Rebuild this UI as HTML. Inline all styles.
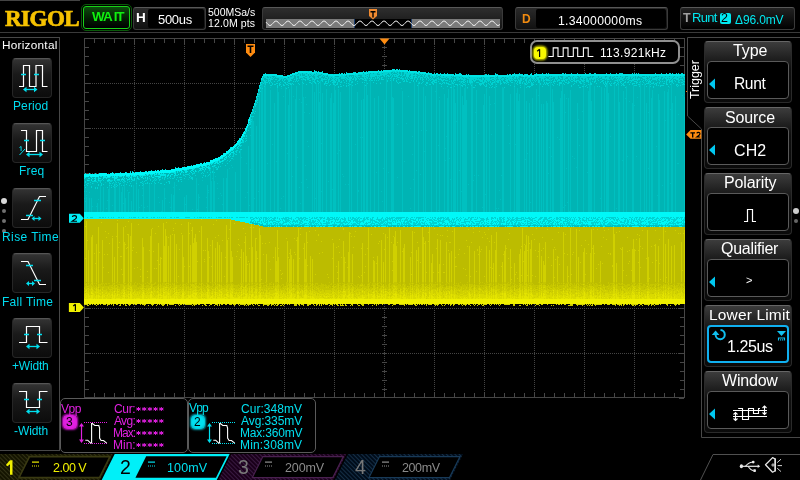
<!DOCTYPE html>
<html><head><meta charset="utf-8">
<style>
*{margin:0;padding:0;box-sizing:border-box}
html,body{width:800px;height:480px;background:#000;overflow:hidden}
body{position:relative;font-family:"Liberation Sans", sans-serif;color:#fff}
.a{position:absolute}
.t{position:absolute;white-space:nowrap;line-height:1;will-change:transform}
</style></head><body>
<svg width="800" height="480" style="position:absolute;left:0;top:0">
<g fill="#444444"><path d="M134.5 40V398" stroke="#444444" stroke-dasharray="1 1"/><path d="M184.5 40V398" stroke="#444444" stroke-dasharray="1 1"/><path d="M234.5 40V398" stroke="#444444" stroke-dasharray="1 1"/><path d="M284.5 40V398" stroke="#444444" stroke-dasharray="1 1"/><path d="M334.5 40V398" stroke="#444444" stroke-dasharray="1 1"/><path d="M384.5 40V398" stroke="#444444" stroke-dasharray="1 1"/><path d="M434.5 40V398" stroke="#444444" stroke-dasharray="1 1"/><path d="M484.5 40V398" stroke="#444444" stroke-dasharray="1 1"/><path d="M534.5 40V398" stroke="#444444" stroke-dasharray="1 1"/><path d="M584.5 40V398" stroke="#444444" stroke-dasharray="1 1"/><path d="M634.5 40V398" stroke="#444444" stroke-dasharray="1 1"/><path d="M86 83.5H684" stroke="#444444" stroke-dasharray="1 1"/><path d="M86 128.5H684" stroke="#444444" stroke-dasharray="1 1"/><path d="M86 173.5H684" stroke="#444444" stroke-dasharray="1 1"/><path d="M86 218.5H684" stroke="#444444" stroke-dasharray="1 1"/><path d="M86 263.5H684" stroke="#444444" stroke-dasharray="1 1"/><path d="M86 308.5H684" stroke="#444444" stroke-dasharray="1 1"/><path d="M86 353.5H684" stroke="#444444" stroke-dasharray="1 1"/></g><g fill="#464646"><rect x="84" y="38" width="601" height="1"/><rect x="84" y="397" width="601" height="1"/><rect x="84" y="38" width="1" height="360"/><rect x="684" y="38" width="1" height="360"/><rect x="84" y="39" width="1" height="5"/><rect x="84" y="392" width="1" height="5"/><rect x="94" y="39" width="1" height="4"/><rect x="94" y="393" width="1" height="4"/><rect x="104" y="39" width="1" height="4"/><rect x="104" y="393" width="1" height="4"/><rect x="114" y="39" width="1" height="4"/><rect x="114" y="393" width="1" height="4"/><rect x="124" y="39" width="1" height="4"/><rect x="124" y="393" width="1" height="4"/><rect x="134" y="39" width="1" height="5"/><rect x="134" y="392" width="1" height="5"/><rect x="144" y="39" width="1" height="4"/><rect x="144" y="393" width="1" height="4"/><rect x="154" y="39" width="1" height="4"/><rect x="154" y="393" width="1" height="4"/><rect x="164" y="39" width="1" height="4"/><rect x="164" y="393" width="1" height="4"/><rect x="174" y="39" width="1" height="4"/><rect x="174" y="393" width="1" height="4"/><rect x="184" y="39" width="1" height="5"/><rect x="184" y="392" width="1" height="5"/><rect x="194" y="39" width="1" height="4"/><rect x="194" y="393" width="1" height="4"/><rect x="204" y="39" width="1" height="4"/><rect x="204" y="393" width="1" height="4"/><rect x="214" y="39" width="1" height="4"/><rect x="214" y="393" width="1" height="4"/><rect x="224" y="39" width="1" height="4"/><rect x="224" y="393" width="1" height="4"/><rect x="234" y="39" width="1" height="5"/><rect x="234" y="392" width="1" height="5"/><rect x="244" y="39" width="1" height="4"/><rect x="244" y="393" width="1" height="4"/><rect x="254" y="39" width="1" height="4"/><rect x="254" y="393" width="1" height="4"/><rect x="264" y="39" width="1" height="4"/><rect x="264" y="393" width="1" height="4"/><rect x="274" y="39" width="1" height="4"/><rect x="274" y="393" width="1" height="4"/><rect x="284" y="39" width="1" height="5"/><rect x="284" y="392" width="1" height="5"/><rect x="294" y="39" width="1" height="4"/><rect x="294" y="393" width="1" height="4"/><rect x="304" y="39" width="1" height="4"/><rect x="304" y="393" width="1" height="4"/><rect x="314" y="39" width="1" height="4"/><rect x="314" y="393" width="1" height="4"/><rect x="324" y="39" width="1" height="4"/><rect x="324" y="393" width="1" height="4"/><rect x="334" y="39" width="1" height="5"/><rect x="334" y="392" width="1" height="5"/><rect x="344" y="39" width="1" height="4"/><rect x="344" y="393" width="1" height="4"/><rect x="354" y="39" width="1" height="4"/><rect x="354" y="393" width="1" height="4"/><rect x="364" y="39" width="1" height="4"/><rect x="364" y="393" width="1" height="4"/><rect x="374" y="39" width="1" height="4"/><rect x="374" y="393" width="1" height="4"/><rect x="384" y="39" width="1" height="5"/><rect x="384" y="392" width="1" height="5"/><rect x="394" y="39" width="1" height="4"/><rect x="394" y="393" width="1" height="4"/><rect x="404" y="39" width="1" height="4"/><rect x="404" y="393" width="1" height="4"/><rect x="414" y="39" width="1" height="4"/><rect x="414" y="393" width="1" height="4"/><rect x="424" y="39" width="1" height="4"/><rect x="424" y="393" width="1" height="4"/><rect x="434" y="39" width="1" height="5"/><rect x="434" y="392" width="1" height="5"/><rect x="444" y="39" width="1" height="4"/><rect x="444" y="393" width="1" height="4"/><rect x="454" y="39" width="1" height="4"/><rect x="454" y="393" width="1" height="4"/><rect x="464" y="39" width="1" height="4"/><rect x="464" y="393" width="1" height="4"/><rect x="474" y="39" width="1" height="4"/><rect x="474" y="393" width="1" height="4"/><rect x="484" y="39" width="1" height="5"/><rect x="484" y="392" width="1" height="5"/><rect x="494" y="39" width="1" height="4"/><rect x="494" y="393" width="1" height="4"/><rect x="504" y="39" width="1" height="4"/><rect x="504" y="393" width="1" height="4"/><rect x="514" y="39" width="1" height="4"/><rect x="514" y="393" width="1" height="4"/><rect x="524" y="39" width="1" height="4"/><rect x="524" y="393" width="1" height="4"/><rect x="534" y="39" width="1" height="5"/><rect x="534" y="392" width="1" height="5"/><rect x="544" y="39" width="1" height="4"/><rect x="544" y="393" width="1" height="4"/><rect x="554" y="39" width="1" height="4"/><rect x="554" y="393" width="1" height="4"/><rect x="564" y="39" width="1" height="4"/><rect x="564" y="393" width="1" height="4"/><rect x="574" y="39" width="1" height="4"/><rect x="574" y="393" width="1" height="4"/><rect x="584" y="39" width="1" height="5"/><rect x="584" y="392" width="1" height="5"/><rect x="594" y="39" width="1" height="4"/><rect x="594" y="393" width="1" height="4"/><rect x="604" y="39" width="1" height="4"/><rect x="604" y="393" width="1" height="4"/><rect x="614" y="39" width="1" height="4"/><rect x="614" y="393" width="1" height="4"/><rect x="624" y="39" width="1" height="4"/><rect x="624" y="393" width="1" height="4"/><rect x="634" y="39" width="1" height="5"/><rect x="634" y="392" width="1" height="5"/><rect x="644" y="39" width="1" height="4"/><rect x="644" y="393" width="1" height="4"/><rect x="654" y="39" width="1" height="4"/><rect x="654" y="393" width="1" height="4"/><rect x="664" y="39" width="1" height="4"/><rect x="664" y="393" width="1" height="4"/><rect x="674" y="39" width="1" height="4"/><rect x="674" y="393" width="1" height="4"/><rect x="684" y="39" width="1" height="5"/><rect x="684" y="392" width="1" height="5"/><rect x="85" y="38" width="5" height="1"/><rect x="679" y="38" width="5" height="1"/><rect x="85" y="47" width="4" height="1"/><rect x="680" y="47" width="4" height="1"/><rect x="85" y="56" width="4" height="1"/><rect x="680" y="56" width="4" height="1"/><rect x="85" y="65" width="4" height="1"/><rect x="680" y="65" width="4" height="1"/><rect x="85" y="74" width="4" height="1"/><rect x="680" y="74" width="4" height="1"/><rect x="85" y="83" width="5" height="1"/><rect x="679" y="83" width="5" height="1"/><rect x="85" y="92" width="4" height="1"/><rect x="680" y="92" width="4" height="1"/><rect x="85" y="101" width="4" height="1"/><rect x="680" y="101" width="4" height="1"/><rect x="85" y="110" width="4" height="1"/><rect x="680" y="110" width="4" height="1"/><rect x="85" y="119" width="4" height="1"/><rect x="680" y="119" width="4" height="1"/><rect x="85" y="128" width="5" height="1"/><rect x="679" y="128" width="5" height="1"/><rect x="85" y="137" width="4" height="1"/><rect x="680" y="137" width="4" height="1"/><rect x="85" y="146" width="4" height="1"/><rect x="680" y="146" width="4" height="1"/><rect x="85" y="155" width="4" height="1"/><rect x="680" y="155" width="4" height="1"/><rect x="85" y="164" width="4" height="1"/><rect x="680" y="164" width="4" height="1"/><rect x="85" y="173" width="5" height="1"/><rect x="679" y="173" width="5" height="1"/><rect x="85" y="182" width="4" height="1"/><rect x="680" y="182" width="4" height="1"/><rect x="85" y="191" width="4" height="1"/><rect x="680" y="191" width="4" height="1"/><rect x="85" y="200" width="4" height="1"/><rect x="680" y="200" width="4" height="1"/><rect x="85" y="209" width="4" height="1"/><rect x="680" y="209" width="4" height="1"/><rect x="85" y="218" width="5" height="1"/><rect x="679" y="218" width="5" height="1"/><rect x="85" y="227" width="4" height="1"/><rect x="680" y="227" width="4" height="1"/><rect x="85" y="236" width="4" height="1"/><rect x="680" y="236" width="4" height="1"/><rect x="85" y="245" width="4" height="1"/><rect x="680" y="245" width="4" height="1"/><rect x="85" y="254" width="4" height="1"/><rect x="680" y="254" width="4" height="1"/><rect x="85" y="263" width="5" height="1"/><rect x="679" y="263" width="5" height="1"/><rect x="85" y="272" width="4" height="1"/><rect x="680" y="272" width="4" height="1"/><rect x="85" y="281" width="4" height="1"/><rect x="680" y="281" width="4" height="1"/><rect x="85" y="290" width="4" height="1"/><rect x="680" y="290" width="4" height="1"/><rect x="85" y="299" width="4" height="1"/><rect x="680" y="299" width="4" height="1"/><rect x="85" y="308" width="5" height="1"/><rect x="679" y="308" width="5" height="1"/><rect x="85" y="317" width="4" height="1"/><rect x="680" y="317" width="4" height="1"/><rect x="85" y="326" width="4" height="1"/><rect x="680" y="326" width="4" height="1"/><rect x="85" y="335" width="4" height="1"/><rect x="680" y="335" width="4" height="1"/><rect x="85" y="344" width="4" height="1"/><rect x="680" y="344" width="4" height="1"/><rect x="85" y="353" width="5" height="1"/><rect x="679" y="353" width="5" height="1"/><rect x="85" y="362" width="4" height="1"/><rect x="680" y="362" width="4" height="1"/><rect x="85" y="371" width="4" height="1"/><rect x="680" y="371" width="4" height="1"/><rect x="85" y="380" width="4" height="1"/><rect x="680" y="380" width="4" height="1"/><rect x="85" y="389" width="4" height="1"/><rect x="680" y="389" width="4" height="1"/><rect x="85" y="398" width="5" height="1"/><rect x="679" y="398" width="5" height="1"/><rect x="382" y="47" width="5" height="1"/><rect x="382" y="56" width="5" height="1"/><rect x="382" y="65" width="5" height="1"/><rect x="382" y="74" width="5" height="1"/><rect x="382" y="83" width="5" height="1"/><rect x="382" y="92" width="5" height="1"/><rect x="382" y="101" width="5" height="1"/><rect x="382" y="110" width="5" height="1"/><rect x="382" y="119" width="5" height="1"/><rect x="382" y="128" width="5" height="1"/><rect x="382" y="137" width="5" height="1"/><rect x="382" y="146" width="5" height="1"/><rect x="382" y="155" width="5" height="1"/><rect x="382" y="164" width="5" height="1"/><rect x="382" y="173" width="5" height="1"/><rect x="382" y="182" width="5" height="1"/><rect x="382" y="191" width="5" height="1"/><rect x="382" y="200" width="5" height="1"/><rect x="382" y="209" width="5" height="1"/><rect x="382" y="218" width="5" height="1"/><rect x="382" y="227" width="5" height="1"/><rect x="382" y="236" width="5" height="1"/><rect x="382" y="245" width="5" height="1"/><rect x="382" y="254" width="5" height="1"/><rect x="382" y="263" width="5" height="1"/><rect x="382" y="272" width="5" height="1"/><rect x="382" y="281" width="5" height="1"/><rect x="382" y="290" width="5" height="1"/><rect x="382" y="299" width="5" height="1"/><rect x="382" y="308" width="5" height="1"/><rect x="382" y="317" width="5" height="1"/><rect x="382" y="326" width="5" height="1"/><rect x="382" y="335" width="5" height="1"/><rect x="382" y="344" width="5" height="1"/><rect x="382" y="353" width="5" height="1"/><rect x="382" y="362" width="5" height="1"/><rect x="382" y="371" width="5" height="1"/><rect x="382" y="380" width="5" height="1"/><rect x="382" y="389" width="5" height="1"/><rect x="94" y="216" width="1" height="5"/><rect x="104" y="216" width="1" height="5"/><rect x="114" y="216" width="1" height="5"/><rect x="124" y="216" width="1" height="5"/><rect x="134" y="216" width="1" height="5"/><rect x="144" y="216" width="1" height="5"/><rect x="154" y="216" width="1" height="5"/><rect x="164" y="216" width="1" height="5"/><rect x="174" y="216" width="1" height="5"/><rect x="184" y="216" width="1" height="5"/><rect x="194" y="216" width="1" height="5"/><rect x="204" y="216" width="1" height="5"/><rect x="214" y="216" width="1" height="5"/><rect x="224" y="216" width="1" height="5"/><rect x="234" y="216" width="1" height="5"/><rect x="244" y="216" width="1" height="5"/><rect x="254" y="216" width="1" height="5"/><rect x="264" y="216" width="1" height="5"/><rect x="274" y="216" width="1" height="5"/><rect x="284" y="216" width="1" height="5"/><rect x="294" y="216" width="1" height="5"/><rect x="304" y="216" width="1" height="5"/><rect x="314" y="216" width="1" height="5"/><rect x="324" y="216" width="1" height="5"/><rect x="334" y="216" width="1" height="5"/><rect x="344" y="216" width="1" height="5"/><rect x="354" y="216" width="1" height="5"/><rect x="364" y="216" width="1" height="5"/><rect x="374" y="216" width="1" height="5"/><rect x="384" y="216" width="1" height="5"/><rect x="394" y="216" width="1" height="5"/><rect x="404" y="216" width="1" height="5"/><rect x="414" y="216" width="1" height="5"/><rect x="424" y="216" width="1" height="5"/><rect x="434" y="216" width="1" height="5"/><rect x="444" y="216" width="1" height="5"/><rect x="454" y="216" width="1" height="5"/><rect x="464" y="216" width="1" height="5"/><rect x="474" y="216" width="1" height="5"/><rect x="484" y="216" width="1" height="5"/><rect x="494" y="216" width="1" height="5"/><rect x="504" y="216" width="1" height="5"/><rect x="514" y="216" width="1" height="5"/><rect x="524" y="216" width="1" height="5"/><rect x="534" y="216" width="1" height="5"/><rect x="544" y="216" width="1" height="5"/><rect x="554" y="216" width="1" height="5"/><rect x="564" y="216" width="1" height="5"/><rect x="574" y="216" width="1" height="5"/><rect x="584" y="216" width="1" height="5"/><rect x="594" y="216" width="1" height="5"/><rect x="604" y="216" width="1" height="5"/><rect x="614" y="216" width="1" height="5"/><rect x="624" y="216" width="1" height="5"/><rect x="634" y="216" width="1" height="5"/><rect x="644" y="216" width="1" height="5"/><rect x="654" y="216" width="1" height="5"/><rect x="664" y="216" width="1" height="5"/><rect x="674" y="216" width="1" height="5"/></g></svg>
<svg class="a" style="left:0;top:0" width="800" height="480" shape-rendering="crispEdges"><path stroke="#00b4b4" d="M84.5 179v6M84.5 186v5M84.5 192v6M84.5 199v13M85.5 178v3M85.5 183v4M85.5 188v13M85.5 202v10M86.5 177v7M86.5 185v6M86.5 192v3M86.5 196v1M87.5 177v2M87.5 181v2M87.5 184v1M87.5 186v26M88.5 177v1M88.5 179v1M88.5 181v2M88.5 184v28M89.5 176v2M89.5 179v1M89.5 181v11M89.5 193v5M90.5 177v5M90.5 183v1M90.5 185v27M91.5 178v1M91.5 181v5M91.5 188v10M92.5 177v1M92.5 179v2M92.5 182v1M92.5 184v22M92.5 207v5M93.5 177v4M93.5 182v1M93.5 184v28M94.5 177v1M94.5 179v1M94.5 182v30M95.5 182v5M95.5 189v23M96.5 177v4M96.5 182v24M96.5 207v5M97.5 177v5M97.5 183v4M97.5 189v14M98.5 182v2M98.5 186v13M98.5 200v12M99.5 176v2M99.5 179v1M99.5 182v30M100.5 177v1M100.5 179v1M100.5 183v2M101.5 177v3M101.5 181v2M101.5 186v26M102.5 176v3M102.5 180v31M103.5 179v1M103.5 181v3M103.5 185v2M104.5 178v34M105.5 178v4M105.5 183v29M106.5 176v1M106.5 179v29M106.5 209v3M107.5 178v2M107.5 182v5M107.5 188v12M107.5 201v11M108.5 178v1M108.5 182v7M109.5 178v1M110.5 177v3M110.5 182v1M110.5 184v28M111.5 176v4M111.5 182v3M111.5 186v1M111.5 188v24M112.5 178v2M112.5 181v2M112.5 184v21M112.5 206v6M113.5 176v1M113.5 178v4M113.5 183v3M113.5 187v25M114.5 181v2M116.5 179v1M116.5 181v1M116.5 183v1M116.5 185v1M116.5 187v25M117.5 178v1M117.5 181v4M117.5 186v26M118.5 176v3M118.5 181v1M118.5 183v29M119.5 177v2M119.5 181v2M120.5 177v4M120.5 182v1M120.5 184v28M121.5 177v2M121.5 181v4M121.5 186v6M122.5 176v2M122.5 180v1M122.5 182v5M123.5 178v1M123.5 181v1M123.5 183v2M123.5 186v17M123.5 204v8M124.5 176v2M125.5 175v6M125.5 182v16M126.5 177v1M126.5 179v5M126.5 185v27M127.5 177v2M127.5 181v1M127.5 183v7M127.5 191v21M128.5 178v1M128.5 180v12M129.5 177v1M129.5 180v1M129.5 182v3M129.5 186v6M129.5 193v19M130.5 175v2M130.5 178v5M130.5 184v28M131.5 180v1M131.5 182v3M131.5 187v14M132.5 176v3M132.5 181v29M132.5 211v1M133.5 177v2M133.5 181v4M134.5 177v1M134.5 181v31M135.5 177v35M136.5 176v2M137.5 175v1M137.5 179v33M138.5 175v3M138.5 180v9M139.5 176v3M139.5 180v5M139.5 186v21M139.5 208v4M140.5 177v5M140.5 183v29M141.5 176v1M141.5 178v4M141.5 183v22M141.5 206v6M142.5 178v3M142.5 182v1M142.5 184v1M142.5 186v2M142.5 189v6M142.5 196v16M143.5 176v2M143.5 179v3M144.5 176v5M144.5 182v25M144.5 208v4M145.5 174v1M145.5 176v1M145.5 179v1M145.5 181v2M145.5 184v28M146.5 175v5M146.5 181v2M146.5 184v28M147.5 176v1M147.5 180v2M147.5 184v22M147.5 207v5M148.5 175v37M149.5 174v2M149.5 177v1M149.5 179v4M150.5 175v4M150.5 181v31M151.5 177v6M151.5 184v28M152.5 175v2M152.5 178v3M152.5 182v30M153.5 174v3M153.5 178v2M153.5 181v31M155.5 173v1M155.5 175v1M155.5 177v1M155.5 179v1M155.5 181v2M155.5 184v28M156.5 175v1M156.5 177v2M156.5 181v31M157.5 174v2M157.5 177v35M158.5 175v1M158.5 179v3M158.5 183v14M158.5 198v14M159.5 175v1M159.5 178v1M159.5 181v21M159.5 203v9M160.5 173v1M160.5 178v1M160.5 180v3M160.5 184v28M161.5 176v7M161.5 184v27M162.5 173v1M162.5 176v1M162.5 179v21M163.5 176v36M164.5 173v1M164.5 176v1M164.5 180v4M164.5 185v3M165.5 173v1M165.5 178v20M165.5 199v13M166.5 173v9M166.5 183v29M167.5 173v2M167.5 177v1M167.5 179v33M168.5 173v1M168.5 176v2M168.5 179v2M168.5 182v30M169.5 174v3M169.5 178v3M169.5 184v18M169.5 203v9M170.5 173v2M170.5 177v1M170.5 179v28M170.5 208v4M171.5 173v1M171.5 175v19M172.5 173v1M172.5 175v3M172.5 179v33M173.5 173v5M173.5 179v8M173.5 188v7M174.5 174v1M174.5 178v4M175.5 176v36M176.5 171v4M176.5 176v3M176.5 180v5M176.5 186v26M177.5 173v2M177.5 176v1M177.5 178v34M178.5 171v3M178.5 175v5M178.5 182v30M179.5 172v5M179.5 178v11M179.5 190v22M180.5 171v2M180.5 175v2M180.5 178v1M180.5 180v32M181.5 173v4M181.5 178v1M181.5 180v1M181.5 182v30M182.5 170v1M182.5 173v39M183.5 170v2M183.5 173v1M183.5 176v36M184.5 171v4M184.5 176v2M184.5 179v18M185.5 173v1M185.5 175v1M185.5 177v27M185.5 205v7M186.5 173v1M186.5 175v20M187.5 170v1M187.5 172v2M187.5 175v37M188.5 170v4M188.5 175v4M188.5 180v32M189.5 169v4M189.5 174v1M189.5 176v1M189.5 178v34M190.5 169v2M190.5 172v4M190.5 177v1M190.5 179v33M191.5 169v1M191.5 171v1M191.5 173v4M191.5 179v33M192.5 171v2M192.5 175v2M192.5 180v29M192.5 210v2M193.5 170v1M193.5 172v1M193.5 174v38M194.5 169v3M194.5 174v38M195.5 168v2M195.5 172v3M195.5 176v36M196.5 168v3M196.5 172v6M197.5 168v41M197.5 210v2M198.5 168v3M198.5 173v11M198.5 185v9M199.5 167v1M199.5 169v1M199.5 171v26M199.5 198v14M200.5 166v2M200.5 171v41M201.5 167v1M201.5 169v1M201.5 171v2M201.5 174v38M202.5 170v2M202.5 173v4M202.5 178v2M202.5 181v31M203.5 166v1M203.5 168v1M203.5 170v3M203.5 174v1M203.5 176v36M204.5 166v1M204.5 168v2M204.5 172v40M205.5 167v1M205.5 170v5M205.5 177v35M206.5 168v29M206.5 198v9M206.5 208v4M207.5 165v2M207.5 168v4M207.5 173v3M207.5 177v8M208.5 165v1M208.5 169v6M208.5 176v14M208.5 191v1M208.5 193v19M209.5 171v3M209.5 175v37M210.5 164v3M211.5 165v16M212.5 164v2M212.5 167v4M212.5 173v5M212.5 179v33M213.5 163v2M214.5 162v1M214.5 164v1M214.5 167v5M214.5 173v8M215.5 164v1M215.5 166v1M215.5 168v8M215.5 177v35M216.5 163v4M216.5 170v42M217.5 164v4M217.5 170v13M217.5 184v4M217.5 189v23M218.5 161v2M218.5 164v2M218.5 168v30M218.5 199v13M219.5 163v1M219.5 165v47M220.5 159v2M220.5 163v3M220.5 167v26M220.5 194v18M221.5 159v2M221.5 162v33M221.5 196v16M222.5 159v1M222.5 162v1M222.5 164v40M222.5 205v7M223.5 157v3M223.5 162v16M224.5 157v1M224.5 161v51M225.5 156v1M225.5 158v1M225.5 160v5M225.5 166v46M226.5 155v1M226.5 159v2M226.5 162v16M227.5 154v6M227.5 161v2M227.5 164v5M228.5 154v2M228.5 157v55M229.5 153v1M229.5 156v1M229.5 158v3M229.5 162v6M229.5 169v43M230.5 152v1M230.5 155v1M230.5 157v3M230.5 161v51M231.5 151v1M231.5 153v5M231.5 159v6M231.5 166v46M232.5 151v1M232.5 153v3M232.5 157v1M232.5 159v8M232.5 168v44M233.5 150v1M233.5 157v2M233.5 160v52M234.5 148v5M234.5 154v58M235.5 147v1M235.5 149v2M235.5 152v2M235.5 155v17M236.5 146v4M236.5 153v1M236.5 155v57M237.5 145v2M237.5 149v1M237.5 151v39M237.5 191v21M238.5 145v1M238.5 147v1M238.5 149v63M239.5 146v5M239.5 153v59M240.5 144v1M240.5 147v2M241.5 140v2M241.5 143v2M241.5 146v3M241.5 150v7M241.5 158v54M242.5 138v1M242.5 143v69M243.5 137v1M243.5 139v1M243.5 143v69M244.5 134v1M244.5 137v75M245.5 131v1M245.5 134v4M245.5 139v2M245.5 142v55M245.5 198v14M246.5 132v3M246.5 137v1M246.5 139v1M246.5 141v22M246.5 164v48M247.5 128v64M247.5 193v19M248.5 124v1M248.5 126v4M248.5 131v15M249.5 121v1M249.5 123v1M249.5 125v80M249.5 206v6M250.5 125v2M250.5 128v7M250.5 136v33M250.5 170v42M251.5 114v2M251.5 117v2M252.5 111v1M252.5 114v2M253.5 108v2M253.5 113v3M253.5 117v4M254.5 106v7M254.5 114v84M254.5 199v13M255.5 107v4M255.5 112v100M256.5 98v2M256.5 102v2M256.5 105v21M257.5 97v1M257.5 101v1M257.5 103v109M258.5 92v2M258.5 95v1M258.5 97v94M258.5 192v20M259.5 88v1M259.5 91v2M260.5 86v1M260.5 89v2M260.5 92v120M261.5 81v1M261.5 83v1M262.5 80v2M263.5 77v1M263.5 81v2M263.5 84v128M264.5 78v2M265.5 78v2M266.5 79v1M266.5 81v1M266.5 83v129M267.5 76v2M267.5 79v3M267.5 83v80M267.5 164v48M268.5 77v1M268.5 82v130M269.5 79v1M269.5 81v1M269.5 84v128M270.5 77v1M270.5 82v3M270.5 86v1M270.5 88v2M271.5 80v2M271.5 83v2M271.5 86v126M272.5 76v1M272.5 78v1M272.5 80v3M272.5 85v59M272.5 145v67M273.5 76v2M273.5 79v133M274.5 76v1M274.5 78v3M274.5 82v2M274.5 85v18M275.5 77v2M275.5 80v4M275.5 85v127M276.5 78v1M276.5 80v3M276.5 84v77M276.5 162v50M277.5 78v3M277.5 82v1M277.5 84v1M278.5 78v2M278.5 81v11M279.5 81v2M279.5 86v126M280.5 80v2M280.5 83v1M280.5 85v123M280.5 209v3M281.5 79v7M281.5 87v1M281.5 89v109M281.5 199v13M282.5 81v131M283.5 79v2M283.5 82v2M283.5 86v10M283.5 97v99M283.5 197v15M284.5 78v1M284.5 81v1M284.5 83v2M284.5 86v126M285.5 78v1M285.5 80v2M285.5 84v3M286.5 79v5M286.5 85v3M286.5 89v123M287.5 80v2M287.5 83v1M287.5 85v68M287.5 154v58M288.5 77v1M288.5 82v1M288.5 84v1M288.5 86v1M288.5 88v17M289.5 82v1M289.5 84v5M290.5 76v1M290.5 81v2M290.5 85v40M290.5 126v86M291.5 76v1M291.5 79v1M291.5 81v2M292.5 75v1M292.5 79v4M292.5 84v92M292.5 177v35M293.5 78v3M293.5 82v2M293.5 85v11M293.5 97v115M294.5 75v4M294.5 80v132M295.5 76v5M295.5 82v17M296.5 81v5M297.5 74v1M297.5 76v2M297.5 79v2M297.5 82v75M297.5 158v54M298.5 73v1M298.5 76v4M298.5 81v2M298.5 84v128M299.5 79v5M299.5 85v14M299.5 100v87M299.5 188v24M300.5 74v2M300.5 78v125M300.5 204v8M301.5 78v1M301.5 80v22M301.5 103v79M301.5 183v29M302.5 73v3M303.5 75v1M303.5 77v1M303.5 80v3M303.5 84v13M304.5 74v2M304.5 77v2M304.5 80v32M304.5 113v99M305.5 76v1M305.5 78v1M305.5 81v16M305.5 98v67M305.5 166v46M306.5 73v1M306.5 76v1M306.5 78v6M306.5 85v19M306.5 105v74M306.5 180v32M307.5 80v61M307.5 142v45M307.5 188v24M308.5 74v2M308.5 80v66M308.5 147v65M309.5 76v2M309.5 79v1M309.5 81v1M309.5 83v30M309.5 114v98M310.5 74v1M310.5 76v1M310.5 78v2M310.5 81v1M310.5 83v129M311.5 75v1M311.5 78v5M311.5 84v128M312.5 76v1M313.5 75v3M313.5 80v1M313.5 82v130M314.5 74v1M314.5 76v3M314.5 83v9M315.5 80v2M315.5 84v114M315.5 199v13M316.5 73v1M316.5 79v4M317.5 76v1M317.5 79v1M317.5 82v130M318.5 75v3M318.5 79v2M318.5 82v1M319.5 75v1M319.5 78v4M319.5 83v9M319.5 93v9M320.5 75v1M320.5 78v2M321.5 74v1M321.5 77v1M321.5 81v62M321.5 144v47M321.5 192v20M322.5 76v2M322.5 82v11M323.5 75v1M323.5 77v2M323.5 80v132M324.5 76v2M324.5 80v3M324.5 85v127M325.5 78v1M325.5 80v1M325.5 84v128M326.5 76v1M326.5 78v1M326.5 80v1M326.5 82v1M326.5 84v1M326.5 86v3M327.5 75v2M327.5 79v4M327.5 84v128M328.5 77v2M328.5 83v98M328.5 182v30M329.5 80v5M329.5 86v126M330.5 78v3M330.5 82v2M330.5 85v13M331.5 77v1M331.5 79v1M331.5 81v12M332.5 78v1M332.5 81v1M332.5 83v106M332.5 190v22M333.5 85v18M334.5 79v1M335.5 76v1M335.5 78v1M335.5 80v1M335.5 83v2M335.5 86v4M336.5 76v1M336.5 81v3M336.5 85v127M337.5 76v1M337.5 79v3M337.5 85v68M337.5 154v58M338.5 76v1M338.5 82v4M338.5 88v1M339.5 78v1M339.5 82v68M339.5 151v61M340.5 77v5M340.5 83v1M340.5 85v1M340.5 87v5M341.5 79v2M341.5 83v3M341.5 87v125M342.5 79v95M342.5 175v37M343.5 79v1M343.5 81v4M343.5 86v90M343.5 177v35M344.5 79v3M344.5 83v129M345.5 76v1M345.5 78v1M345.5 80v104M345.5 185v27M346.5 75v2M346.5 79v1M346.5 82v1M346.5 84v1M346.5 87v125M347.5 77v1M347.5 80v132M348.5 78v1M348.5 80v3M348.5 84v1M348.5 86v98M348.5 185v27M349.5 75v2M350.5 75v1M350.5 81v3M350.5 85v127M351.5 75v2M351.5 79v1M352.5 75v1M352.5 77v2M352.5 80v1M352.5 83v2M352.5 86v126M353.5 75v3M353.5 80v132M354.5 78v134M355.5 76v1M355.5 81v3M355.5 85v59M355.5 145v67M356.5 77v1M356.5 80v132M357.5 78v3M357.5 82v1M357.5 84v8M358.5 75v1M358.5 77v1M358.5 79v111M358.5 192v20M359.5 75v1M359.5 77v2M359.5 80v132M360.5 75v3M360.5 79v58M360.5 138v74M361.5 75v3M361.5 79v21M362.5 77v1M362.5 80v2M362.5 83v54M362.5 138v74M363.5 73v1M363.5 77v2M363.5 80v19M364.5 79v1M364.5 81v1M364.5 83v1M365.5 75v1M365.5 77v1M365.5 81v4M365.5 86v126M367.5 74v1M367.5 76v1M367.5 79v4M367.5 84v11M368.5 77v135M369.5 74v4M369.5 79v1M369.5 81v131M370.5 73v1M371.5 79v1M371.5 81v131M372.5 77v3M372.5 81v131M373.5 73v1M373.5 77v1M373.5 79v3M373.5 83v128M374.5 77v2M374.5 81v17M375.5 76v1M375.5 79v133M376.5 76v4M376.5 81v2M376.5 84v88M376.5 173v39M377.5 73v2M377.5 79v133M378.5 72v1M378.5 74v1M378.5 76v1M378.5 78v2M378.5 81v15M379.5 74v1M379.5 77v1M379.5 80v132M380.5 76v6M380.5 84v128M381.5 76v1M381.5 80v111M381.5 192v20M382.5 73v1M382.5 75v2M382.5 78v1M382.5 80v121M382.5 202v10M383.5 76v3M383.5 80v88M383.5 169v43M384.5 77v23M385.5 75v137M387.5 74v1M387.5 76v4M387.5 82v130M388.5 73v2M388.5 77v1M388.5 79v93M388.5 173v39M389.5 74v2M389.5 77v53M389.5 131v81M390.5 76v2M390.5 79v1M390.5 81v131M391.5 72v2M391.5 75v1M392.5 72v1M392.5 74v1M392.5 77v20M393.5 73v1M393.5 75v3M393.5 81v17M394.5 72v2M394.5 77v1M394.5 79v133M395.5 73v1M395.5 75v1M395.5 77v135M396.5 73v1M396.5 77v1M396.5 79v1M396.5 82v130M397.5 72v1M397.5 74v1M397.5 78v4M397.5 83v41M397.5 125v52M397.5 178v34M398.5 76v1M398.5 78v1M398.5 80v3M398.5 84v128M399.5 72v2M399.5 75v2M399.5 78v4M399.5 83v129M400.5 72v3M400.5 76v2M400.5 79v3M400.5 83v129M401.5 76v1M401.5 79v9M401.5 89v123M402.5 72v4M402.5 77v1M402.5 81v10M403.5 72v3M403.5 76v2M403.5 80v1M403.5 82v130M404.5 76v4M404.5 82v79M404.5 162v50M405.5 74v3M405.5 79v133M406.5 77v2M406.5 82v41M406.5 124v88M407.5 72v1M407.5 79v2M407.5 82v130M408.5 77v2M408.5 80v16M408.5 97v115M409.5 75v2M409.5 78v4M409.5 83v129M410.5 74v2M410.5 77v1M410.5 79v3M410.5 83v105M410.5 189v19M410.5 209v3M411.5 79v1M411.5 81v131M412.5 79v57M412.5 137v17M412.5 155v57M413.5 74v1M413.5 76v4M413.5 82v97M413.5 180v32M414.5 73v2M414.5 76v1M414.5 80v2M415.5 78v134M416.5 74v1M416.5 76v1M416.5 78v2M416.5 82v88M416.5 171v41M417.5 74v4M417.5 80v5M417.5 86v126M418.5 75v1M418.5 78v3M419.5 73v1M419.5 77v5M419.5 84v128M420.5 74v1M420.5 76v1M420.5 80v94M420.5 175v37M421.5 75v2M421.5 78v5M421.5 84v46M421.5 131v81M422.5 74v1M422.5 76v1M422.5 81v1M422.5 83v129M423.5 77v2M423.5 80v1M423.5 82v5M424.5 75v2M424.5 78v73M424.5 152v60M425.5 74v1M425.5 78v6M425.5 85v11M426.5 77v1M426.5 80v2M426.5 84v1M426.5 86v44M426.5 131v81M427.5 78v4M427.5 84v128M428.5 75v2M428.5 79v1M428.5 81v131M429.5 75v4M429.5 80v4M429.5 85v127M430.5 77v1M430.5 79v1M430.5 81v3M430.5 85v127M431.5 78v1M431.5 80v2M431.5 83v3M432.5 76v2M432.5 80v1M432.5 84v128M433.5 78v1M433.5 82v1M433.5 85v127M434.5 78v2M434.5 83v129M435.5 77v2M435.5 81v1M435.5 83v8M435.5 92v120M436.5 75v1M437.5 77v1M437.5 79v133M438.5 76v1M438.5 80v1M438.5 82v63M438.5 146v64M438.5 211v1M439.5 76v3M439.5 80v3M439.5 84v13M439.5 98v2M440.5 75v1M440.5 77v1M440.5 80v3M440.5 84v128M441.5 78v1M441.5 81v3M441.5 85v1M441.5 87v125M442.5 78v2M442.5 82v1M442.5 84v128M443.5 76v1M443.5 78v1M443.5 81v1M443.5 83v5M443.5 89v123M444.5 78v1M444.5 80v2M444.5 84v10M445.5 78v2M445.5 81v67M445.5 149v11M445.5 161v51M446.5 77v1M446.5 79v1M446.5 81v1M446.5 84v52M446.5 137v75M447.5 78v2M447.5 81v2M447.5 84v2M447.5 87v11M448.5 78v5M448.5 85v4M449.5 80v1M449.5 82v2M449.5 85v73M449.5 159v53M450.5 79v5M450.5 85v2M450.5 88v91M450.5 180v32M451.5 76v1M451.5 78v2M452.5 77v1M452.5 79v3M452.5 84v128M453.5 76v4M453.5 82v1M454.5 77v1M454.5 81v1M454.5 83v3M454.5 87v2M455.5 77v2M455.5 81v3M455.5 85v18M456.5 79v5M456.5 85v36M456.5 122v90M457.5 81v3M458.5 80v132M459.5 77v1M459.5 80v1M459.5 82v2M459.5 85v85M459.5 171v41M460.5 79v2M461.5 80v1M461.5 83v2M461.5 86v105M461.5 192v20M462.5 77v1M462.5 80v1M462.5 82v1M462.5 84v1M462.5 87v9M463.5 78v1M463.5 83v1M463.5 85v20M464.5 81v1M464.5 83v1M464.5 85v3M465.5 78v1M465.5 80v1M465.5 82v1M466.5 78v22M467.5 79v1M467.5 83v4M467.5 89v123M468.5 79v5M468.5 85v99M468.5 185v27M469.5 77v1M469.5 83v129M470.5 85v127M472.5 80v1M473.5 81v6M473.5 88v92M473.5 181v31M474.5 79v1M474.5 82v5M474.5 88v87M474.5 176v36M475.5 81v4M475.5 86v26M475.5 113v99M476.5 80v2M476.5 83v7M477.5 78v1M477.5 80v2M477.5 83v129M478.5 80v2M478.5 83v50M478.5 134v41M478.5 176v36M479.5 78v1M479.5 81v2M479.5 85v127M480.5 78v1M480.5 82v1M480.5 86v126M481.5 77v3M481.5 82v1M481.5 85v127M482.5 84v123M482.5 208v4M483.5 77v1M483.5 80v2M483.5 85v20M484.5 78v2M484.5 83v2M484.5 86v8M485.5 82v4M485.5 87v107M485.5 195v17M486.5 80v1M486.5 83v1M486.5 87v1M487.5 81v131M488.5 82v1M488.5 84v128M489.5 81v3M489.5 85v2M489.5 88v8M490.5 77v2M490.5 80v1M490.5 83v2M490.5 86v18M490.5 105v107M491.5 77v1M491.5 80v3M491.5 85v2M491.5 88v46M491.5 135v77M492.5 77v1M492.5 79v1M492.5 81v1M492.5 85v1M492.5 87v125M493.5 77v1M493.5 79v1M493.5 81v1M493.5 83v129M494.5 80v1M494.5 83v4M494.5 88v15M494.5 104v108M496.5 77v1M496.5 79v2M496.5 82v2M496.5 85v1M496.5 87v121M496.5 209v3M497.5 76v4M497.5 83v127M497.5 211v1M498.5 79v1M498.5 83v125M498.5 209v3M499.5 81v109M499.5 191v21M500.5 79v1M500.5 85v114M500.5 200v12M501.5 78v1M501.5 80v3M501.5 84v91M501.5 176v36M502.5 77v1M502.5 81v6M503.5 77v1M503.5 80v1M503.5 83v5M504.5 78v4M504.5 84v3M504.5 88v124M505.5 77v1M505.5 79v1M505.5 81v1M505.5 83v129M506.5 82v1M506.5 84v128M507.5 78v1M507.5 83v129M508.5 80v2M508.5 83v1M508.5 85v40M508.5 126v86M509.5 81v62M509.5 144v68M510.5 79v1M510.5 82v3M510.5 86v8M511.5 81v1M511.5 83v129M512.5 77v1M512.5 79v1M512.5 81v1M512.5 83v129M513.5 77v2M513.5 80v131M514.5 76v1M514.5 79v1M514.5 81v1M515.5 79v1M515.5 82v62M515.5 145v67M516.5 77v3M516.5 81v2M516.5 84v9M517.5 79v2M517.5 83v1M517.5 85v3M518.5 78v1M518.5 81v20M519.5 76v4M519.5 84v10M520.5 76v2M520.5 84v1M520.5 86v1M520.5 88v124M521.5 77v1M521.5 81v131M522.5 77v5M522.5 84v128M523.5 77v1M523.5 80v1M523.5 82v130M524.5 79v3M525.5 77v2M525.5 81v2M525.5 85v74M525.5 160v52M526.5 77v1M526.5 83v1M526.5 85v2M526.5 88v13M527.5 79v4M527.5 84v2M527.5 87v66M527.5 154v58M528.5 78v2M528.5 83v3M528.5 87v125M529.5 78v1M529.5 81v1M529.5 83v3M529.5 88v15M530.5 77v1M530.5 82v4M530.5 87v28M530.5 116v86M530.5 203v9M531.5 78v4M531.5 86v126M532.5 79v1M532.5 81v2M532.5 86v12M533.5 80v2M533.5 83v1M533.5 85v127M534.5 79v1M534.5 81v131M535.5 77v2M535.5 80v1M535.5 82v130M536.5 79v1M536.5 81v3M536.5 85v4M537.5 76v1M537.5 80v132M538.5 76v1M538.5 83v12M538.5 96v116M539.5 78v2M540.5 78v5M540.5 85v127M541.5 81v23M542.5 79v7M542.5 87v125M543.5 82v2M543.5 85v19M544.5 78v2M544.5 81v1M544.5 84v128M545.5 76v1M545.5 78v1M545.5 80v4M545.5 85v127M546.5 77v1M546.5 81v1M546.5 84v17M547.5 77v2M547.5 81v2M547.5 85v18M548.5 77v2M548.5 81v2M548.5 84v1M548.5 86v87M548.5 174v38M549.5 76v1M549.5 79v1M549.5 81v1M549.5 83v64M549.5 148v64M551.5 76v1M551.5 78v2M551.5 81v1M551.5 83v73M551.5 157v55M552.5 78v1M552.5 80v4M552.5 85v4M553.5 77v4M553.5 83v2M553.5 86v16M554.5 77v2M554.5 82v1M554.5 84v128M555.5 79v2M555.5 82v130M556.5 80v132M557.5 79v1M557.5 82v2M557.5 85v52M557.5 138v74M558.5 76v3M558.5 81v131M559.5 78v1M559.5 81v1M559.5 86v53M559.5 140v72M560.5 76v1M560.5 79v3M560.5 84v14M561.5 76v2M561.5 79v1M561.5 81v1M561.5 84v7M562.5 76v4M562.5 82v2M563.5 81v2M563.5 84v123M563.5 208v4M564.5 79v1M564.5 82v2M564.5 85v9M565.5 78v1M565.5 80v2M565.5 83v29M565.5 113v92M565.5 206v6M566.5 77v2M566.5 81v1M566.5 83v15M566.5 99v69M566.5 169v43M567.5 77v2M567.5 80v3M567.5 84v118M567.5 203v9M568.5 76v1M568.5 79v2M568.5 84v14M569.5 76v1M569.5 80v2M569.5 83v128M570.5 77v3M570.5 81v9M571.5 80v1M571.5 82v3M571.5 87v125M572.5 77v2M572.5 80v1M572.5 82v74M572.5 157v55M573.5 76v1M573.5 79v1M573.5 81v3M573.5 85v127M574.5 82v1M574.5 84v74M574.5 159v53M575.5 78v3M575.5 82v130M576.5 79v1M576.5 83v84M576.5 168v44M577.5 76v1M577.5 78v2M577.5 81v22M578.5 76v4M578.5 82v3M578.5 86v33M578.5 120v92M579.5 77v4M579.5 83v4M579.5 88v57M579.5 146v66M580.5 76v1M580.5 80v1M580.5 84v3M580.5 88v124M581.5 78v1M581.5 81v2M581.5 84v128M582.5 78v2M582.5 82v4M582.5 87v24M582.5 112v100M584.5 79v1M584.5 81v1M584.5 83v1M584.5 85v127M585.5 78v8M585.5 87v125M586.5 82v3M586.5 86v126M587.5 77v1M587.5 82v5M587.5 88v84M587.5 173v39M588.5 77v3M588.5 83v1M588.5 85v6M589.5 77v1M589.5 80v4M590.5 76v1M591.5 79v4M591.5 85v16M592.5 76v2M592.5 80v1M592.5 82v130M593.5 76v1M593.5 80v132M594.5 79v2M594.5 83v3M595.5 82v130M596.5 78v5M596.5 84v128M597.5 78v1M597.5 80v6M597.5 87v125M598.5 76v2M598.5 79v1M598.5 81v131M599.5 78v8M599.5 87v125M600.5 78v1M600.5 80v2M600.5 83v115M600.5 199v13M601.5 77v2M601.5 80v1M601.5 82v5M602.5 79v1M602.5 82v130M603.5 79v1M603.5 81v1M603.5 84v128M604.5 79v5M604.5 85v3M605.5 76v2M605.5 80v1M605.5 84v1M605.5 87v125M606.5 76v1M606.5 79v4M608.5 80v1M608.5 82v11M609.5 77v2M609.5 80v3M609.5 84v37M609.5 122v90M610.5 76v5M610.5 82v2M610.5 86v50M610.5 137v75M611.5 79v4M611.5 84v1M611.5 86v126M612.5 77v2M612.5 80v132M613.5 77v1M613.5 79v4M613.5 84v128M614.5 76v1M614.5 78v2M615.5 78v2M615.5 81v1M615.5 83v129M616.5 76v1M616.5 79v1M616.5 81v3M616.5 86v122M616.5 209v3M617.5 76v1M617.5 78v1M617.5 82v1M617.5 84v128M619.5 78v1M619.5 81v21M620.5 76v1M620.5 80v1M620.5 83v129M621.5 80v1M621.5 82v1M621.5 84v1M621.5 86v126M622.5 77v1M622.5 81v3M622.5 85v75M622.5 161v51M623.5 79v1M623.5 81v2M623.5 86v5M624.5 78v4M624.5 83v2M624.5 86v126M625.5 76v3M625.5 80v1M625.5 83v4M625.5 88v10M625.5 99v113M626.5 76v1M626.5 79v7M627.5 76v1M627.5 78v1M627.5 80v2M627.5 83v73M627.5 157v55M628.5 80v1M628.5 83v129M629.5 79v1M629.5 81v3M629.5 85v16M629.5 102v110M630.5 77v3M630.5 81v1M630.5 83v129M631.5 79v1M631.5 82v130M632.5 78v1M632.5 81v2M632.5 85v18M633.5 77v1M633.5 81v2M633.5 84v1M634.5 80v1M634.5 82v1M634.5 84v1M634.5 86v19M634.5 106v106M635.5 76v3M635.5 80v1M635.5 82v3M635.5 86v126M636.5 80v1M636.5 84v1M636.5 86v70M636.5 157v55M637.5 77v2M637.5 81v1M637.5 83v14M637.5 98v114M638.5 76v2M638.5 80v4M638.5 85v48M638.5 134v78M639.5 77v1M639.5 80v2M639.5 83v1M639.5 87v125M640.5 77v4M641.5 77v2M641.5 80v132M642.5 76v1M642.5 78v3M642.5 82v2M642.5 85v127M643.5 76v1M643.5 79v1M643.5 81v1M643.5 83v129M644.5 76v1M644.5 79v4M645.5 81v3M645.5 85v127M646.5 76v1M646.5 78v1M646.5 80v1M646.5 82v1M646.5 84v2M646.5 87v16M647.5 77v3M647.5 81v2M647.5 84v128M648.5 78v1M648.5 80v1M648.5 84v28M648.5 113v55M648.5 169v43M649.5 76v2M650.5 79v2M650.5 83v1M650.5 85v1M650.5 87v125M651.5 77v3M651.5 81v2M651.5 84v14M652.5 80v3M652.5 84v6M653.5 77v1M653.5 80v2M653.5 84v2M653.5 88v124M654.5 77v1M654.5 80v4M654.5 85v127M655.5 76v1M655.5 80v3M655.5 84v128M656.5 76v1M656.5 81v2M656.5 86v60M656.5 147v65M657.5 79v3M657.5 83v112M657.5 196v16M658.5 76v1M658.5 78v1M658.5 80v5M658.5 86v8M659.5 81v1M659.5 84v16M660.5 79v2M660.5 82v3M660.5 87v125M661.5 77v8M661.5 86v126M662.5 77v1M662.5 80v1M662.5 82v3M662.5 86v99M662.5 186v26M663.5 79v4M663.5 84v1M663.5 86v126M664.5 78v3M664.5 82v1M664.5 84v7M665.5 76v1M665.5 79v41M665.5 121v91M666.5 85v127M667.5 78v1M667.5 81v3M667.5 85v7M668.5 80v6M668.5 87v2M669.5 76v1M669.5 78v1M669.5 83v4M669.5 88v124M670.5 80v1M670.5 82v2M670.5 85v24M670.5 110v73M670.5 184v28M671.5 79v1M672.5 78v1M672.5 83v20M673.5 77v1M673.5 79v4M673.5 84v128M674.5 76v1M674.5 79v1M674.5 81v131M675.5 79v2M675.5 82v14M676.5 80v4M676.5 86v126M677.5 77v1M677.5 80v4M677.5 85v1M677.5 87v76M677.5 164v48M678.5 83v2M678.5 86v28M678.5 115v48M678.5 164v48M679.5 78v2M679.5 81v1M679.5 83v129M680.5 76v1M680.5 78v1M680.5 80v5M680.5 86v126M681.5 78v1M681.5 80v2M681.5 83v129M682.5 77v2M682.5 81v1M682.5 83v1M682.5 85v10M682.5 96v116M683.5 78v3M683.5 82v1M683.5 85v127M684.5 76v1M684.5 80v1M684.5 83v1M684.5 85v12"/><path stroke="#00c0c0" d="M84.5 191v1M84.5 198v1M85.5 201v1M86.5 191v1M86.5 195v1M86.5 197v15M87.5 179v1M89.5 192v1M89.5 198v14M90.5 184v1M91.5 198v14M92.5 206v1M93.5 183v1M96.5 206v1M97.5 203v9M98.5 181v1M98.5 199v1M99.5 181v1M100.5 185v27M102.5 211v1M103.5 187v25M105.5 182v1M106.5 208v1M107.5 200v1M108.5 189v23M109.5 181v1M109.5 184v1M109.5 186v26M112.5 205v1M114.5 183v1M114.5 186v1M114.5 188v24M115.5 176v1M115.5 179v2M115.5 182v30M116.5 180v1M119.5 185v27M121.5 192v20M122.5 187v25M123.5 203v1M124.5 179v1M124.5 182v30M125.5 198v14M127.5 190v1M128.5 192v20M129.5 192v1M131.5 201v11M132.5 210v1M133.5 179v1M133.5 185v27M136.5 178v5M136.5 184v28M138.5 189v23M139.5 207v1M141.5 205v1M142.5 188v1M142.5 195v1M143.5 182v2M143.5 185v27M144.5 207v1M146.5 183v1M147.5 206v1M149.5 184v28M154.5 176v3M154.5 180v2M154.5 183v29M156.5 180v1M157.5 173v1M158.5 197v1M159.5 202v1M161.5 211v1M162.5 200v12M164.5 188v24M165.5 198v1M168.5 178v1M169.5 202v1M170.5 207v1M171.5 194v18M173.5 187v1M173.5 195v17M174.5 182v30M176.5 185v1M179.5 189v1M182.5 172v1M184.5 197v15M185.5 204v1M186.5 195v17M188.5 179v1M190.5 178v1M192.5 209v1M196.5 178v34M197.5 209v1M198.5 172v1M198.5 184v1M198.5 194v18M199.5 197v1M202.5 180v1M206.5 197v1M206.5 207v1M207.5 176v1M207.5 185v27M208.5 190v1M208.5 192v1M209.5 166v1M210.5 167v1M210.5 169v3M210.5 173v39M211.5 181v31M212.5 178v1M213.5 165v1M213.5 167v45M214.5 181v31M215.5 176v1M216.5 168v1M217.5 183v1M217.5 188v1M218.5 198v1M220.5 193v1M221.5 195v1M222.5 204v1M223.5 161v1M223.5 178v34M224.5 160v1M226.5 161v1M226.5 178v34M227.5 169v43M229.5 168v1M231.5 165v1M232.5 167v1M233.5 159v1M235.5 172v40M237.5 190v1M240.5 150v62M241.5 157v1M245.5 197v1M246.5 163v1M247.5 192v1M248.5 146v66M249.5 205v1M250.5 135v1M250.5 169v1M250.5 222v1M251.5 120v1M251.5 122v90M252.5 117v95M252.5 222v2M253.5 121v91M253.5 223v1M254.5 198v1M254.5 223v1M255.5 223v2M256.5 126v86M256.5 223v2M257.5 223v2M258.5 191v1M259.5 93v1M259.5 95v117M259.5 224v1M260.5 225v1M261.5 85v127M261.5 224v2M262.5 83v5M262.5 89v123M262.5 224v2M263.5 225v2M264.5 83v3M264.5 87v125M264.5 226v1M265.5 80v1M265.5 85v127M265.5 225v2M266.5 226v1M267.5 163v1M267.5 225v2M268.5 225v1M269.5 225v2M270.5 87v1M270.5 90v122M271.5 225v2M272.5 144v1M272.5 225v2M273.5 225v2M274.5 103v109M274.5 225v1M275.5 226v1M276.5 161v1M277.5 88v124M277.5 225v2M278.5 92v120M279.5 225v1M280.5 208v1M280.5 225v2M281.5 88v1M281.5 198v1M281.5 225v1M282.5 225v2M283.5 96v1M283.5 196v1M283.5 225v2M284.5 225v2M285.5 87v125M285.5 225v2M287.5 153v1M287.5 225v2M288.5 105v107M288.5 225v2M289.5 89v123M289.5 225v2M290.5 125v1M290.5 226v1M291.5 83v1M291.5 85v127M291.5 225v2M292.5 176v1M292.5 225v2M293.5 96v1M293.5 225v1M294.5 225v2M295.5 99v113M295.5 225v2M296.5 86v126M296.5 225v2M297.5 157v1M297.5 225v1M298.5 226v1M299.5 99v1M299.5 187v1M299.5 226v1M300.5 203v1M300.5 225v2M301.5 102v1M301.5 182v1M301.5 225v1M302.5 78v4M302.5 83v129M302.5 225v2M303.5 74v1M303.5 97v115M303.5 225v2M304.5 112v1M305.5 97v1M305.5 165v1M306.5 104v1M306.5 179v1M306.5 225v1M307.5 141v1M307.5 187v1M308.5 146v1M309.5 113v1M309.5 226v1M311.5 225v2M312.5 80v132M312.5 225v2M313.5 225v1M314.5 92v120M314.5 225v2M315.5 198v1M315.5 225v2M316.5 83v129M318.5 84v128M319.5 92v1M319.5 102v110M319.5 226v1M320.5 80v132M320.5 225v1M321.5 143v1M321.5 191v1M321.5 225v1M322.5 93v119M322.5 226v1M323.5 225v1M325.5 226v1M326.5 89v123M326.5 225v2M327.5 225v2M328.5 181v1M328.5 225v1M330.5 98v114M330.5 225v1M331.5 93v119M331.5 225v1M332.5 189v1M333.5 103v109M333.5 225v2M334.5 83v1M334.5 85v127M334.5 225v2M335.5 90v122M335.5 225v1M337.5 153v1M337.5 226v1M338.5 89v123M338.5 225v2M339.5 150v1M339.5 225v2M340.5 92v120M341.5 226v1M342.5 174v1M342.5 225v1M343.5 176v1M343.5 225v2M344.5 226v1M345.5 184v1M345.5 225v2M346.5 225v2M347.5 225v2M348.5 184v1M348.5 225v2M349.5 82v2M349.5 85v127M349.5 225v1M351.5 80v2M351.5 83v129M351.5 225v2M352.5 225v1M353.5 225v2M354.5 225v1M355.5 144v1M356.5 225v1M357.5 92v120M357.5 225v2M358.5 190v2M358.5 225v2M359.5 225v1M360.5 137v1M361.5 100v112M361.5 225v1M362.5 137v1M362.5 225v2M363.5 99v113M363.5 226v1M364.5 84v128M364.5 225v1M365.5 225v2M366.5 78v2M366.5 81v131M366.5 225v2M367.5 95v117M367.5 226v1M368.5 225v2M369.5 225v2M370.5 77v2M370.5 80v132M370.5 226v1M371.5 225v1M372.5 226v1M373.5 211v1M373.5 225v2M374.5 79v1M374.5 98v114M374.5 225v1M375.5 225v1M376.5 172v1M376.5 226v1M377.5 225v2M378.5 96v116M378.5 225v1M379.5 225v1M380.5 82v1M380.5 226v1M381.5 191v1M381.5 225v1M382.5 201v1M383.5 168v1M384.5 100v112M386.5 75v1M386.5 77v135M386.5 225v2M388.5 172v1M388.5 225v2M389.5 130v1M389.5 226v1M390.5 226v1M391.5 76v1M391.5 78v134M391.5 225v2M392.5 97v115M392.5 225v1M393.5 98v114M393.5 225v2M394.5 225v2M395.5 225v2M397.5 124v1M397.5 177v1M397.5 225v2M398.5 225v2M400.5 226v1M401.5 88v1M401.5 225v2M402.5 80v1M402.5 91v121M402.5 226v1M403.5 225v1M404.5 161v1M404.5 225v1M405.5 225v2M406.5 123v1M406.5 225v2M407.5 225v1M408.5 96v1M408.5 225v2M409.5 225v2M410.5 188v1M410.5 208v1M410.5 226v1M411.5 225v1M412.5 136v1M412.5 154v1M413.5 179v1M413.5 226v1M414.5 82v130M414.5 225v1M415.5 225v1M416.5 170v1M416.5 225v1M418.5 81v2M418.5 84v128M419.5 75v1M420.5 174v1M421.5 130v1M421.5 225v2M422.5 225v2M423.5 87v125M423.5 225v2M424.5 151v1M424.5 225v1M425.5 96v116M425.5 225v1M426.5 130v1M426.5 225v2M427.5 225v1M428.5 225v2M430.5 226v1M431.5 86v126M431.5 225v1M432.5 225v2M433.5 225v1M434.5 226v1M435.5 91v1M435.5 226v1M436.5 76v3M436.5 81v1M436.5 83v129M436.5 225v2M437.5 226v1M438.5 145v1M438.5 210v1M438.5 226v1M439.5 97v1M439.5 100v112M439.5 225v1M440.5 225v1M442.5 225v1M443.5 88v1M444.5 94v118M444.5 226v1M445.5 148v1M445.5 160v1M445.5 225v2M446.5 136v1M446.5 225v1M447.5 98v114M447.5 225v1M448.5 89v123M448.5 226v1M449.5 158v1M450.5 179v1M450.5 225v2M451.5 82v5M451.5 88v124M451.5 225v2M452.5 225v1M453.5 84v128M453.5 225v1M454.5 89v123M454.5 225v1M455.5 103v109M455.5 226v1M456.5 121v1M456.5 225v2M457.5 86v126M457.5 225v2M458.5 225v2M459.5 170v1M459.5 226v1M460.5 81v131M460.5 225v1M461.5 191v1M461.5 225v2M462.5 96v116M463.5 105v107M463.5 225v2M464.5 88v124M464.5 226v1M465.5 83v2M465.5 86v126M465.5 226v1M466.5 100v112M466.5 225v1M467.5 88v1M468.5 184v1M468.5 226v1M469.5 225v2M470.5 84v1M470.5 225v1M471.5 83v2M471.5 86v126M471.5 226v1M472.5 83v129M473.5 180v1M473.5 225v1M474.5 175v1M474.5 225v2M475.5 112v1M475.5 225v1M476.5 90v122M476.5 225v1M478.5 133v1M478.5 175v1M478.5 225v2M480.5 226v1M481.5 225v2M482.5 207v1M483.5 105v107M483.5 225v2M484.5 94v118M484.5 226v1M485.5 194v1M485.5 225v1M486.5 88v124M487.5 225v2M488.5 225v2M489.5 96v116M489.5 225v1M490.5 104v1M491.5 134v1M492.5 225v1M493.5 225v1M494.5 103v1M494.5 226v1M495.5 78v1M495.5 81v131M495.5 225v1M496.5 208v1M497.5 210v1M497.5 225v2M498.5 208v1M499.5 190v1M499.5 226v1M500.5 199v1M500.5 225v2M501.5 175v1M501.5 225v2M502.5 87v125M502.5 225v2M503.5 88v124M503.5 225v2M504.5 225v2M505.5 225v1M506.5 225v2M507.5 225v1M508.5 125v1M508.5 225v1M509.5 143v1M510.5 94v118M511.5 225v1M512.5 225v1M513.5 211v1M513.5 225v2M514.5 82v4M514.5 87v125M514.5 225v2M515.5 144v1M515.5 225v2M516.5 93v119M516.5 226v1M517.5 88v124M517.5 225v1M518.5 101v111M518.5 225v2M519.5 94v118M519.5 226v1M520.5 225v1M521.5 225v1M523.5 225v1M524.5 82v1M524.5 84v128M525.5 159v1M526.5 101v111M526.5 225v1M527.5 153v1M528.5 80v1M528.5 225v2M529.5 103v109M529.5 225v2M530.5 115v1M530.5 202v1M530.5 225v1M532.5 98v114M532.5 225v1M533.5 225v1M534.5 225v2M535.5 225v1M536.5 89v123M536.5 225v1M537.5 226v1M538.5 95v1M538.5 225v1M539.5 83v129M540.5 225v2M541.5 104v108M541.5 225v2M543.5 104v108M543.5 226v1M544.5 225v2M545.5 225v2M546.5 101v111M546.5 225v2M547.5 103v109M547.5 225v1M548.5 173v1M548.5 225v2M549.5 147v1M549.5 225v2M550.5 78v134M550.5 225v2M551.5 156v1M551.5 225v1M552.5 89v123M552.5 225v2M553.5 102v110M553.5 225v1M556.5 226v1M557.5 137v1M558.5 225v1M559.5 139v1M560.5 98v114M560.5 225v2M561.5 91v121M561.5 225v1M562.5 84v128M562.5 225v2M563.5 207v1M564.5 94v118M565.5 112v1M565.5 205v1M566.5 98v1M566.5 168v1M567.5 202v1M567.5 226v1M568.5 98v114M568.5 225v1M569.5 211v1M569.5 225v1M570.5 90v122M570.5 226v1M572.5 156v1M572.5 225v2M573.5 225v1M574.5 158v1M574.5 225v2M575.5 225v2M576.5 167v1M576.5 226v1M577.5 103v109M577.5 225v2M578.5 81v1M578.5 119v1M578.5 225v2M579.5 145v1M580.5 226v1M581.5 225v2M582.5 111v1M582.5 225v2M583.5 82v4M583.5 87v125M583.5 225v1M584.5 225v1M585.5 225v2M586.5 225v1M587.5 172v1M587.5 225v2M588.5 91v121M588.5 226v1M589.5 84v128M590.5 77v1M590.5 80v2M590.5 85v127M590.5 226v1M591.5 101v111M591.5 225v2M592.5 225v1M593.5 225v1M594.5 86v126M594.5 225v2M597.5 226v1M598.5 225v1M599.5 225v1M600.5 198v1M600.5 225v2M601.5 87v125M601.5 225v2M602.5 226v1M604.5 88v124M605.5 225v2M606.5 85v127M606.5 226v1M607.5 80v1M607.5 83v129M607.5 226v1M608.5 93v119M608.5 226v1M609.5 121v1M609.5 226v1M610.5 136v1M610.5 225v2M611.5 226v1M612.5 225v2M613.5 225v1M614.5 80v2M614.5 84v128M614.5 225v2M615.5 225v2M616.5 208v1M616.5 226v1M617.5 225v2M618.5 79v3M618.5 83v1M618.5 85v127M618.5 225v2M619.5 102v110M619.5 225v2M620.5 225v2M622.5 160v1M622.5 225v2M623.5 91v121M623.5 225v2M624.5 225v1M625.5 98v1M625.5 226v1M626.5 86v126M626.5 225v2M627.5 156v1M629.5 101v1M629.5 225v2M630.5 225v2M631.5 225v2M632.5 103v109M632.5 225v1M633.5 85v127M633.5 225v1M634.5 105v1M634.5 225v1M636.5 156v1M637.5 97v1M638.5 133v1M638.5 225v1M639.5 85v1M639.5 225v2M640.5 82v130M640.5 226v1M641.5 225v1M642.5 225v1M643.5 226v1M644.5 83v129M644.5 225v1M646.5 103v109M646.5 225v2M647.5 226v1M648.5 112v1M648.5 168v1M648.5 225v2M649.5 79v1M649.5 82v130M649.5 225v2M650.5 225v1M651.5 98v114M651.5 225v2M652.5 90v122M652.5 225v1M653.5 225v2M654.5 225v1M655.5 225v2M656.5 146v1M656.5 225v2M657.5 195v1M657.5 226v1M658.5 94v118M658.5 225v2M659.5 100v112M659.5 225v1M660.5 225v1M661.5 225v2M662.5 185v1M662.5 225v2M664.5 91v121M665.5 120v1M665.5 225v2M667.5 92v120M667.5 225v1M668.5 89v123M668.5 226v1M669.5 87v1M669.5 225v2M670.5 109v1M670.5 183v1M671.5 82v130M671.5 225v2M672.5 103v109M672.5 226v1M673.5 226v1M674.5 226v1M675.5 96v116M675.5 225v2M676.5 225v2M677.5 163v1M677.5 225v2M678.5 114v1M678.5 163v1M678.5 226v1M680.5 225v1M681.5 225v1M682.5 95v1M682.5 225v2M683.5 225v2M684.5 82v1M684.5 97v115M684.5 225v2"/><path stroke="#00d2d2" d="M84.5 185v1M85.5 173v1M85.5 181v2M85.5 187v1M86.5 184v1M87.5 183v1M87.5 185v1M87.5 217v1M88.5 183v1M89.5 180v1M90.5 182v1M90.5 217v1M91.5 186v2M91.5 217v1M92.5 181v1M92.5 183v1M92.5 217v1M93.5 181v1M94.5 181v1M95.5 173v1M95.5 181v1M95.5 187v2M96.5 181v1M97.5 182v1M97.5 187v2M98.5 184v2M99.5 180v1M99.5 217v1M100.5 180v3M100.5 217v1M101.5 180v1M101.5 183v3M102.5 217v1M103.5 180v1M103.5 184v1M103.5 217v1M105.5 217v1M107.5 181v1M107.5 187v1M108.5 181v1M108.5 217v1M109.5 182v2M109.5 185v1M110.5 180v2M110.5 183v1M111.5 180v2M111.5 185v1M111.5 187v1M111.5 217v1M112.5 172v1M112.5 180v1M112.5 183v1M113.5 182v1M113.5 186v1M113.5 217v1M114.5 184v2M114.5 187v1M115.5 181v1M116.5 182v1M116.5 184v1M116.5 186v1M117.5 180v1M117.5 185v1M118.5 180v1M118.5 182v1M118.5 217v1M119.5 180v1M119.5 183v2M119.5 217v1M120.5 172v1M120.5 181v1M120.5 183v1M121.5 180v1M121.5 185v1M121.5 217v1M122.5 181v1M123.5 180v1M123.5 182v1M123.5 185v1M123.5 217v1M124.5 180v2M125.5 181v1M126.5 172v1M126.5 184v1M127.5 180v1M127.5 182v1M129.5 181v1M129.5 185v1M129.5 217v1M130.5 171v1M130.5 183v1M131.5 181v1M131.5 185v2M131.5 217v1M132.5 171v1M132.5 179v2M133.5 180v1M133.5 217v1M134.5 180v1M134.5 217v1M135.5 217v1M136.5 183v1M138.5 179v1M138.5 217v1M139.5 179v1M139.5 185v1M140.5 171v1M140.5 182v1M141.5 182v1M142.5 181v1M142.5 183v1M142.5 185v1M142.5 217v1M143.5 184v1M143.5 217v1M144.5 181v1M145.5 178v1M145.5 180v1M145.5 183v1M146.5 180v1M146.5 217v1M147.5 179v1M147.5 182v2M147.5 217v1M149.5 178v1M149.5 183v1M150.5 179v2M151.5 170v1M151.5 183v1M151.5 217v1M152.5 181v1M153.5 180v1M153.5 217v1M154.5 179v1M154.5 182v1M154.5 217v1M155.5 178v1M155.5 180v1M155.5 183v1M156.5 179v1M157.5 217v1M158.5 177v2M158.5 182v1M159.5 179v2M159.5 217v1M160.5 177v1M160.5 179v1M160.5 183v1M161.5 183v1M161.5 217v1M162.5 169v1M162.5 177v2M163.5 217v1M164.5 177v3M164.5 184v1M165.5 169v1M165.5 177v1M165.5 217v1M166.5 182v1M167.5 178v1M168.5 181v1M169.5 177v1M169.5 181v3M170.5 178v1M170.5 217v1M171.5 217v1M172.5 178v1M173.5 178v1M174.5 176v2M174.5 217v1M175.5 167v1M175.5 175v1M176.5 175v1M176.5 179v1M176.5 217v1M177.5 175v1M177.5 177v1M177.5 217v1M178.5 167v1M178.5 180v2M178.5 217v1M179.5 177v1M180.5 177v1M180.5 179v1M181.5 177v1M181.5 179v1M181.5 181v1M183.5 174v2M184.5 175v1M184.5 178v1M185.5 174v1M185.5 176v1M185.5 217v1M186.5 174v1M186.5 217v1M187.5 174v1M187.5 217v1M188.5 174v1M188.5 217v1M189.5 173v1M189.5 175v1M189.5 177v1M189.5 217v1M190.5 176v1M191.5 165v1M191.5 177v2M192.5 173v2M192.5 177v3M193.5 173v1M194.5 172v2M194.5 217v1M195.5 175v1M196.5 171v1M197.5 217v1M198.5 171v1M199.5 217v1M200.5 170v1M200.5 217v1M201.5 170v1M201.5 173v1M201.5 217v1M202.5 172v1M202.5 177v1M203.5 173v1M203.5 175v1M203.5 217v1M204.5 162v1M204.5 170v2M205.5 175v2M205.5 217v1M207.5 172v1M208.5 175v1M208.5 217v1M209.5 169v2M209.5 174v1M209.5 217v1M210.5 168v1M210.5 172v1M211.5 217v1M212.5 171v2M213.5 166v1M214.5 166v1M214.5 172v1M215.5 165v1M215.5 167v1M216.5 167v1M216.5 169v1M216.5 217v1M217.5 168v2M218.5 166v2M218.5 217v1M219.5 164v1M219.5 217v1M220.5 166v1M220.5 217v1M221.5 217v1M222.5 163v1M223.5 153v1M224.5 217v1M225.5 165v1M225.5 217v1M226.5 158v1M227.5 160v1M227.5 163v1M227.5 217v1M229.5 157v1M229.5 161v1M229.5 217v1M230.5 147v1M230.5 156v1M230.5 160v1M231.5 158v1M231.5 217v1M232.5 156v1M232.5 158v1M232.5 217v1M233.5 153v4M234.5 153v1M235.5 151v1M235.5 154v1M236.5 150v3M236.5 154v1M236.5 217v1M237.5 148v1M237.5 150v1M237.5 217v1M238.5 148v1M239.5 138v1M239.5 151v2M239.5 217v1M240.5 145v2M240.5 149v1M240.5 217v1M241.5 136v1M241.5 145v1M241.5 149v1M241.5 217v1M242.5 141v2M242.5 217v1M243.5 132v1M243.5 140v3M243.5 217v1M244.5 217v1M245.5 138v1M245.5 141v1M246.5 126v1M246.5 135v2M246.5 138v1M246.5 140v1M246.5 217v1M247.5 217v1M248.5 119v1M248.5 130v1M249.5 117v1M250.5 114v1M250.5 117v8M250.5 127v1M250.5 217v2M250.5 221v1M251.5 116v1M251.5 119v1M251.5 121v1M251.5 217v1M251.5 219v4M252.5 112v2M252.5 116v1M252.5 217v1M252.5 219v1M253.5 110v3M253.5 116v1M253.5 218v2M253.5 221v2M254.5 105v1M254.5 113v1M254.5 218v1M254.5 220v1M255.5 102v5M255.5 111v1M255.5 217v1M255.5 221v2M256.5 100v2M256.5 104v1M256.5 217v2M257.5 95v2M257.5 98v3M257.5 102v1M257.5 218v1M257.5 221v2M258.5 91v1M258.5 94v1M258.5 96v1M258.5 217v1M258.5 221v1M258.5 223v1M259.5 87v1M259.5 89v2M259.5 94v1M259.5 218v4M259.5 223v1M260.5 84v2M260.5 87v2M260.5 91v1M260.5 217v1M260.5 219v1M260.5 224v1M261.5 80v1M261.5 82v1M261.5 84v1M261.5 217v2M261.5 221v2M262.5 78v2M262.5 82v1M262.5 88v1M262.5 223v1M263.5 76v1M263.5 78v3M263.5 83v1M263.5 217v5M264.5 76v2M264.5 80v3M264.5 86v1M264.5 217v1M264.5 222v1M264.5 225v1M265.5 73v1M265.5 76v2M265.5 81v4M265.5 217v6M266.5 76v3M266.5 80v1M266.5 82v1M266.5 217v3M266.5 221v1M266.5 223v3M267.5 78v1M267.5 82v1M267.5 218v1M267.5 220v5M268.5 76v1M268.5 78v4M268.5 217v1M268.5 219v1M269.5 76v3M269.5 80v1M269.5 82v2M269.5 218v1M269.5 220v2M269.5 224v1M270.5 76v1M270.5 78v4M270.5 85v1M270.5 217v1M270.5 220v1M270.5 223v1M270.5 225v1M271.5 76v4M271.5 82v1M271.5 85v1M271.5 217v1M271.5 219v2M271.5 223v2M272.5 77v1M272.5 79v1M272.5 83v2M272.5 218v1M272.5 220v2M273.5 78v1M273.5 218v3M273.5 222v2M274.5 77v1M274.5 81v1M274.5 84v1M274.5 217v4M274.5 222v1M274.5 224v1M275.5 76v1M275.5 79v1M275.5 84v1M275.5 217v2M275.5 220v1M275.5 222v4M276.5 76v2M276.5 79v1M276.5 83v1M276.5 221v1M276.5 223v1M276.5 225v1M277.5 77v1M277.5 81v1M277.5 83v1M277.5 85v3M277.5 217v2M277.5 221v1M277.5 223v2M278.5 77v1M278.5 80v1M278.5 221v2M278.5 225v1M279.5 77v4M279.5 83v3M279.5 218v2M279.5 221v1M279.5 223v2M280.5 77v3M280.5 82v1M280.5 84v1M280.5 220v1M280.5 223v2M281.5 77v2M281.5 86v1M281.5 218v1M281.5 224v1M282.5 77v4M282.5 218v3M282.5 223v2M283.5 78v1M283.5 81v1M283.5 84v2M283.5 217v2M283.5 221v3M284.5 79v2M284.5 82v1M284.5 85v1M284.5 218v2M284.5 222v1M285.5 79v1M285.5 82v2M285.5 217v6M286.5 78v1M286.5 84v1M286.5 88v1M286.5 217v6M286.5 224v2M287.5 77v3M287.5 82v1M287.5 84v1M287.5 217v1M287.5 219v3M288.5 78v4M288.5 83v1M288.5 85v1M288.5 87v1M288.5 217v5M288.5 224v1M289.5 77v5M289.5 83v1M289.5 218v1M289.5 220v1M289.5 222v1M290.5 77v4M290.5 83v2M290.5 218v1M290.5 221v1M290.5 223v1M290.5 225v1M291.5 77v2M291.5 80v1M291.5 84v1M291.5 217v3M291.5 224v1M292.5 76v3M292.5 83v1M292.5 221v2M292.5 224v1M293.5 75v3M293.5 81v1M293.5 84v1M293.5 219v3M293.5 223v2M294.5 79v1M294.5 220v2M295.5 74v2M295.5 81v1M295.5 218v1M295.5 221v2M295.5 224v1M296.5 74v7M296.5 217v1M296.5 220v2M296.5 224v1M297.5 75v1M297.5 78v1M297.5 81v1M297.5 217v1M297.5 220v3M297.5 224v1M298.5 74v2M298.5 80v1M298.5 83v1M298.5 217v3M298.5 224v2M299.5 73v6M299.5 84v1M299.5 218v3M299.5 222v4M300.5 73v1M300.5 76v2M300.5 217v2M300.5 220v4M301.5 73v5M301.5 79v1M301.5 217v5M301.5 223v1M302.5 76v2M302.5 82v1M302.5 218v2M302.5 221v2M302.5 224v1M303.5 73v1M303.5 76v1M303.5 78v2M303.5 83v1M303.5 217v2M303.5 224v1M304.5 73v1M304.5 76v1M304.5 79v1M304.5 217v1M304.5 219v2M304.5 223v3M305.5 73v3M305.5 77v1M305.5 79v2M305.5 217v3M305.5 223v1M305.5 225v1M306.5 74v2M306.5 77v1M306.5 84v1M306.5 218v1M306.5 220v1M306.5 223v1M307.5 73v7M307.5 218v1M307.5 220v1M307.5 225v1M308.5 71v1M308.5 76v4M308.5 223v1M308.5 225v1M309.5 73v3M309.5 78v1M309.5 80v1M309.5 82v1M309.5 217v1M309.5 219v1M309.5 221v2M309.5 224v2M310.5 73v1M310.5 75v1M310.5 77v1M310.5 80v1M310.5 82v1M310.5 219v7M311.5 73v2M311.5 76v2M311.5 83v1M311.5 218v1M311.5 222v3M312.5 74v2M312.5 77v3M312.5 217v2M312.5 220v3M313.5 74v1M313.5 78v2M313.5 81v1M313.5 220v4M314.5 70v1M314.5 73v1M314.5 75v1M314.5 79v4M314.5 217v2M314.5 221v2M314.5 224v1M315.5 71v1M315.5 74v6M315.5 82v2M315.5 218v1M315.5 220v2M315.5 223v1M316.5 74v5M316.5 217v2M316.5 223v3M317.5 74v2M317.5 77v2M317.5 80v2M317.5 217v1M317.5 219v1M317.5 221v1M317.5 223v1M317.5 225v1M318.5 73v2M318.5 78v1M318.5 81v1M318.5 83v1M318.5 219v2M318.5 222v1M318.5 224v2M319.5 74v1M319.5 76v2M319.5 82v1M319.5 217v1M319.5 220v2M319.5 225v1M320.5 74v1M320.5 76v2M320.5 217v3M320.5 222v2M321.5 75v2M321.5 78v3M321.5 217v2M321.5 223v2M322.5 71v1M322.5 74v2M322.5 78v4M322.5 217v1M322.5 225v1M323.5 76v1M323.5 79v1M323.5 218v1M323.5 220v2M323.5 223v1M324.5 75v1M324.5 78v2M324.5 83v2M324.5 217v2M324.5 220v2M324.5 223v1M324.5 225v1M325.5 75v3M325.5 79v1M325.5 81v3M325.5 223v1M325.5 225v1M326.5 75v1M326.5 77v1M326.5 79v1M326.5 81v1M326.5 83v1M326.5 85v1M326.5 219v1M326.5 221v4M327.5 77v2M327.5 83v1M327.5 217v3M327.5 222v3M328.5 76v1M328.5 79v4M328.5 217v7M329.5 76v4M329.5 85v1M329.5 218v3M329.5 222v2M329.5 225v1M330.5 76v2M330.5 81v1M330.5 84v1M330.5 217v1M330.5 219v1M331.5 76v1M331.5 78v1M331.5 80v1M331.5 217v1M331.5 219v1M331.5 221v2M332.5 76v2M332.5 79v2M332.5 82v1M332.5 217v3M332.5 221v1M332.5 224v2M333.5 74v1M333.5 77v8M333.5 218v1M333.5 224v1M334.5 76v3M334.5 80v3M334.5 84v1M334.5 217v3M334.5 222v3M335.5 77v1M335.5 79v1M335.5 81v2M335.5 85v1M335.5 219v3M335.5 224v1M336.5 77v4M336.5 84v1M336.5 217v3M336.5 222v1M336.5 224v2M337.5 77v2M337.5 82v3M337.5 217v1M337.5 219v2M337.5 222v1M337.5 225v1M338.5 77v5M338.5 86v2M338.5 218v2M338.5 222v1M339.5 73v1M339.5 76v2M339.5 79v3M339.5 217v1M339.5 221v2M339.5 224v1M340.5 76v1M340.5 82v1M340.5 84v1M340.5 86v1M340.5 219v7M341.5 75v4M341.5 81v2M341.5 86v1M341.5 218v1M341.5 222v2M341.5 225v1M342.5 75v4M342.5 218v2M342.5 222v3M343.5 76v3M343.5 80v1M343.5 85v1M343.5 219v1M343.5 221v2M343.5 224v1M344.5 75v4M344.5 82v1M344.5 217v6M344.5 225v1M345.5 77v1M345.5 79v1M345.5 218v3M345.5 222v2M346.5 72v1M346.5 77v2M346.5 80v2M346.5 83v1M346.5 85v2M346.5 221v2M347.5 75v2M347.5 78v2M347.5 222v1M347.5 224v1M348.5 75v3M348.5 79v1M348.5 83v1M348.5 85v1M348.5 217v4M348.5 223v1M349.5 77v5M349.5 84v1M349.5 220v1M349.5 222v1M350.5 76v5M350.5 84v1M350.5 217v2M350.5 220v2M350.5 225v1M351.5 77v2M351.5 82v1M351.5 219v1M351.5 223v1M352.5 76v1M352.5 79v1M352.5 81v2M352.5 85v1M352.5 217v3M352.5 224v1M353.5 72v1M353.5 78v2M353.5 217v2M353.5 220v2M353.5 223v2M354.5 72v1M354.5 75v3M354.5 218v3M354.5 223v2M355.5 74v2M355.5 77v4M355.5 84v1M355.5 218v4M355.5 223v3M356.5 75v2M356.5 78v2M356.5 217v1M356.5 219v4M356.5 224v1M357.5 75v3M357.5 81v1M357.5 83v1M357.5 218v6M358.5 74v1M358.5 76v1M358.5 78v1M358.5 217v2M358.5 221v1M358.5 223v1M359.5 74v1M359.5 76v1M359.5 79v1M359.5 217v1M359.5 219v6M360.5 74v1M360.5 78v1M360.5 218v1M360.5 221v2M360.5 225v1M361.5 74v1M361.5 78v1M361.5 218v1M361.5 221v1M362.5 74v3M362.5 78v2M362.5 82v1M362.5 220v2M363.5 74v3M363.5 79v1M363.5 218v5M363.5 225v1M364.5 74v5M364.5 80v1M364.5 82v1M364.5 217v4M364.5 224v1M365.5 74v1M365.5 76v1M365.5 78v3M365.5 85v1M365.5 219v1M365.5 223v1M366.5 71v1M366.5 74v4M366.5 80v1M366.5 217v2M366.5 222v3M367.5 75v1M367.5 77v2M367.5 83v1M367.5 217v3M367.5 223v1M367.5 225v1M368.5 73v4M368.5 217v1M368.5 219v1M368.5 222v1M369.5 73v1M369.5 78v1M369.5 80v1M369.5 222v1M370.5 74v3M370.5 79v1M370.5 218v5M370.5 224v2M371.5 73v6M371.5 80v1M371.5 219v2M371.5 223v2M372.5 73v4M372.5 80v1M372.5 217v7M372.5 225v1M373.5 74v3M373.5 78v1M373.5 82v1M373.5 217v1M373.5 220v1M373.5 223v1M374.5 73v4M374.5 80v1M374.5 220v2M374.5 223v2M375.5 73v3M375.5 77v2M375.5 221v2M376.5 73v3M376.5 80v1M376.5 83v1M376.5 219v1M376.5 221v2M376.5 224v2M377.5 75v4M377.5 217v3M377.5 222v1M377.5 224v1M378.5 73v1M378.5 75v1M378.5 77v1M378.5 80v1M378.5 219v2M378.5 222v2M379.5 73v1M379.5 75v2M379.5 78v2M379.5 219v3M379.5 223v2M380.5 73v3M380.5 83v1M380.5 219v2M380.5 222v4M381.5 72v4M381.5 77v3M381.5 218v6M382.5 74v1M382.5 77v1M382.5 79v1M382.5 217v2M382.5 221v3M382.5 225v1M383.5 72v4M383.5 79v1M383.5 219v4M383.5 224v2M384.5 72v5M384.5 220v2M384.5 223v3M385.5 72v3M385.5 218v3M385.5 222v1M385.5 224v2M386.5 72v3M386.5 76v1M386.5 217v1M386.5 219v2M386.5 223v2M387.5 72v2M387.5 75v1M387.5 80v2M387.5 217v9M388.5 72v1M388.5 75v2M388.5 78v1M388.5 218v1M388.5 222v1M389.5 72v2M389.5 76v1M389.5 217v3M389.5 222v2M389.5 225v1M390.5 72v4M390.5 78v1M390.5 80v1M390.5 218v3M390.5 222v2M390.5 225v1M391.5 74v1M391.5 77v1M391.5 217v2M391.5 222v3M392.5 71v1M392.5 73v1M392.5 75v2M392.5 217v5M393.5 71v2M393.5 74v1M393.5 78v3M393.5 217v1M393.5 220v1M393.5 222v1M394.5 71v1M394.5 74v3M394.5 78v1M394.5 217v1M394.5 219v2M395.5 72v1M395.5 74v1M395.5 76v1M395.5 218v1M395.5 220v3M396.5 71v2M396.5 74v3M396.5 78v1M396.5 80v2M396.5 217v3M396.5 225v1M397.5 71v1M397.5 73v1M397.5 75v3M397.5 82v1M397.5 217v2M397.5 220v2M397.5 223v2M398.5 72v4M398.5 77v1M398.5 79v1M398.5 83v1M398.5 217v3M398.5 223v1M399.5 71v1M399.5 74v1M399.5 77v1M399.5 82v1M399.5 217v2M399.5 220v1M399.5 223v3M400.5 75v1M400.5 78v1M400.5 82v1M400.5 217v5M400.5 225v1M401.5 72v4M401.5 77v2M401.5 217v2M401.5 222v3M402.5 76v1M402.5 78v2M402.5 217v1M402.5 220v1M402.5 224v2M403.5 75v1M403.5 78v2M403.5 81v1M403.5 217v1M403.5 222v2M404.5 72v4M404.5 80v2M404.5 217v1M404.5 220v5M405.5 72v2M405.5 77v2M405.5 219v2M405.5 223v1M406.5 72v5M406.5 79v3M406.5 217v4M406.5 222v3M407.5 73v6M407.5 81v1M407.5 217v1M407.5 219v5M408.5 73v4M408.5 79v1M408.5 218v1M408.5 221v4M409.5 72v3M409.5 77v1M409.5 82v1M409.5 220v2M409.5 223v2M410.5 73v1M410.5 76v1M410.5 78v1M410.5 82v1M410.5 218v5M410.5 224v2M411.5 73v6M411.5 80v1M411.5 217v1M411.5 219v1M411.5 221v2M412.5 73v6M412.5 217v1M412.5 219v1M412.5 225v1M413.5 73v1M413.5 75v1M413.5 80v2M413.5 219v2M413.5 222v4M414.5 75v1M414.5 77v3M414.5 217v1M414.5 220v1M414.5 222v3M415.5 73v5M415.5 219v2M415.5 223v2M416.5 73v1M416.5 75v1M416.5 77v1M416.5 80v2M416.5 217v2M416.5 221v3M417.5 78v2M417.5 85v1M417.5 217v1M417.5 221v2M417.5 224v2M418.5 71v1M418.5 74v1M418.5 76v2M418.5 83v1M418.5 217v4M418.5 223v3M419.5 74v1M419.5 76v1M419.5 82v2M419.5 217v2M419.5 221v5M420.5 75v1M420.5 77v3M420.5 217v2M420.5 220v1M420.5 223v3M421.5 74v1M421.5 77v1M421.5 83v1M421.5 217v1M421.5 222v1M422.5 75v1M422.5 77v4M422.5 82v1M422.5 217v1M422.5 219v2M422.5 222v2M423.5 74v3M423.5 79v1M423.5 81v1M423.5 217v1M423.5 219v2M423.5 223v1M424.5 74v1M424.5 77v1M424.5 222v3M425.5 75v3M425.5 84v1M425.5 217v1M425.5 221v1M426.5 75v2M426.5 78v2M426.5 82v2M426.5 85v1M426.5 219v1M426.5 223v1M427.5 75v3M427.5 82v2M427.5 218v1M427.5 220v1M427.5 224v1M428.5 74v1M428.5 77v2M428.5 80v1M428.5 218v1M429.5 79v1M429.5 84v1M429.5 219v2M429.5 222v1M429.5 225v1M430.5 75v2M430.5 78v1M430.5 80v1M430.5 84v1M430.5 217v1M430.5 219v2M430.5 222v4M431.5 75v3M431.5 79v1M431.5 82v1M431.5 219v2M431.5 223v2M432.5 78v2M432.5 81v3M432.5 217v2M432.5 220v4M433.5 76v2M433.5 79v3M433.5 83v2M433.5 219v1M433.5 221v4M434.5 75v3M434.5 80v3M434.5 217v1M434.5 219v2M434.5 222v2M434.5 225v1M435.5 76v1M435.5 79v2M435.5 82v1M435.5 217v2M435.5 220v1M435.5 222v2M435.5 225v1M436.5 79v2M436.5 82v1M436.5 220v1M436.5 222v2M437.5 75v2M437.5 78v1M437.5 218v2M437.5 221v1M437.5 225v1M438.5 77v3M438.5 81v1M438.5 217v6M438.5 224v2M439.5 79v1M439.5 83v1M439.5 218v1M439.5 220v2M439.5 223v2M440.5 76v1M440.5 78v2M440.5 83v1M440.5 217v5M440.5 224v1M441.5 76v2M441.5 79v2M441.5 84v1M441.5 86v1M441.5 217v2M441.5 221v1M441.5 224v2M442.5 76v2M442.5 80v2M442.5 83v1M442.5 217v1M442.5 220v4M443.5 77v1M443.5 79v2M443.5 82v1M443.5 217v6M443.5 225v1M444.5 73v1M444.5 76v2M444.5 79v1M444.5 82v2M444.5 218v1M444.5 220v1M444.5 222v1M444.5 224v2M445.5 76v2M445.5 80v1M445.5 217v1M445.5 219v1M445.5 223v1M446.5 76v1M446.5 78v1M446.5 80v1M446.5 82v2M446.5 218v2M447.5 73v1M447.5 76v2M447.5 80v1M447.5 83v1M447.5 86v1M447.5 217v3M447.5 223v2M448.5 76v2M448.5 83v2M448.5 217v4M448.5 225v1M449.5 76v4M449.5 81v1M449.5 84v1M449.5 219v4M449.5 225v1M450.5 76v3M450.5 84v1M450.5 87v1M450.5 221v1M450.5 223v1M451.5 77v1M451.5 80v2M451.5 87v1M451.5 220v3M451.5 224v1M452.5 76v1M452.5 78v1M452.5 82v2M452.5 218v2M452.5 222v3M453.5 80v2M453.5 83v1M453.5 219v4M454.5 78v3M454.5 82v1M454.5 86v1M454.5 218v2M454.5 222v1M454.5 224v1M455.5 73v1M455.5 76v1M455.5 79v2M455.5 84v1M455.5 221v5M456.5 76v3M456.5 84v1M456.5 217v2M456.5 220v1M457.5 76v5M457.5 84v2M457.5 217v1M457.5 219v1M458.5 76v4M458.5 219v2M458.5 223v1M459.5 73v1M459.5 76v1M459.5 78v2M459.5 81v1M459.5 84v1M459.5 218v1M459.5 221v1M459.5 223v3M460.5 73v1M460.5 76v3M460.5 217v1M460.5 219v2M461.5 76v4M461.5 81v2M461.5 85v1M461.5 218v1M461.5 222v1M461.5 224v1M462.5 78v2M462.5 81v1M462.5 83v1M462.5 85v2M462.5 222v1M462.5 224v2M463.5 77v1M463.5 79v4M463.5 84v1M463.5 217v1M463.5 222v1M463.5 224v1M464.5 77v4M464.5 82v1M464.5 84v1M464.5 219v4M464.5 225v1M465.5 77v1M465.5 79v1M465.5 81v1M465.5 85v1M465.5 218v2M465.5 221v3M465.5 225v1M466.5 74v1M466.5 77v1M466.5 219v1M466.5 221v1M466.5 224v1M467.5 77v2M467.5 80v3M467.5 87v1M467.5 219v1M467.5 221v1M467.5 225v1M468.5 76v3M468.5 84v1M468.5 217v2M468.5 221v1M468.5 224v2M469.5 78v5M469.5 217v1M469.5 221v2M470.5 77v7M470.5 218v3M471.5 77v6M471.5 85v1M471.5 217v3M471.5 221v1M471.5 223v3M472.5 77v3M472.5 81v2M472.5 217v1M472.5 221v2M472.5 225v1M473.5 77v4M473.5 87v1M473.5 217v1M473.5 222v2M474.5 77v2M474.5 80v2M474.5 87v1M474.5 219v1M474.5 223v1M475.5 77v4M475.5 85v1M475.5 217v1M475.5 219v1M475.5 221v1M476.5 77v3M476.5 82v1M476.5 219v1M476.5 221v1M476.5 223v2M477.5 77v1M477.5 79v1M477.5 82v1M477.5 217v2M477.5 221v1M477.5 223v3M478.5 77v3M478.5 82v1M478.5 221v1M478.5 223v2M479.5 77v1M479.5 79v2M479.5 83v2M479.5 217v1M479.5 221v3M479.5 225v1M480.5 77v1M480.5 79v3M480.5 83v3M480.5 218v1M480.5 220v2M480.5 225v1M481.5 80v2M481.5 83v2M481.5 218v3M481.5 222v2M482.5 77v7M482.5 218v3M482.5 222v1M482.5 224v2M483.5 78v2M483.5 82v3M483.5 218v4M483.5 224v1M484.5 77v1M484.5 80v3M484.5 85v1M484.5 219v1M484.5 222v2M484.5 225v1M485.5 74v1M485.5 77v5M485.5 86v1M486.5 74v1M486.5 77v3M486.5 81v2M486.5 84v3M486.5 218v3M486.5 222v1M486.5 224v2M487.5 77v4M487.5 217v3M487.5 223v1M488.5 74v1M488.5 77v5M488.5 83v1M488.5 219v1M488.5 221v1M488.5 223v1M489.5 77v4M489.5 84v1M489.5 87v1M490.5 79v1M490.5 81v2M490.5 85v1M490.5 223v1M490.5 225v1M491.5 78v2M491.5 83v2M491.5 87v1M491.5 217v3M491.5 221v5M492.5 78v1M492.5 80v1M492.5 82v3M492.5 86v1M492.5 217v2M492.5 220v2M492.5 223v1M493.5 78v1M493.5 80v1M493.5 82v1M493.5 218v1M493.5 222v1M494.5 77v3M494.5 81v2M494.5 87v1M494.5 217v1M494.5 221v1M494.5 224v2M495.5 73v1M495.5 76v2M495.5 79v2M495.5 217v2M495.5 221v2M496.5 74v1M496.5 78v1M496.5 81v1M496.5 84v1M496.5 86v1M496.5 221v1M496.5 223v3M497.5 80v3M497.5 218v3M497.5 222v1M498.5 77v2M498.5 80v3M498.5 220v2M498.5 224v2M499.5 77v4M499.5 217v3M499.5 221v5M500.5 77v2M500.5 80v5M500.5 217v8M501.5 77v1M501.5 79v1M501.5 83v1M501.5 217v1M501.5 219v4M502.5 78v3M502.5 218v1M502.5 222v1M502.5 224v1M503.5 78v2M503.5 81v2M503.5 217v6M504.5 77v1M504.5 82v2M504.5 87v1M504.5 217v1M504.5 219v1M504.5 221v2M505.5 78v1M505.5 80v1M505.5 82v1M506.5 77v5M506.5 83v1M506.5 221v4M507.5 74v1M507.5 77v1M507.5 79v4M507.5 217v2M507.5 220v2M507.5 223v1M508.5 77v3M508.5 82v1M508.5 84v1M508.5 218v3M508.5 223v2M509.5 76v5M509.5 217v1M509.5 219v1M509.5 222v2M509.5 225v1M510.5 76v3M510.5 80v2M510.5 85v1M510.5 218v1M510.5 220v2M510.5 225v1M511.5 77v4M511.5 82v1M511.5 219v5M512.5 76v1M512.5 78v1M512.5 80v1M512.5 82v1M512.5 217v4M512.5 222v3M513.5 76v1M513.5 79v1M513.5 217v1M513.5 219v2M514.5 73v1M514.5 77v2M514.5 80v1M514.5 86v1M514.5 219v1M514.5 221v1M514.5 223v2M515.5 74v1M515.5 77v2M515.5 80v2M515.5 218v1M515.5 220v1M515.5 222v3M516.5 76v1M516.5 80v1M516.5 83v1M516.5 217v6M516.5 225v1M517.5 74v1M517.5 77v2M517.5 81v2M517.5 84v1M517.5 217v4M517.5 224v1M518.5 76v2M518.5 79v2M518.5 218v1M518.5 220v1M518.5 222v3M519.5 73v1M519.5 80v4M519.5 218v1M519.5 220v1M519.5 222v4M520.5 78v6M520.5 85v1M520.5 87v1M520.5 218v1M520.5 220v1M520.5 223v2M521.5 76v1M521.5 78v3M521.5 217v4M521.5 222v1M522.5 76v1M522.5 82v2M522.5 217v1M522.5 219v1M522.5 223v1M522.5 225v1M523.5 78v2M523.5 81v1M523.5 217v3M523.5 223v1M524.5 74v1M524.5 77v2M524.5 83v1M524.5 219v1M524.5 221v1M524.5 224v2M525.5 76v1M525.5 79v2M525.5 83v2M525.5 217v2M525.5 220v2M525.5 223v1M525.5 225v1M526.5 76v1M526.5 78v5M526.5 84v1M526.5 87v1M526.5 218v1M527.5 76v3M527.5 83v1M527.5 86v1M527.5 218v1M527.5 220v6M528.5 77v1M528.5 81v2M528.5 86v1M528.5 217v2M528.5 221v1M528.5 223v1M529.5 77v1M529.5 79v2M529.5 82v1M529.5 86v2M529.5 217v3M529.5 221v1M529.5 223v1M530.5 76v1M530.5 78v4M530.5 86v1M530.5 218v3M530.5 222v3M531.5 73v1M531.5 76v2M531.5 82v4M531.5 217v1M531.5 219v2M531.5 222v2M531.5 225v1M532.5 77v2M532.5 80v1M532.5 83v3M532.5 218v4M532.5 223v1M533.5 77v3M533.5 82v1M533.5 84v1M533.5 218v1M533.5 222v1M533.5 224v1M534.5 76v3M534.5 80v1M534.5 218v1M534.5 220v1M534.5 222v1M534.5 224v1M535.5 76v1M535.5 79v1M535.5 81v1M535.5 217v1M535.5 220v1M535.5 222v1M535.5 224v1M536.5 73v1M536.5 76v3M536.5 80v1M536.5 84v1M536.5 217v1M536.5 221v1M536.5 223v1M537.5 77v3M537.5 221v2M537.5 224v2M538.5 77v6M538.5 219v2M538.5 222v2M539.5 76v2M539.5 80v3M539.5 218v2M539.5 223v3M540.5 76v2M540.5 83v2M540.5 217v3M540.5 221v2M541.5 76v5M541.5 217v2M541.5 223v1M542.5 73v1M542.5 76v3M542.5 86v1M542.5 217v1M542.5 221v3M542.5 225v1M543.5 76v6M543.5 84v1M543.5 219v3M543.5 224v2M544.5 76v2M544.5 80v1M544.5 82v2M544.5 217v5M544.5 223v1M545.5 77v1M545.5 79v1M545.5 84v1M545.5 217v3M545.5 222v3M546.5 73v1M546.5 76v1M546.5 78v3M546.5 82v2M546.5 217v3M546.5 221v1M547.5 76v1M547.5 79v2M547.5 83v2M547.5 219v2M547.5 223v1M548.5 73v1M548.5 76v1M548.5 79v2M548.5 83v1M548.5 85v1M548.5 218v1M548.5 220v4M549.5 77v2M549.5 80v1M549.5 82v1M549.5 217v2M549.5 220v3M549.5 224v1M550.5 76v2M550.5 217v1M550.5 220v2M550.5 223v1M551.5 77v1M551.5 80v1M551.5 82v1M551.5 217v1M551.5 219v1M551.5 221v1M551.5 223v2M552.5 76v2M552.5 79v1M552.5 84v1M552.5 220v1M552.5 222v3M553.5 76v1M553.5 81v2M553.5 85v1M553.5 219v1M553.5 221v2M554.5 76v1M554.5 79v3M554.5 83v1M554.5 218v1M554.5 220v1M554.5 225v1M555.5 76v3M555.5 81v1M555.5 221v1M555.5 223v3M556.5 76v4M556.5 217v3M556.5 222v1M556.5 225v1M557.5 76v3M557.5 80v2M557.5 84v1M557.5 217v3M557.5 221v5M558.5 79v2M558.5 218v1M558.5 222v1M558.5 224v1M559.5 76v2M559.5 79v2M559.5 82v4M559.5 217v1M559.5 219v1M559.5 221v1M559.5 225v1M560.5 77v2M560.5 82v2M560.5 217v4M560.5 223v2M561.5 78v1M561.5 80v1M561.5 82v2M561.5 217v1M561.5 220v1M561.5 223v1M562.5 73v1M562.5 80v2M562.5 217v1M562.5 224v1M563.5 73v1M563.5 76v5M563.5 83v1M563.5 217v2M563.5 221v3M563.5 225v1M564.5 76v3M564.5 80v2M564.5 84v1M564.5 218v1M564.5 221v1M564.5 223v3M565.5 73v1M565.5 76v2M565.5 79v1M565.5 82v1M565.5 217v5M565.5 225v1M566.5 76v1M566.5 79v2M566.5 82v1M566.5 217v1M566.5 219v1M566.5 221v1M566.5 223v3M567.5 76v1M567.5 79v1M567.5 83v1M567.5 217v7M567.5 225v1M568.5 77v2M568.5 81v3M568.5 218v1M568.5 220v1M568.5 222v3M569.5 77v3M569.5 82v1M569.5 217v1M569.5 219v1M569.5 221v4M570.5 76v1M570.5 80v1M570.5 218v3M570.5 223v1M570.5 225v1M571.5 73v1M571.5 76v4M571.5 81v1M571.5 85v2M571.5 217v1M571.5 223v3M572.5 76v1M572.5 79v1M572.5 81v1M572.5 219v2M572.5 223v2M573.5 77v2M573.5 80v1M573.5 84v1M573.5 217v1M573.5 221v3M574.5 76v6M574.5 83v1M574.5 218v4M574.5 224v1M575.5 76v2M575.5 81v1M575.5 217v1M576.5 76v3M576.5 80v3M576.5 219v1M576.5 224v2M577.5 73v1M577.5 77v1M577.5 80v1M577.5 221v1M577.5 223v1M578.5 80v1M578.5 85v1M578.5 217v1M578.5 220v1M579.5 76v1M579.5 81v2M579.5 87v1M579.5 217v3M579.5 222v2M579.5 225v1M580.5 77v3M580.5 81v3M580.5 87v1M580.5 218v1M580.5 220v4M580.5 225v1M581.5 76v2M581.5 79v2M581.5 83v1M581.5 222v1M581.5 224v1M582.5 76v2M582.5 80v2M582.5 86v1M582.5 218v3M582.5 222v3M583.5 76v6M583.5 86v1M583.5 217v1M583.5 219v2M583.5 224v1M584.5 76v3M584.5 80v1M584.5 82v1M584.5 84v1M584.5 217v1M584.5 220v2M584.5 224v1M585.5 73v1M585.5 76v2M585.5 86v1M585.5 220v1M585.5 222v1M586.5 76v6M586.5 85v1M586.5 217v5M586.5 224v1M587.5 76v1M587.5 78v4M587.5 87v1M587.5 218v1M587.5 222v1M587.5 224v1M588.5 76v1M588.5 80v3M588.5 84v1M588.5 218v3M588.5 225v1M589.5 73v1M589.5 76v1M589.5 78v2M589.5 217v1M589.5 220v1M589.5 225v1M590.5 73v1M590.5 78v2M590.5 82v3M590.5 220v1M590.5 225v1M591.5 76v3M591.5 83v2M591.5 217v2M591.5 220v1M591.5 222v2M592.5 78v2M592.5 81v1M592.5 219v2M592.5 222v3M593.5 77v3M593.5 217v2M593.5 222v3M594.5 73v1M594.5 76v3M594.5 81v2M594.5 218v1M594.5 221v2M595.5 73v1M595.5 76v6M595.5 217v2M595.5 220v1M595.5 222v4M596.5 76v2M596.5 83v1M596.5 219v1M596.5 221v2M596.5 225v1M597.5 76v2M597.5 79v1M597.5 86v1M597.5 218v3M597.5 222v2M597.5 225v1M598.5 78v1M598.5 80v1M598.5 217v1M598.5 219v1M598.5 222v1M599.5 76v2M599.5 86v1M599.5 217v1M599.5 221v1M600.5 76v2M600.5 79v1M600.5 82v1M600.5 219v1M600.5 222v3M601.5 76v1M601.5 79v1M601.5 81v1M601.5 218v1M601.5 224v1M602.5 76v3M602.5 80v2M602.5 217v3M602.5 222v1M602.5 225v1M603.5 76v3M603.5 80v1M603.5 82v2M603.5 220v2M603.5 223v3M604.5 76v3M604.5 84v1M604.5 220v6M605.5 78v2M605.5 81v3M605.5 85v2M605.5 218v3M605.5 222v1M606.5 73v1M606.5 77v2M606.5 83v2M606.5 217v1M606.5 219v1M606.5 222v1M606.5 225v1M607.5 76v4M607.5 81v2M607.5 217v1M607.5 219v1M607.5 221v1M607.5 224v2M608.5 76v4M608.5 81v1M608.5 217v1M608.5 223v3M609.5 76v1M609.5 79v1M609.5 83v1M609.5 217v2M609.5 222v4M610.5 73v1M610.5 81v1M610.5 84v2M610.5 217v1M610.5 219v1M610.5 222v3M611.5 76v3M611.5 83v1M611.5 85v1M611.5 217v2M611.5 221v1M611.5 223v3M612.5 76v1M612.5 79v1M612.5 217v2M612.5 221v2M612.5 224v1M613.5 76v1M613.5 78v1M613.5 83v1M613.5 217v3M613.5 222v2M614.5 77v1M614.5 82v2M614.5 217v1M614.5 219v2M614.5 223v1M615.5 76v2M615.5 80v1M615.5 82v1M615.5 217v2M615.5 222v2M616.5 73v1M616.5 77v2M616.5 80v1M616.5 84v2M616.5 219v2M616.5 222v2M616.5 225v1M617.5 77v1M617.5 79v3M617.5 83v1M617.5 217v1M617.5 219v3M617.5 223v1M618.5 76v3M618.5 82v1M618.5 84v1M618.5 218v2M618.5 224v1M619.5 73v1M619.5 76v2M619.5 79v2M619.5 220v1M619.5 224v1M620.5 73v1M620.5 77v3M620.5 81v2M620.5 221v2M621.5 73v1M621.5 76v4M621.5 81v1M621.5 83v1M621.5 85v1M621.5 218v1M621.5 221v2M621.5 224v2M622.5 73v1M622.5 76v1M622.5 78v3M622.5 84v1M622.5 218v1M622.5 222v1M622.5 224v1M623.5 76v3M623.5 80v1M623.5 83v3M623.5 217v1M623.5 222v1M623.5 224v1M624.5 76v2M624.5 82v1M624.5 85v1M624.5 218v1M624.5 220v4M625.5 79v1M625.5 81v2M625.5 87v1M625.5 218v4M625.5 224v2M626.5 77v2M626.5 218v1M626.5 223v1M627.5 77v1M627.5 79v1M627.5 82v1M627.5 219v7M628.5 76v4M628.5 81v2M628.5 220v3M628.5 224v2M629.5 76v3M629.5 80v1M629.5 84v1M629.5 217v1M629.5 219v1M630.5 76v1M630.5 80v1M630.5 82v1M630.5 217v1M630.5 222v1M630.5 224v1M631.5 76v3M631.5 80v2M631.5 218v6M632.5 73v1M632.5 76v2M632.5 79v2M632.5 83v2M632.5 217v1M632.5 219v1M632.5 223v1M633.5 76v1M633.5 78v3M633.5 83v1M633.5 220v2M633.5 223v1M634.5 73v1M634.5 76v4M634.5 81v1M634.5 83v1M634.5 85v1M634.5 218v3M634.5 224v1M635.5 79v1M635.5 81v1M635.5 85v1M635.5 217v1M635.5 221v1M635.5 225v1M636.5 73v1M636.5 76v4M636.5 81v3M636.5 85v1M636.5 217v3M636.5 221v1M636.5 225v1M637.5 76v1M637.5 79v2M637.5 82v1M637.5 217v1M637.5 220v3M637.5 224v2M638.5 73v1M638.5 78v2M638.5 84v1M638.5 219v1M638.5 221v4M639.5 76v1M639.5 78v2M639.5 82v1M639.5 84v1M639.5 86v1M639.5 217v4M639.5 223v1M640.5 76v1M640.5 81v1M640.5 217v1M640.5 220v6M641.5 76v1M641.5 79v1M641.5 218v2M641.5 221v2M641.5 224v1M642.5 77v1M642.5 81v1M642.5 84v1M642.5 217v2M642.5 221v1M643.5 77v2M643.5 80v1M643.5 82v1M643.5 218v1M643.5 221v1M643.5 224v2M644.5 77v2M644.5 220v1M645.5 76v5M645.5 84v1M645.5 219v1M645.5 221v1M645.5 224v2M646.5 77v1M646.5 79v1M646.5 81v1M646.5 83v1M646.5 86v1M646.5 217v3M646.5 223v1M647.5 76v1M647.5 80v1M647.5 83v1M647.5 217v1M647.5 225v1M648.5 76v2M648.5 79v1M648.5 81v3M648.5 218v2M648.5 221v2M649.5 78v1M649.5 80v2M649.5 217v2M649.5 221v4M650.5 76v3M650.5 81v2M650.5 84v1M650.5 86v1M650.5 217v2M650.5 220v1M650.5 222v2M651.5 76v1M651.5 80v1M651.5 83v1M651.5 218v1M651.5 221v2M652.5 76v4M652.5 83v1M652.5 217v3M652.5 221v1M652.5 223v1M653.5 76v1M653.5 78v2M653.5 82v2M653.5 86v2M653.5 217v2M653.5 220v2M653.5 223v2M654.5 76v1M654.5 78v2M654.5 84v1M654.5 217v1M654.5 219v1M654.5 221v1M654.5 223v1M655.5 73v1M655.5 77v3M655.5 83v1M655.5 219v3M655.5 223v2M656.5 77v4M656.5 83v3M656.5 218v3M656.5 223v2M657.5 76v3M657.5 82v1M657.5 217v2M657.5 221v5M658.5 77v1M658.5 79v1M658.5 85v1M658.5 218v1M658.5 220v1M659.5 76v5M659.5 82v2M659.5 219v2M659.5 222v1M659.5 224v1M660.5 76v3M660.5 81v1M660.5 85v2M660.5 218v1M660.5 220v1M660.5 222v1M661.5 73v1M661.5 76v1M661.5 85v1M661.5 217v1M661.5 219v1M661.5 224v1M662.5 76v1M662.5 78v2M662.5 81v1M662.5 85v1M662.5 217v2M662.5 221v1M663.5 76v3M663.5 83v1M663.5 85v1M663.5 217v1M663.5 221v1M663.5 225v1M664.5 76v2M664.5 81v1M664.5 83v1M664.5 217v2M664.5 220v1M664.5 225v1M665.5 77v2M665.5 217v1M665.5 219v2M665.5 224v1M666.5 73v1M666.5 76v9M666.5 217v2M666.5 223v1M666.5 225v1M667.5 76v2M667.5 79v2M667.5 84v1M667.5 217v2M667.5 221v1M667.5 224v1M668.5 76v4M668.5 86v1M668.5 217v4M668.5 223v3M669.5 73v1M669.5 77v1M669.5 79v4M669.5 218v3M669.5 222v2M670.5 73v1M670.5 76v4M670.5 81v1M670.5 84v1M670.5 217v2M670.5 222v2M670.5 225v1M671.5 76v3M671.5 80v2M671.5 217v1M671.5 219v1M671.5 221v1M671.5 223v1M672.5 73v1M672.5 76v2M672.5 79v4M672.5 219v1M672.5 222v2M672.5 225v1M673.5 76v1M673.5 78v1M673.5 83v1M673.5 217v1M673.5 219v7M674.5 77v2M674.5 80v1M674.5 218v4M674.5 223v1M674.5 225v1M675.5 76v3M675.5 81v1M675.5 219v2M675.5 223v2M676.5 73v1M676.5 76v4M676.5 84v2M676.5 217v3M676.5 222v1M677.5 76v1M677.5 78v2M677.5 84v1M677.5 86v1M677.5 217v2M677.5 221v3M678.5 73v1M678.5 76v7M678.5 85v1M678.5 217v1M678.5 222v2M678.5 225v1M679.5 76v2M679.5 80v1M679.5 82v1M679.5 218v1M679.5 222v1M679.5 225v1M680.5 77v1M680.5 79v1M680.5 85v1M680.5 217v1M680.5 222v1M681.5 73v1M681.5 76v2M681.5 79v1M681.5 82v1M681.5 217v3M681.5 221v2M681.5 224v1M682.5 73v1M682.5 76v1M682.5 79v2M682.5 82v1M682.5 84v1M682.5 217v1M682.5 220v1M682.5 223v1M683.5 76v2M683.5 81v1M683.5 83v2M683.5 219v6M684.5 77v3M684.5 81v1M684.5 84v1M684.5 217v4M684.5 223v2"/><path stroke="#00e4e4" d="M84.5 177v2M85.5 177v1M87.5 180v1M88.5 178v1M88.5 180v1M89.5 178v1M91.5 177v1M91.5 179v2M92.5 178v1M94.5 178v1M94.5 180v1M95.5 177v4M98.5 177v4M99.5 178v1M100.5 176v1M100.5 178v1M101.5 176v1M102.5 179v1M103.5 176v3M104.5 176v2M105.5 176v2M106.5 177v2M107.5 177v1M107.5 180v1M108.5 177v1M108.5 179v2M109.5 177v1M109.5 179v2M110.5 176v1M112.5 176v2M113.5 177v1M114.5 177v4M115.5 177v2M116.5 176v3M117.5 176v2M117.5 179v1M118.5 179v1M119.5 176v1M119.5 179v1M120.5 176v1M121.5 176v1M121.5 179v1M122.5 178v2M123.5 176v2M123.5 179v1M124.5 178v1M126.5 176v1M126.5 178v1M127.5 176v1M127.5 179v1M128.5 176v2M128.5 179v1M129.5 176v1M129.5 178v2M130.5 177v1M131.5 176v4M132.5 175v1M133.5 175v2M134.5 176v1M134.5 178v2M135.5 175v2M136.5 175v1M137.5 176v3M138.5 178v1M139.5 175v1M140.5 175v2M141.5 175v1M141.5 177v1M142.5 175v3M143.5 175v1M143.5 178v1M144.5 175v1M145.5 175v1M145.5 177v1M146.5 174v1M147.5 175v1M147.5 177v2M148.5 174v1M149.5 176v1M150.5 174v1M151.5 174v3M152.5 174v1M152.5 177v1M153.5 177v1M154.5 174v2M155.5 174v1M155.5 176v1M156.5 174v1M156.5 176v1M157.5 176v1M158.5 173v2M158.5 176v1M159.5 174v1M159.5 176v2M160.5 174v3M161.5 173v3M162.5 174v2M163.5 173v3M164.5 174v2M165.5 174v3M167.5 175v2M168.5 174v2M169.5 173v1M170.5 175v2M171.5 172v1M171.5 174v1M172.5 172v1M172.5 174v1M173.5 172v1M174.5 172v2M174.5 175v1M175.5 171v4M177.5 171v2M178.5 174v1M179.5 171v1M180.5 173v2M181.5 171v2M182.5 171v1M183.5 172v1M184.5 170v1M185.5 170v3M186.5 170v3M187.5 169v1M187.5 171v1M188.5 169v1M190.5 171v1M191.5 170v1M191.5 172v1M192.5 169v2M193.5 168v2M193.5 171v1M194.5 168v1M195.5 170v2M196.5 167v1M197.5 167v1M198.5 167v1M199.5 168v1M199.5 170v1M200.5 168v2M201.5 166v1M201.5 168v1M202.5 167v3M203.5 167v1M203.5 169v1M204.5 167v1M205.5 166v1M205.5 168v2M206.5 165v3M207.5 167v1M208.5 166v3M209.5 165v1M209.5 167v2M210.5 163v1M211.5 163v2M212.5 163v1M212.5 166v1M213.5 162v1M214.5 163v1M214.5 165v1M215.5 161v3M216.5 161v2M217.5 161v3M218.5 160v1M218.5 163v1M219.5 160v3M220.5 161v2M221.5 158v1M221.5 161v1M222.5 158v1M222.5 160v2M223.5 160v1M224.5 156v1M224.5 158v2M225.5 157v1M225.5 159v1M226.5 154v1M226.5 156v2M228.5 153v1M228.5 156v1M229.5 152v1M229.5 154v2M230.5 151v1M230.5 153v2M231.5 150v1M231.5 152v1M232.5 150v1M232.5 152v1M233.5 149v1M233.5 151v2M235.5 148v1M237.5 144v1M237.5 147v1M238.5 143v2M238.5 146v1M239.5 142v4M240.5 141v3M241.5 142v1M242.5 137v1M242.5 139v2M243.5 136v1M243.5 138v1M244.5 135v2M245.5 132v2M246.5 130v2M247.5 127v1M248.5 123v1M248.5 125v1M249.5 122v1M249.5 124v1M250.5 115v2M251.5 112v2M252.5 109v2M253.5 106v2M254.5 103v2M255.5 100v2M256.5 96v2M257.5 93v2M258.5 89v2M259.5 85v2M260.5 82v2M261.5 78v2M262.5 76v2M263.5 74v2M264.5 74v2M265.5 74v2M266.5 74v2M267.5 74v2M268.5 74v2M269.5 74v2M270.5 74v2M271.5 74v2M272.5 74v2M273.5 74v2M274.5 74v2M275.5 74v2M276.5 74v2M277.5 75v2M278.5 75v2M279.5 75v2M280.5 75v2M281.5 75v2M282.5 75v2M283.5 76v2M284.5 76v2M285.5 76v2M286.5 76v2M287.5 75v2M288.5 75v2M289.5 75v2M290.5 74v2M291.5 74v2M292.5 73v2M293.5 73v2M294.5 73v2M295.5 72v2M296.5 72v2M297.5 72v2M298.5 71v2M299.5 71v2M300.5 71v2M301.5 71v2M302.5 71v2M303.5 71v2M304.5 71v2M305.5 71v2M306.5 71v2M307.5 71v2M308.5 72v2M309.5 71v2M310.5 71v2M311.5 71v2M312.5 72v2M313.5 72v2M314.5 71v2M315.5 72v2M316.5 71v2M317.5 72v2M318.5 71v2M319.5 72v2M320.5 72v2M321.5 72v2M322.5 72v2M323.5 73v2M324.5 73v2M325.5 73v2M326.5 73v2M327.5 73v2M328.5 74v2M329.5 74v2M330.5 74v2M331.5 74v2M332.5 74v2M333.5 75v2M334.5 74v2M335.5 74v2M336.5 74v2M337.5 74v2M338.5 74v2M339.5 74v2M340.5 74v2M341.5 73v2M342.5 73v2M343.5 74v2M344.5 73v2M345.5 74v2M346.5 73v2M347.5 73v2M348.5 73v2M349.5 73v2M350.5 73v2M351.5 73v2M352.5 73v2M353.5 73v2M354.5 73v2M355.5 72v2M356.5 73v2M357.5 73v2M358.5 72v2M359.5 72v2M360.5 72v2M361.5 72v2M362.5 72v2M363.5 71v2M364.5 72v2M365.5 72v2M366.5 72v2M367.5 72v2M368.5 71v2M369.5 71v2M370.5 71v2M371.5 71v2M372.5 71v2M373.5 71v2M374.5 71v2M375.5 71v2M376.5 71v2M377.5 71v2M378.5 70v2M379.5 71v2M380.5 71v2M381.5 70v2M382.5 71v2M383.5 70v2M384.5 70v2M385.5 70v2M386.5 70v2M387.5 70v2M388.5 70v2M389.5 70v2M390.5 70v2M391.5 70v2M392.5 69v2M393.5 69v2M394.5 69v2M395.5 70v2M396.5 69v2M397.5 69v2M398.5 70v2M399.5 69v2M400.5 70v2M401.5 70v2M402.5 70v2M403.5 70v2M404.5 70v2M405.5 70v2M406.5 70v2M407.5 70v2M408.5 71v2M409.5 70v2M410.5 71v2M411.5 71v2M412.5 71v2M413.5 71v2M414.5 71v2M415.5 71v2M416.5 71v2M417.5 72v2M418.5 72v2M419.5 71v2M420.5 72v2M421.5 72v2M422.5 72v2M423.5 72v2M424.5 72v2M425.5 72v2M426.5 73v2M427.5 73v2M428.5 72v2M429.5 73v2M430.5 73v2M431.5 73v2M432.5 74v2M433.5 74v2M434.5 73v2M435.5 74v2M436.5 73v2M437.5 73v2M438.5 74v2M439.5 74v2M440.5 73v2M441.5 74v2M442.5 74v2M443.5 74v2M444.5 74v2M445.5 74v2M446.5 74v2M447.5 74v2M448.5 74v2M449.5 74v2M450.5 74v2M451.5 74v2M452.5 74v2M453.5 74v2M454.5 75v2M455.5 74v2M456.5 74v2M457.5 74v2M458.5 74v2M459.5 74v2M460.5 74v2M461.5 74v2M462.5 75v2M463.5 75v2M464.5 75v2M465.5 75v2M466.5 75v2M467.5 75v2M468.5 74v2M469.5 75v2M470.5 75v2M471.5 75v2M472.5 75v2M473.5 75v2M474.5 75v2M475.5 75v2M476.5 75v2M477.5 75v2M478.5 75v2M479.5 75v2M480.5 75v2M481.5 75v2M482.5 75v2M483.5 75v2M484.5 75v2M485.5 75v2M486.5 75v2M487.5 75v2M488.5 75v2M489.5 75v2M490.5 75v2M491.5 75v2M492.5 75v2M493.5 75v2M494.5 75v2M495.5 74v2M496.5 75v2M497.5 74v2M498.5 75v2M499.5 75v2M500.5 75v2M501.5 75v2M502.5 75v2M503.5 75v2M504.5 75v2M505.5 75v2M506.5 75v2M507.5 75v2M508.5 75v2M509.5 74v2M510.5 74v2M511.5 75v2M512.5 74v2M513.5 74v2M514.5 74v2M515.5 75v2M516.5 74v2M517.5 75v2M518.5 74v2M519.5 74v2M520.5 74v2M521.5 74v2M522.5 74v2M523.5 75v2M524.5 75v2M525.5 74v2M526.5 74v2M527.5 74v2M528.5 75v2M529.5 75v2M530.5 74v2M531.5 74v2M532.5 75v2M533.5 75v2M534.5 74v2M535.5 74v2M536.5 74v2M537.5 74v2M538.5 74v2M539.5 74v2M540.5 74v2M541.5 74v2M542.5 74v2M543.5 74v2M544.5 74v2M545.5 74v2M546.5 74v2M547.5 74v2M548.5 74v2M549.5 74v2M550.5 74v2M551.5 74v2M552.5 74v2M553.5 74v2M554.5 74v2M555.5 74v2M556.5 74v2M557.5 74v2M558.5 74v2M559.5 74v2M560.5 74v2M561.5 74v2M562.5 74v2M563.5 74v2M564.5 74v2M565.5 74v2M566.5 74v2M567.5 74v2M568.5 74v2M569.5 74v2M570.5 74v2M571.5 74v2M572.5 74v2M573.5 74v2M574.5 74v2M575.5 74v2M576.5 74v2M577.5 74v2M578.5 74v2M579.5 74v2M580.5 74v2M581.5 74v2M582.5 74v2M583.5 74v2M584.5 74v2M585.5 74v2M586.5 74v2M587.5 74v2M588.5 74v2M589.5 74v2M590.5 74v2M591.5 74v2M592.5 74v2M593.5 74v2M594.5 74v2M595.5 74v2M596.5 74v2M597.5 74v2M598.5 74v2M599.5 74v2M600.5 74v2M601.5 74v2M602.5 74v2M603.5 74v2M604.5 74v2M605.5 74v2M606.5 74v2M607.5 74v2M608.5 74v2M609.5 74v2M610.5 74v2M611.5 74v2M612.5 74v2M613.5 74v2M614.5 74v2M615.5 74v2M616.5 74v2M617.5 74v2M618.5 74v2M619.5 74v2M620.5 74v2M621.5 74v2M622.5 74v2M623.5 74v2M624.5 74v2M625.5 74v2M626.5 74v2M627.5 74v2M628.5 74v2M629.5 74v2M630.5 74v2M631.5 74v2M632.5 74v2M633.5 74v2M634.5 74v2M635.5 74v2M636.5 74v2M637.5 74v2M638.5 74v2M639.5 74v2M640.5 74v2M641.5 74v2M642.5 74v2M643.5 74v2M644.5 74v2M645.5 74v2M646.5 74v2M647.5 74v2M648.5 74v2M649.5 74v2M650.5 74v2M651.5 74v2M652.5 74v2M653.5 74v2M654.5 74v2M655.5 74v2M656.5 74v2M657.5 74v2M658.5 74v2M659.5 74v2M660.5 74v2M661.5 74v2M662.5 74v2M663.5 74v2M664.5 74v2M665.5 74v2M666.5 74v2M667.5 74v2M668.5 74v2M669.5 74v2M670.5 74v2M671.5 74v2M672.5 74v2M673.5 74v2M674.5 74v2M675.5 74v2M676.5 74v2M677.5 74v2M678.5 74v2M679.5 74v2M680.5 74v2M681.5 74v2M682.5 74v2M683.5 74v2M684.5 74v2"/><path stroke="#00f8f8" d="M84.5 174v3M84.5 212v7M85.5 174v3M85.5 212v7M86.5 174v3M86.5 212v7M87.5 174v3M87.5 212v5M87.5 218v1M88.5 174v3M88.5 212v7M89.5 173v3M89.5 212v7M90.5 174v3M90.5 212v5M90.5 218v1M91.5 174v3M91.5 212v5M91.5 218v1M92.5 174v3M92.5 212v5M92.5 218v1M93.5 174v3M93.5 212v7M94.5 174v3M94.5 212v7M95.5 174v3M95.5 212v7M96.5 174v3M96.5 212v7M97.5 174v3M97.5 212v7M98.5 174v3M98.5 212v7M99.5 173v3M99.5 212v5M99.5 218v1M100.5 173v3M100.5 212v5M100.5 218v1M101.5 173v3M101.5 212v7M102.5 173v3M102.5 212v5M102.5 218v1M103.5 173v3M103.5 212v5M103.5 218v1M104.5 173v3M104.5 212v7M105.5 173v3M105.5 212v5M105.5 218v1M106.5 173v3M106.5 212v7M107.5 174v3M107.5 212v7M108.5 174v3M108.5 212v5M108.5 218v1M109.5 174v3M109.5 212v7M110.5 173v3M110.5 212v7M111.5 173v3M111.5 212v5M111.5 218v1M112.5 173v3M112.5 212v7M113.5 173v3M113.5 212v5M113.5 218v1M114.5 174v3M114.5 212v7M115.5 173v3M115.5 212v7M116.5 173v3M116.5 212v7M117.5 173v3M117.5 212v7M118.5 173v3M118.5 212v5M118.5 218v1M119.5 173v3M119.5 212v5M119.5 218v1M120.5 173v3M120.5 212v7M121.5 173v3M121.5 212v5M121.5 218v1M122.5 173v3M122.5 212v7M123.5 173v3M123.5 212v5M123.5 218v1M124.5 173v3M124.5 212v7M125.5 172v3M125.5 212v7M126.5 173v3M126.5 212v7M127.5 173v3M127.5 212v7M128.5 173v3M128.5 212v7M129.5 173v3M129.5 212v5M129.5 218v1M130.5 172v3M130.5 212v7M131.5 173v3M131.5 212v5M131.5 218v1M132.5 172v3M132.5 212v7M133.5 172v3M133.5 212v5M133.5 218v1M134.5 173v3M134.5 212v5M134.5 218v1M135.5 172v3M135.5 212v5M135.5 218v1M136.5 172v3M136.5 212v7M137.5 172v3M137.5 212v7M138.5 172v3M138.5 212v5M138.5 218v1M139.5 172v3M139.5 212v7M140.5 172v3M140.5 212v7M141.5 172v3M141.5 212v7M142.5 172v3M142.5 212v5M142.5 218v1M143.5 172v3M143.5 212v5M143.5 218v1M144.5 172v3M144.5 212v7M145.5 171v3M145.5 212v7M146.5 171v3M146.5 212v5M146.5 218v1M147.5 172v3M147.5 212v5M147.5 218v1M148.5 171v3M148.5 212v7M149.5 171v3M149.5 212v7M150.5 171v3M150.5 212v7M151.5 171v3M151.5 212v5M151.5 218v1M152.5 171v3M152.5 212v7M153.5 171v3M153.5 212v5M153.5 218v1M154.5 171v3M154.5 212v5M154.5 218v1M155.5 170v3M155.5 212v7M156.5 171v3M156.5 212v7M157.5 170v3M157.5 212v5M157.5 218v1M158.5 170v3M158.5 212v7M159.5 171v3M159.5 212v5M159.5 218v1M160.5 170v3M160.5 212v7M161.5 170v3M161.5 212v5M161.5 218v1M162.5 170v3M162.5 212v7M163.5 170v3M163.5 212v5M163.5 218v1M164.5 170v3M164.5 212v7M165.5 170v3M165.5 212v5M165.5 218v1M166.5 170v3M166.5 212v7M167.5 170v3M167.5 212v7M168.5 170v3M168.5 212v7M169.5 170v3M169.5 212v7M170.5 170v3M170.5 212v5M170.5 218v1M171.5 169v3M171.5 212v5M171.5 218v1M172.5 169v3M172.5 212v7M173.5 169v3M173.5 212v7M174.5 169v3M174.5 212v5M174.5 218v1M175.5 168v3M175.5 212v7M176.5 168v3M176.5 212v5M176.5 218v1M177.5 168v3M177.5 212v5M177.5 218v1M178.5 168v3M178.5 212v5M178.5 218v1M179.5 168v3M179.5 212v7M180.5 168v3M180.5 212v7M181.5 168v3M181.5 212v7M182.5 167v3M182.5 212v7M183.5 167v3M183.5 212v7M184.5 167v3M184.5 212v7M185.5 167v3M185.5 212v5M185.5 218v1M186.5 167v3M186.5 212v5M186.5 218v1M187.5 166v3M187.5 212v5M187.5 218v1M188.5 166v3M188.5 212v5M188.5 218v1M189.5 166v3M189.5 212v5M189.5 218v1M190.5 166v3M190.5 212v7M191.5 166v3M191.5 212v7M192.5 166v3M192.5 212v7M193.5 165v3M193.5 212v7M194.5 165v3M194.5 212v5M194.5 218v1M195.5 165v3M195.5 212v7M196.5 164v3M196.5 212v7M197.5 164v3M197.5 212v5M197.5 218v1M198.5 164v3M198.5 212v7M199.5 164v3M199.5 212v5M199.5 218v1M200.5 163v3M200.5 212v5M200.5 218v1M201.5 163v3M201.5 212v5M201.5 218v1M202.5 164v3M202.5 212v7M203.5 163v3M203.5 212v5M203.5 218v1M204.5 163v3M204.5 212v7M205.5 163v3M205.5 212v5M205.5 218v1M206.5 162v3M206.5 212v7M207.5 162v3M207.5 212v7M208.5 162v3M208.5 212v5M208.5 218v1M209.5 162v3M209.5 212v5M209.5 218v1M210.5 160v3M210.5 212v7M211.5 160v3M211.5 212v5M211.5 218v1M212.5 160v3M212.5 212v7M213.5 159v3M213.5 212v7M214.5 159v3M214.5 212v7M215.5 158v3M215.5 212v7M216.5 158v3M216.5 212v5M216.5 218v1M217.5 158v3M217.5 212v7M218.5 157v3M218.5 212v5M218.5 218v1M219.5 157v3M219.5 212v5M219.5 218v1M220.5 156v3M220.5 212v5M220.5 218v1M221.5 155v3M221.5 212v5M221.5 218v1M222.5 155v3M222.5 212v7M223.5 154v3M223.5 212v7M224.5 153v3M224.5 212v5M224.5 218v1M225.5 153v3M225.5 212v5M225.5 218v1M226.5 151v3M226.5 212v7M227.5 151v3M227.5 212v5M227.5 218v1M228.5 150v3M228.5 212v7M229.5 149v3M229.5 212v5M229.5 218v1M230.5 148v3M230.5 212v7M231.5 147v3M231.5 212v5M231.5 218v2M232.5 147v3M232.5 212v5M232.5 218v2M233.5 146v3M233.5 212v8M234.5 145v3M234.5 212v8M235.5 144v3M235.5 212v9M236.5 143v3M236.5 212v5M236.5 218v3M237.5 141v3M237.5 212v5M237.5 218v3M238.5 140v3M238.5 212v9M239.5 139v3M239.5 212v5M239.5 218v3M240.5 138v3M240.5 212v5M240.5 218v4M241.5 137v3M241.5 212v5M241.5 218v4M242.5 134v3M242.5 212v5M242.5 218v4M243.5 133v3M243.5 212v5M243.5 218v4M244.5 131v3M244.5 212v5M244.5 218v4M245.5 128v3M245.5 212v11M246.5 127v3M246.5 212v5M246.5 218v5M247.5 124v3M247.5 212v5M247.5 218v5M248.5 120v3M248.5 212v11M249.5 118v3M249.5 212v12M250.5 212v5M250.5 219v2M250.5 223v1M251.5 212v5M251.5 218v1M251.5 223v1M252.5 212v5M252.5 218v1M252.5 220v2M253.5 212v6M253.5 220v1M254.5 212v6M254.5 219v1M254.5 221v2M254.5 224v1M255.5 212v5M255.5 218v3M256.5 212v5M256.5 219v4M257.5 212v6M257.5 219v2M258.5 212v5M258.5 218v3M258.5 222v1M258.5 224v1M259.5 212v6M259.5 222v1M259.5 225v1M260.5 212v5M260.5 218v1M260.5 220v4M261.5 212v5M261.5 219v2M261.5 223v1M262.5 212v11M263.5 212v5M263.5 222v3M264.5 212v5M264.5 218v4M264.5 223v2M265.5 212v5M265.5 223v2M266.5 212v5M266.5 220v1M266.5 222v1M267.5 212v6M267.5 219v1M268.5 212v5M268.5 218v1M268.5 220v5M268.5 226v1M269.5 212v6M269.5 219v1M269.5 222v2M270.5 212v5M270.5 218v2M270.5 221v2M270.5 224v1M270.5 226v1M271.5 212v5M271.5 218v1M271.5 221v2M272.5 212v6M272.5 219v1M272.5 222v3M273.5 212v6M273.5 221v1M273.5 224v1M274.5 212v5M274.5 221v1M274.5 223v1M274.5 226v1M275.5 212v5M275.5 219v1M275.5 221v1M276.5 212v9M276.5 222v1M276.5 224v1M276.5 226v1M277.5 212v5M277.5 219v2M277.5 222v1M278.5 212v9M278.5 223v2M278.5 226v1M279.5 212v6M279.5 220v1M279.5 222v1M279.5 226v1M280.5 212v8M280.5 221v2M281.5 212v6M281.5 219v5M281.5 226v1M282.5 212v6M282.5 221v2M283.5 212v5M283.5 219v2M283.5 224v1M284.5 212v6M284.5 220v2M284.5 223v2M285.5 212v5M285.5 223v2M286.5 212v5M286.5 223v1M286.5 226v1M287.5 212v5M287.5 218v1M287.5 222v3M288.5 212v5M288.5 222v2M289.5 212v6M289.5 219v1M289.5 221v1M289.5 223v2M290.5 212v6M290.5 219v2M290.5 222v1M290.5 224v1M291.5 212v5M291.5 220v4M292.5 212v9M292.5 223v1M293.5 212v7M293.5 222v1M293.5 226v1M294.5 212v8M294.5 222v3M295.5 212v6M295.5 219v2M295.5 223v1M296.5 212v5M296.5 218v2M296.5 222v2M297.5 212v5M297.5 218v2M297.5 223v1M297.5 226v1M298.5 212v5M298.5 220v4M299.5 212v6M299.5 221v1M300.5 212v5M300.5 219v1M300.5 224v1M301.5 212v5M301.5 222v1M301.5 224v1M301.5 226v1M302.5 212v6M302.5 220v1M302.5 223v1M303.5 212v5M303.5 219v5M304.5 212v5M304.5 218v1M304.5 221v2M304.5 226v1M305.5 212v5M305.5 220v3M305.5 224v1M305.5 226v1M306.5 212v6M306.5 219v1M306.5 221v2M306.5 224v1M306.5 226v1M307.5 212v6M307.5 219v1M307.5 221v4M307.5 226v1M308.5 212v11M308.5 224v1M308.5 226v1M309.5 212v5M309.5 218v1M309.5 220v1M309.5 223v1M310.5 212v7M310.5 226v1M311.5 212v6M311.5 219v3M312.5 212v5M312.5 219v1M312.5 223v2M313.5 212v8M313.5 224v1M313.5 226v1M314.5 212v5M314.5 219v2M314.5 223v1M315.5 212v6M315.5 219v1M315.5 222v1M315.5 224v1M316.5 212v5M316.5 219v4M316.5 226v1M317.5 212v5M317.5 218v1M317.5 220v1M317.5 222v1M317.5 224v1M317.5 226v1M318.5 212v7M318.5 221v1M318.5 223v1M318.5 226v1M319.5 212v5M319.5 218v2M319.5 222v3M320.5 212v5M320.5 220v2M320.5 224v1M320.5 226v1M321.5 212v5M321.5 219v4M321.5 226v1M322.5 212v5M322.5 218v7M323.5 212v6M323.5 219v1M323.5 222v1M323.5 224v1M323.5 226v1M324.5 212v5M324.5 219v1M324.5 222v1M324.5 224v1M324.5 226v1M325.5 212v11M325.5 224v1M326.5 212v7M326.5 220v1M327.5 212v5M327.5 220v2M328.5 212v5M328.5 224v1M328.5 226v1M329.5 212v6M329.5 221v1M329.5 224v1M329.5 226v1M330.5 212v5M330.5 218v1M330.5 220v5M330.5 226v1M331.5 212v5M331.5 218v1M331.5 220v1M331.5 223v2M331.5 226v1M332.5 212v5M332.5 220v1M332.5 222v2M332.5 226v1M333.5 212v6M333.5 219v5M334.5 212v5M334.5 220v2M335.5 212v7M335.5 222v2M335.5 226v1M336.5 212v5M336.5 220v2M336.5 223v1M336.5 226v1M337.5 212v5M337.5 218v1M337.5 221v1M337.5 223v2M338.5 212v6M338.5 220v2M338.5 223v2M339.5 212v5M339.5 218v3M339.5 223v1M340.5 212v7M340.5 226v1M341.5 212v6M341.5 219v3M341.5 224v1M342.5 212v6M342.5 220v2M342.5 226v1M343.5 212v7M343.5 220v1M343.5 223v1M344.5 212v5M344.5 223v2M345.5 212v6M345.5 221v1M345.5 224v1M346.5 212v9M346.5 223v2M347.5 212v10M347.5 223v1M348.5 212v5M348.5 221v2M348.5 224v1M349.5 212v8M349.5 221v1M349.5 223v2M349.5 226v1M350.5 212v5M350.5 219v1M350.5 222v3M350.5 226v1M351.5 212v7M351.5 220v3M351.5 224v1M352.5 212v5M352.5 220v4M352.5 226v1M353.5 212v5M353.5 219v1M353.5 222v1M354.5 212v6M354.5 221v2M354.5 226v1M355.5 212v6M355.5 222v1M355.5 226v1M356.5 212v5M356.5 218v1M356.5 223v1M356.5 226v1M357.5 212v6M357.5 224v1M358.5 212v5M358.5 219v2M358.5 222v1M358.5 224v1M359.5 212v5M359.5 218v1M359.5 226v1M360.5 212v6M360.5 219v2M360.5 223v2M360.5 226v1M361.5 212v6M361.5 219v2M361.5 222v3M361.5 226v1M362.5 212v8M362.5 222v3M363.5 212v6M363.5 223v2M364.5 212v5M364.5 221v3M364.5 226v1M365.5 212v7M365.5 220v3M365.5 224v1M366.5 212v5M366.5 219v3M367.5 212v5M367.5 220v3M367.5 224v1M368.5 212v5M368.5 218v1M368.5 220v2M368.5 223v2M369.5 212v10M369.5 223v2M370.5 212v6M370.5 223v1M371.5 212v7M371.5 221v2M371.5 226v1M372.5 212v5M372.5 224v1M373.5 212v5M373.5 218v2M373.5 221v2M373.5 224v1M374.5 212v8M374.5 222v1M374.5 226v1M375.5 212v9M375.5 223v2M375.5 226v1M376.5 212v7M376.5 220v1M376.5 223v1M377.5 212v5M377.5 220v2M377.5 223v1M378.5 212v7M378.5 221v1M378.5 224v1M378.5 226v1M379.5 212v7M379.5 222v1M379.5 226v1M380.5 212v7M380.5 221v1M381.5 212v6M381.5 224v1M381.5 226v1M382.5 212v5M382.5 219v2M382.5 224v1M382.5 226v1M383.5 212v7M383.5 223v1M383.5 226v1M384.5 212v8M384.5 222v1M384.5 226v1M385.5 212v6M385.5 221v1M385.5 223v1M385.5 226v1M386.5 212v5M386.5 218v1M386.5 221v2M387.5 212v5M387.5 226v1M388.5 212v6M388.5 219v3M388.5 223v2M389.5 212v5M389.5 220v2M389.5 224v1M390.5 212v6M390.5 221v1M390.5 224v1M391.5 212v5M391.5 219v3M392.5 212v5M392.5 222v3M392.5 226v1M393.5 212v5M393.5 218v2M393.5 221v1M393.5 223v2M394.5 212v5M394.5 218v1M394.5 221v4M395.5 212v6M395.5 219v1M395.5 223v2M396.5 212v5M396.5 220v5M396.5 226v1M397.5 212v5M397.5 219v1M397.5 222v1M398.5 212v5M398.5 220v3M398.5 224v1M399.5 212v5M399.5 219v1M399.5 221v2M399.5 226v1M400.5 212v5M400.5 222v3M401.5 212v5M401.5 219v3M402.5 212v5M402.5 218v2M402.5 221v3M403.5 212v5M403.5 218v4M403.5 224v1M403.5 226v1M404.5 212v5M404.5 218v2M404.5 226v1M405.5 212v7M405.5 221v2M405.5 224v1M406.5 212v5M406.5 221v1M407.5 212v5M407.5 218v1M407.5 224v1M407.5 226v1M408.5 212v6M408.5 219v2M409.5 212v8M409.5 222v1M410.5 212v6M410.5 223v1M411.5 212v5M411.5 218v1M411.5 220v1M411.5 223v2M411.5 226v1M412.5 212v5M412.5 218v1M412.5 220v5M412.5 226v1M413.5 212v7M413.5 221v1M414.5 212v5M414.5 218v2M414.5 221v1M414.5 226v1M415.5 212v7M415.5 221v2M415.5 226v1M416.5 212v5M416.5 219v2M416.5 224v1M416.5 226v1M417.5 212v5M417.5 218v3M417.5 223v1M417.5 226v1M418.5 212v5M418.5 221v2M418.5 226v1M419.5 212v5M419.5 219v2M419.5 226v1M420.5 212v5M420.5 219v1M420.5 221v2M420.5 226v1M421.5 212v5M421.5 218v4M421.5 223v2M422.5 212v5M422.5 218v1M422.5 221v1M422.5 224v1M423.5 212v5M423.5 218v1M423.5 221v2M423.5 224v1M424.5 212v10M424.5 226v1M425.5 212v5M425.5 218v3M425.5 222v3M425.5 226v1M426.5 212v7M426.5 220v3M426.5 224v1M427.5 212v6M427.5 219v1M427.5 221v3M427.5 226v1M428.5 212v6M428.5 219v6M429.5 212v7M429.5 221v1M429.5 223v2M429.5 226v1M430.5 212v5M430.5 218v1M430.5 221v1M431.5 212v7M431.5 221v2M431.5 226v1M432.5 212v5M432.5 219v1M432.5 224v1M433.5 212v7M433.5 220v1M433.5 226v1M434.5 212v5M434.5 218v1M434.5 221v1M434.5 224v1M435.5 212v5M435.5 219v1M435.5 221v1M435.5 224v1M436.5 212v8M436.5 221v1M436.5 224v1M437.5 212v6M437.5 220v1M437.5 222v3M438.5 212v5M438.5 223v1M439.5 212v6M439.5 219v1M439.5 222v1M439.5 226v1M440.5 212v5M440.5 222v2M440.5 226v1M441.5 212v5M441.5 219v2M441.5 222v2M441.5 226v1M442.5 212v5M442.5 218v2M442.5 224v1M442.5 226v1M443.5 212v5M443.5 223v2M443.5 226v1M444.5 212v6M444.5 219v1M444.5 221v1M444.5 223v1M445.5 212v5M445.5 218v1M445.5 220v3M445.5 224v1M446.5 212v6M446.5 220v5M446.5 226v1M447.5 212v5M447.5 220v3M447.5 226v1M448.5 212v5M448.5 221v4M449.5 212v7M449.5 223v2M449.5 226v1M450.5 212v9M450.5 222v1M450.5 224v1M451.5 212v8M451.5 223v1M452.5 212v6M452.5 220v2M452.5 226v1M453.5 212v7M453.5 223v2M453.5 226v1M454.5 212v6M454.5 220v2M454.5 223v1M454.5 226v1M455.5 212v9M456.5 212v5M456.5 219v1M456.5 221v4M457.5 212v5M457.5 218v1M457.5 220v5M458.5 212v7M458.5 221v2M458.5 224v1M459.5 212v6M459.5 219v2M459.5 222v1M460.5 212v5M460.5 218v1M460.5 221v4M460.5 226v1M461.5 212v6M461.5 219v3M461.5 223v1M462.5 212v10M462.5 223v1M462.5 226v1M463.5 212v5M463.5 218v4M463.5 223v1M464.5 212v7M464.5 223v2M465.5 212v6M465.5 220v1M465.5 224v1M466.5 212v7M466.5 220v1M466.5 222v2M466.5 226v1M467.5 212v7M467.5 220v1M467.5 222v3M467.5 226v1M468.5 212v5M468.5 219v2M468.5 222v2M469.5 212v5M469.5 218v3M469.5 223v2M470.5 212v6M470.5 221v4M470.5 226v1M471.5 212v5M471.5 220v1M471.5 222v1M472.5 212v5M472.5 218v3M472.5 223v2M472.5 226v1M473.5 212v5M473.5 218v4M473.5 224v1M473.5 226v1M474.5 212v7M474.5 220v3M474.5 224v1M475.5 212v5M475.5 218v1M475.5 220v1M475.5 222v3M475.5 226v1M476.5 212v7M476.5 220v1M476.5 222v1M476.5 226v1M477.5 212v5M477.5 219v2M477.5 222v1M477.5 226v1M478.5 212v9M478.5 222v1M479.5 212v5M479.5 218v3M479.5 224v1M479.5 226v1M480.5 212v6M480.5 219v1M480.5 222v3M481.5 212v6M481.5 221v1M481.5 224v1M482.5 212v6M482.5 221v1M482.5 223v1M482.5 226v1M483.5 212v6M483.5 222v2M484.5 212v7M484.5 220v2M484.5 224v1M485.5 212v13M485.5 226v1M486.5 212v6M486.5 221v1M486.5 223v1M486.5 226v1M487.5 212v5M487.5 220v3M487.5 224v1M488.5 212v7M488.5 220v1M488.5 222v1M488.5 224v1M489.5 212v13M489.5 226v1M490.5 212v11M490.5 224v1M490.5 226v1M491.5 212v5M491.5 220v1M491.5 226v1M492.5 212v5M492.5 219v1M492.5 222v1M492.5 224v1M492.5 226v1M493.5 212v6M493.5 219v3M493.5 223v2M493.5 226v1M494.5 212v5M494.5 218v3M494.5 222v2M495.5 212v5M495.5 219v2M495.5 223v2M495.5 226v1M496.5 212v9M496.5 222v1M496.5 226v1M497.5 212v6M497.5 221v1M497.5 223v2M498.5 212v8M498.5 222v2M498.5 226v1M499.5 212v5M499.5 220v1M500.5 212v5M501.5 212v5M501.5 218v1M501.5 223v2M502.5 212v6M502.5 219v3M502.5 223v1M503.5 212v5M503.5 223v2M504.5 212v5M504.5 218v1M504.5 220v1M504.5 223v2M505.5 212v13M505.5 226v1M506.5 212v9M507.5 212v5M507.5 219v1M507.5 222v1M507.5 224v1M507.5 226v1M508.5 212v6M508.5 221v2M508.5 226v1M509.5 212v5M509.5 218v1M509.5 220v2M509.5 224v1M509.5 226v1M510.5 212v6M510.5 219v1M510.5 222v3M510.5 226v1M511.5 212v7M511.5 224v1M511.5 226v1M512.5 212v5M512.5 221v1M512.5 226v1M513.5 212v5M513.5 218v1M513.5 221v4M514.5 212v7M514.5 220v1M514.5 222v1M515.5 212v6M515.5 219v1M515.5 221v1M516.5 212v5M516.5 223v2M517.5 212v5M517.5 221v3M517.5 226v1M518.5 212v6M518.5 219v1M518.5 221v1M519.5 212v6M519.5 219v1M519.5 221v1M520.5 212v6M520.5 219v1M520.5 221v2M520.5 226v1M521.5 212v5M521.5 221v1M521.5 223v2M521.5 226v1M522.5 212v5M522.5 218v1M522.5 220v3M522.5 224v1M522.5 226v1M523.5 212v5M523.5 220v3M523.5 224v1M523.5 226v1M524.5 212v7M524.5 220v1M524.5 222v2M524.5 226v1M525.5 212v5M525.5 219v1M525.5 222v1M525.5 224v1M525.5 226v1M526.5 212v6M526.5 219v6M526.5 226v1M527.5 212v6M527.5 219v1M527.5 226v1M528.5 212v5M528.5 219v2M528.5 222v1M528.5 224v1M529.5 212v5M529.5 220v1M529.5 222v1M529.5 224v1M530.5 212v6M530.5 221v1M530.5 226v1M531.5 212v5M531.5 218v1M531.5 221v1M531.5 224v1M531.5 226v1M532.5 212v6M532.5 222v1M532.5 224v1M532.5 226v1M533.5 212v6M533.5 219v3M533.5 223v1M533.5 226v1M534.5 212v6M534.5 219v1M534.5 221v1M534.5 223v1M535.5 212v5M535.5 218v2M535.5 221v1M535.5 223v1M535.5 226v1M536.5 212v5M536.5 218v3M536.5 222v1M536.5 224v1M536.5 226v1M537.5 212v9M537.5 223v1M538.5 212v7M538.5 221v1M538.5 224v1M538.5 226v1M539.5 212v6M539.5 220v3M539.5 226v1M540.5 212v5M540.5 220v1M540.5 223v2M541.5 212v5M541.5 219v4M541.5 224v1M542.5 212v5M542.5 218v3M542.5 224v1M542.5 226v1M543.5 212v7M543.5 222v2M544.5 212v5M544.5 222v1M544.5 224v1M545.5 212v5M545.5 220v2M546.5 212v5M546.5 220v1M546.5 222v3M547.5 212v7M547.5 221v2M547.5 224v1M547.5 226v1M548.5 212v6M548.5 219v1M548.5 224v1M549.5 212v5M549.5 219v1M549.5 223v1M550.5 212v5M550.5 218v2M550.5 222v1M550.5 224v1M551.5 212v5M551.5 218v1M551.5 220v1M551.5 222v1M551.5 226v1M552.5 212v8M552.5 221v1M553.5 212v7M553.5 220v1M553.5 223v2M553.5 226v1M554.5 212v6M554.5 219v1M554.5 221v4M554.5 226v1M555.5 212v9M555.5 222v1M555.5 226v1M556.5 212v5M556.5 220v2M556.5 223v2M557.5 212v5M557.5 220v1M557.5 226v1M558.5 212v6M558.5 219v3M558.5 223v1M558.5 226v1M559.5 212v5M559.5 218v1M559.5 220v1M559.5 222v3M559.5 226v1M560.5 212v5M560.5 221v2M561.5 212v5M561.5 218v2M561.5 221v2M561.5 224v1M561.5 226v1M562.5 212v5M562.5 218v6M563.5 212v5M563.5 219v2M563.5 224v1M563.5 226v1M564.5 212v6M564.5 219v2M564.5 222v1M564.5 226v1M565.5 212v5M565.5 222v3M565.5 226v1M566.5 212v5M566.5 218v1M566.5 220v1M566.5 222v1M566.5 226v1M567.5 212v5M567.5 224v1M568.5 212v6M568.5 219v1M568.5 221v1M568.5 226v1M569.5 212v5M569.5 218v1M569.5 220v1M569.5 226v1M570.5 212v6M570.5 221v2M570.5 224v1M571.5 212v5M571.5 218v5M571.5 226v1M572.5 212v7M572.5 221v2M573.5 212v5M573.5 218v3M573.5 224v1M573.5 226v1M574.5 212v6M574.5 222v2M575.5 212v5M575.5 218v7M576.5 212v7M576.5 220v4M577.5 212v9M577.5 222v1M577.5 224v1M578.5 212v5M578.5 218v2M578.5 221v4M579.5 212v5M579.5 220v2M579.5 224v1M579.5 226v1M580.5 212v6M580.5 219v1M580.5 224v1M581.5 212v10M581.5 223v1M582.5 212v6M582.5 221v1M583.5 212v5M583.5 218v1M583.5 221v3M583.5 226v1M584.5 212v5M584.5 218v2M584.5 222v2M584.5 226v1M585.5 212v8M585.5 221v1M585.5 223v2M586.5 212v5M586.5 222v2M586.5 226v1M587.5 212v6M587.5 219v3M587.5 223v1M588.5 212v6M588.5 221v4M589.5 212v5M589.5 218v2M589.5 221v4M589.5 226v1M590.5 212v8M590.5 221v4M591.5 212v5M591.5 219v1M591.5 221v1M591.5 224v1M592.5 212v7M592.5 221v1M592.5 226v1M593.5 212v5M593.5 219v3M593.5 226v1M594.5 212v6M594.5 219v2M594.5 223v2M595.5 212v5M595.5 219v1M595.5 221v1M595.5 226v1M596.5 212v7M596.5 220v1M596.5 223v2M596.5 226v1M597.5 212v6M597.5 221v1M597.5 224v1M598.5 212v5M598.5 218v1M598.5 220v2M598.5 223v2M598.5 226v1M599.5 212v5M599.5 218v3M599.5 222v3M599.5 226v1M600.5 212v7M600.5 220v2M601.5 212v6M601.5 219v5M602.5 212v5M602.5 220v2M602.5 223v2M603.5 212v8M603.5 222v1M603.5 226v1M604.5 212v8M604.5 226v1M605.5 212v6M605.5 221v1M605.5 223v2M606.5 212v5M606.5 218v1M606.5 220v2M606.5 223v2M607.5 212v5M607.5 218v1M607.5 220v1M607.5 222v2M608.5 212v5M608.5 218v5M609.5 212v5M609.5 219v3M610.5 212v5M610.5 218v1M610.5 220v2M611.5 212v5M611.5 219v2M611.5 222v1M612.5 212v5M612.5 219v2M612.5 223v1M613.5 212v5M613.5 220v2M613.5 224v1M613.5 226v1M614.5 212v5M614.5 218v1M614.5 221v2M614.5 224v1M615.5 212v5M615.5 219v3M615.5 224v1M616.5 212v7M616.5 221v1M616.5 224v1M617.5 212v5M617.5 218v1M617.5 222v1M617.5 224v1M618.5 212v6M618.5 220v4M619.5 212v8M619.5 221v3M620.5 212v9M620.5 223v2M621.5 212v6M621.5 219v2M621.5 223v1M621.5 226v1M622.5 212v6M622.5 219v3M622.5 223v1M623.5 212v5M623.5 218v4M623.5 223v1M624.5 212v6M624.5 219v1M624.5 224v1M624.5 226v1M625.5 212v6M625.5 222v2M626.5 212v6M626.5 219v4M626.5 224v1M627.5 212v7M627.5 226v1M628.5 212v8M628.5 223v1M628.5 226v1M629.5 212v5M629.5 218v1M629.5 220v5M630.5 212v5M630.5 218v4M630.5 223v1M631.5 212v6M631.5 224v1M632.5 212v5M632.5 218v1M632.5 220v3M632.5 224v1M632.5 226v1M633.5 212v8M633.5 222v1M633.5 224v1M633.5 226v1M634.5 212v6M634.5 221v3M634.5 226v1M635.5 212v5M635.5 218v3M635.5 222v3M635.5 226v1M636.5 212v5M636.5 220v1M636.5 222v3M636.5 226v1M637.5 212v5M637.5 218v2M637.5 223v1M637.5 226v1M638.5 212v7M638.5 220v1M638.5 226v1M639.5 212v5M639.5 221v2M639.5 224v1M640.5 212v5M640.5 218v2M641.5 212v6M641.5 220v1M641.5 223v1M641.5 226v1M642.5 212v5M642.5 219v2M642.5 222v3M642.5 226v1M643.5 212v6M643.5 219v2M643.5 222v2M644.5 212v8M644.5 221v4M644.5 226v1M645.5 212v7M645.5 220v1M645.5 222v2M645.5 226v1M646.5 212v5M646.5 220v3M646.5 224v1M647.5 212v5M647.5 218v7M648.5 212v6M648.5 220v1M648.5 223v2M649.5 212v5M649.5 219v2M650.5 212v5M650.5 219v1M650.5 221v1M650.5 224v1M650.5 226v1M651.5 212v6M651.5 219v2M651.5 223v2M652.5 212v5M652.5 220v1M652.5 222v1M652.5 224v1M652.5 226v1M653.5 212v5M653.5 219v1M653.5 222v1M654.5 212v5M654.5 218v1M654.5 220v1M654.5 222v1M654.5 224v1M654.5 226v1M655.5 212v7M655.5 222v1M656.5 212v6M656.5 221v2M657.5 212v5M657.5 219v2M658.5 212v6M658.5 219v1M658.5 221v4M659.5 212v7M659.5 221v1M659.5 223v1M659.5 226v1M660.5 212v6M660.5 219v1M660.5 221v1M660.5 223v2M660.5 226v1M661.5 212v5M661.5 218v1M661.5 220v4M662.5 212v5M662.5 219v2M662.5 222v3M663.5 212v5M663.5 218v3M663.5 222v3M663.5 226v1M664.5 212v5M664.5 219v1M664.5 221v4M664.5 226v1M665.5 212v5M665.5 218v1M665.5 221v3M666.5 212v5M666.5 219v4M666.5 224v1M666.5 226v1M667.5 212v5M667.5 219v2M667.5 222v2M667.5 226v1M668.5 212v5M668.5 221v2M669.5 212v6M669.5 221v1M669.5 224v1M670.5 212v5M670.5 219v3M670.5 224v1M670.5 226v1M671.5 212v5M671.5 218v1M671.5 220v1M671.5 222v1M671.5 224v1M672.5 212v7M672.5 220v2M672.5 224v1M673.5 212v5M673.5 218v1M674.5 212v6M674.5 222v1M674.5 224v1M675.5 212v7M675.5 221v2M676.5 212v5M676.5 220v2M676.5 223v2M677.5 212v5M677.5 219v2M677.5 224v1M678.5 212v5M678.5 218v4M678.5 224v1M679.5 212v6M679.5 219v3M679.5 223v2M679.5 226v1M680.5 212v5M680.5 218v4M680.5 223v2M680.5 226v1M681.5 212v5M681.5 220v1M681.5 223v1M681.5 226v1M682.5 212v5M682.5 218v2M682.5 221v2M682.5 224v1M683.5 212v7M684.5 212v5M684.5 221v2"/><path stroke="#bcbc00" d="M84.5 219v68M85.5 219v7M85.5 227v31M85.5 259v25M85.5 285v1M86.5 219v2M86.5 282v1M87.5 219v21M87.5 241v45M88.5 219v31M89.5 219v66M90.5 219v65M91.5 219v18M92.5 219v16M93.5 219v66M94.5 219v34M94.5 254v29M94.5 284v2M95.5 219v44M95.5 264v21M95.5 286v1M96.5 219v25M97.5 219v68M98.5 219v8M99.5 219v33M99.5 253v31M99.5 288v1M100.5 219v65M101.5 219v3M101.5 223v60M101.5 285v1M102.5 219v21M103.5 219v48M103.5 268v15M103.5 284v2M104.5 219v35M104.5 255v29M105.5 219v12M105.5 232v51M105.5 284v2M106.5 219v18M106.5 238v45M106.5 285v1M107.5 219v35M107.5 255v31M108.5 219v14M108.5 234v38M108.5 273v10M108.5 284v2M109.5 219v24M109.5 244v39M109.5 284v1M110.5 219v66M111.5 219v66M112.5 219v17M112.5 237v1M113.5 219v64M113.5 285v1M114.5 219v38M115.5 219v66M116.5 219v17M116.5 237v45M116.5 283v2M116.5 286v1M117.5 219v1M117.5 221v2M118.5 219v28M118.5 248v36M118.5 285v1M119.5 219v23M119.5 243v39M119.5 283v1M119.5 285v2M120.5 219v37M120.5 257v27M121.5 219v37M121.5 257v12M121.5 270v14M122.5 219v55M122.5 275v9M123.5 219v8M124.5 219v23M125.5 219v7M125.5 227v17M125.5 245v38M125.5 284v1M126.5 219v29M126.5 249v36M127.5 219v15M127.5 235v12M127.5 248v36M128.5 219v2M128.5 222v12M129.5 219v63M129.5 283v2M130.5 219v17M131.5 219v4M132.5 219v31M132.5 251v34M133.5 219v28M133.5 248v37M134.5 219v49M134.5 269v14M135.5 219v63M135.5 283v2M136.5 219v33M136.5 253v32M137.5 219v48M137.5 268v15M137.5 285v2M138.5 219v5M138.5 225v62M139.5 219v64M139.5 284v2M140.5 219v50M140.5 270v6M140.5 277v7M140.5 285v1M141.5 219v65M142.5 219v19M143.5 219v28M144.5 219v67M144.5 287v1M145.5 219v64M145.5 284v2M145.5 287v1M146.5 219v66M147.5 219v52M147.5 272v5M147.5 278v4M147.5 283v2M148.5 219v64M148.5 284v1M149.5 219v31M149.5 251v32M149.5 285v1M150.5 219v17M151.5 219v10M152.5 219v9M152.5 229v55M153.5 219v32M153.5 252v32M153.5 285v2M154.5 219v49M154.5 269v14M154.5 285v1M155.5 219v14M155.5 234v48M155.5 284v2M156.5 219v49M156.5 269v17M157.5 219v41M157.5 261v24M158.5 219v7M158.5 227v16M159.5 219v45M159.5 265v21M159.5 287v1M160.5 219v38M161.5 219v39M161.5 259v26M162.5 219v64M163.5 219v4M164.5 219v27M165.5 219v10M165.5 282v1M166.5 219v3M166.5 223v13M167.5 219v64M167.5 284v1M168.5 219v18M168.5 238v8M169.5 219v65M169.5 285v1M170.5 219v16M171.5 219v66M171.5 287v1M172.5 219v15M172.5 235v48M172.5 285v1M173.5 219v9M173.5 229v1M173.5 231v53M174.5 219v15M175.5 219v4M175.5 224v61M176.5 219v25M177.5 219v63M177.5 283v2M178.5 219v57M178.5 277v8M179.5 219v30M179.5 250v35M180.5 219v65M180.5 286v1M181.5 219v5M181.5 225v8M181.5 234v52M182.5 219v16M183.5 219v38M184.5 219v47M184.5 267v17M184.5 285v1M185.5 219v65M186.5 219v64M186.5 284v1M187.5 219v65M187.5 285v1M188.5 219v3M189.5 219v14M189.5 234v32M189.5 267v20M190.5 219v4M190.5 224v21M191.5 219v11M191.5 231v53M191.5 287v1M192.5 219v8M193.5 219v24M193.5 283v1M194.5 219v19M195.5 219v15M196.5 219v23M197.5 219v42M197.5 262v24M198.5 219v66M199.5 219v12M199.5 232v51M199.5 285v1M200.5 219v65M200.5 285v1M201.5 220v6M202.5 219v64M202.5 284v2M203.5 219v31M203.5 251v33M204.5 219v40M204.5 260v1M204.5 262v23M204.5 286v1M205.5 219v31M205.5 251v34M206.5 219v64M206.5 284v2M207.5 219v19M208.5 219v32M208.5 283v1M209.5 219v38M209.5 258v27M210.5 219v26M210.5 246v36M210.5 283v3M211.5 219v47M211.5 267v19M212.5 219v21M213.5 219v5M213.5 225v59M213.5 286v1M214.5 219v63M214.5 283v4M215.5 219v18M215.5 238v10M216.5 219v1M216.5 221v64M217.5 219v23M218.5 219v16M218.5 236v48M219.5 219v26M220.5 219v66M221.5 219v33M222.5 219v21M222.5 241v45M223.5 219v65M223.5 285v1M224.5 219v57M224.5 277v8M225.5 219v38M225.5 258v27M226.5 219v6M227.5 219v21M228.5 219v19M228.5 239v45M229.5 219v10M229.5 230v54M230.5 219v1M231.5 220v31M232.5 220v37M232.5 282v1M233.5 220v64M234.5 220v3M234.5 224v61M234.5 287v1M235.5 221v64M236.5 221v35M236.5 257v28M237.5 221v30M237.5 252v33M238.5 221v18M238.5 240v4M238.5 245v39M238.5 286v1M239.5 221v24M239.5 246v13M239.5 260v25M239.5 287v1M240.5 222v35M240.5 258v25M240.5 285v1M241.5 222v27M242.5 222v61M242.5 288v1M243.5 222v6M243.5 229v23M244.5 222v20M244.5 243v44M245.5 223v10M245.5 234v2M246.5 223v33M247.5 223v41M247.5 265v19M247.5 286v1M248.5 223v38M248.5 262v21M248.5 285v1M249.5 224v24M249.5 249v14M250.5 224v3M250.5 228v58M252.5 224v23M253.5 224v3M253.5 228v57M254.5 225v58M254.5 284v1M254.5 287v1M255.5 225v13M256.5 225v13M256.5 239v12M257.5 225v33M257.5 259v24M257.5 285v1M258.5 225v62M259.5 226v2M260.5 226v9M261.5 226v53M261.5 280v3M261.5 284v1M262.5 226v17M262.5 244v39M262.5 284v3M263.5 227v27M263.5 255v28M263.5 284v1M264.5 227v58M265.5 227v16M265.5 244v38M265.5 283v2M265.5 286v1M266.5 227v27M267.5 227v57M267.5 285v1M268.5 227v59M269.5 227v15M269.5 243v18M269.5 262v21M270.5 227v42M270.5 270v13M270.5 285v1M271.5 227v55M271.5 283v1M271.5 285v1M272.5 227v59M272.5 287v1M273.5 227v30M273.5 258v25M274.5 227v59M275.5 227v20M276.5 227v34M277.5 227v3M277.5 282v1M278.5 227v21M278.5 249v8M279.5 227v58M280.5 227v43M280.5 271v15M281.5 227v47M281.5 275v3M281.5 279v6M281.5 286v2M282.5 227v46M282.5 274v10M282.5 285v2M283.5 227v57M284.5 227v59M285.5 227v59M286.5 227v11M286.5 239v43M287.5 227v14M288.5 227v30M288.5 258v25M288.5 286v1M289.5 227v26M289.5 254v5M290.5 227v22M291.5 227v28M292.5 227v58M292.5 287v1M293.5 227v32M294.5 227v11M294.5 239v13M294.5 253v32M295.5 227v27M295.5 255v29M296.5 227v13M296.5 241v44M297.5 227v10M298.5 227v1M299.5 227v31M299.5 259v25M299.5 285v1M300.5 227v1M300.5 229v5M300.5 235v50M300.5 287v1M301.5 227v58M302.5 227v58M302.5 286v1M303.5 227v21M303.5 249v37M303.5 287v1M304.5 227v16M305.5 227v32M306.5 227v5M307.5 227v15M307.5 243v22M307.5 266v17M308.5 227v59M309.5 227v4M309.5 232v51M309.5 284v2M310.5 227v29M311.5 227v57M311.5 286v1M312.5 227v32M313.5 227v57M313.5 285v1M313.5 288v1M314.5 227v58M315.5 227v3M315.5 231v43M315.5 275v8M316.5 227v13M316.5 241v42M316.5 284v2M317.5 227v56M317.5 285v1M318.5 227v7M318.5 236v49M319.5 227v26M319.5 254v31M319.5 286v1M320.5 227v58M321.5 227v14M321.5 242v41M322.5 227v25M322.5 253v31M323.5 227v57M324.5 227v58M324.5 286v1M325.5 227v57M326.5 227v58M327.5 227v47M327.5 275v11M328.5 227v50M328.5 278v7M329.5 227v55M329.5 283v2M329.5 287v1M330.5 227v57M330.5 285v1M331.5 227v56M331.5 285v3M332.5 227v12M332.5 240v18M332.5 259v27M332.5 287v1M333.5 227v16M334.5 227v57M334.5 285v1M335.5 227v57M335.5 285v1M336.5 227v20M336.5 248v18M336.5 267v18M337.5 227v45M337.5 273v5M337.5 279v4M338.5 227v19M338.5 247v14M339.5 227v12M339.5 240v12M339.5 253v30M339.5 284v1M339.5 286v1M340.5 227v56M340.5 284v1M341.5 227v30M341.5 258v28M342.5 227v56M342.5 284v1M343.5 227v1M343.5 230v11M343.5 282v1M344.5 227v30M345.5 227v35M345.5 263v21M345.5 285v1M346.5 227v57M346.5 285v1M347.5 227v40M347.5 268v15M348.5 227v25M349.5 227v5M350.5 227v6M350.5 234v49M350.5 284v1M351.5 227v9M351.5 237v46M351.5 286v1M352.5 227v27M352.5 284v1M353.5 227v20M353.5 248v36M353.5 285v1M354.5 227v9M354.5 237v48M354.5 286v1M355.5 227v4M355.5 232v53M356.5 227v59M356.5 288v1M357.5 227v57M358.5 227v49M358.5 277v7M358.5 285v2M359.5 227v50M359.5 278v7M360.5 227v57M361.5 227v21M361.5 249v26M361.5 276v7M361.5 287v1M362.5 227v16M363.5 227v58M364.5 227v45M364.5 273v11M365.5 227v27M365.5 255v11M365.5 267v19M366.5 227v59M367.5 227v21M367.5 249v35M368.5 227v1M369.5 227v56M369.5 287v1M370.5 227v55M370.5 283v4M371.5 227v7M371.5 235v50M371.5 286v1M372.5 227v56M372.5 286v2M373.5 227v30M373.5 258v2M374.5 227v34M375.5 228v55M376.5 227v36M376.5 264v20M376.5 285v2M377.5 227v29M378.5 227v16M378.5 244v39M378.5 284v1M379.5 227v14M379.5 242v40M379.5 283v2M379.5 287v1M380.5 227v56M380.5 284v2M381.5 227v13M382.5 227v58M383.5 227v6M383.5 234v28M383.5 283v1M384.5 227v22M384.5 250v36M385.5 227v7M386.5 227v58M387.5 227v10M387.5 238v49M388.5 227v57M389.5 227v1M390.5 227v56M390.5 284v2M390.5 287v1M391.5 227v15M391.5 243v42M392.5 227v34M392.5 262v8M392.5 271v13M393.5 227v9M393.5 237v7M394.5 227v10M395.5 227v4M396.5 227v19M397.5 227v15M397.5 243v40M397.5 284v1M398.5 227v57M399.5 227v55M399.5 283v1M399.5 289v1M400.5 227v3M401.5 227v59M402.5 227v24M402.5 252v32M403.5 227v21M404.5 227v17M405.5 227v57M406.5 227v60M407.5 227v59M407.5 287v1M408.5 227v59M409.5 227v56M409.5 285v1M410.5 228v29M411.5 227v25M411.5 253v21M411.5 275v8M411.5 284v1M411.5 286v1M412.5 227v4M413.5 227v56M413.5 284v2M414.5 227v5M414.5 233v52M415.5 227v57M416.5 227v23M417.5 227v15M417.5 243v17M417.5 261v23M418.5 227v20M418.5 283v1M419.5 227v56M419.5 284v1M420.5 227v35M420.5 263v22M420.5 286v1M421.5 227v57M421.5 285v1M423.5 227v10M424.5 227v16M424.5 244v42M425.5 227v14M426.5 227v45M426.5 273v11M426.5 285v1M427.5 227v58M428.5 227v5M428.5 233v8M428.5 242v43M428.5 286v1M430.5 227v56M430.5 284v2M431.5 227v36M432.5 227v27M433.5 227v45M433.5 273v11M434.5 227v1M434.5 229v55M435.5 227v55M435.5 283v1M436.5 227v21M436.5 249v35M436.5 285v2M437.5 227v7M437.5 235v4M438.5 227v45M438.5 273v14M439.5 227v37M440.5 227v8M440.5 236v4M441.5 227v58M442.5 227v8M442.5 236v46M442.5 283v2M443.5 227v37M443.5 265v7M443.5 273v12M443.5 286v1M444.5 227v45M444.5 273v14M445.5 227v57M445.5 285v2M446.5 227v15M447.5 227v3M447.5 231v5M447.5 237v45M447.5 283v3M448.5 227v23M448.5 251v32M448.5 284v2M449.5 227v15M449.5 243v10M450.5 227v15M450.5 243v43M451.5 227v24M452.5 227v4M452.5 232v55M453.5 227v57M453.5 285v1M454.5 227v1M455.5 227v30M455.5 258v8M455.5 267v18M456.5 227v39M456.5 267v16M456.5 284v1M456.5 286v1M457.5 227v58M458.5 227v27M458.5 255v28M458.5 287v1M459.5 227v22M459.5 250v35M460.5 227v55M460.5 283v3M461.5 227v59M462.5 227v57M463.5 227v41M463.5 269v16M464.5 227v26M464.5 254v30M465.5 227v42M465.5 270v15M466.5 227v13M466.5 241v34M466.5 276v8M466.5 285v1M467.5 227v19M467.5 247v35M467.5 283v1M468.5 227v2M468.5 230v57M469.5 227v19M470.5 227v49M470.5 277v7M471.5 227v15M471.5 243v41M472.5 227v57M472.5 287v1M473.5 227v1M473.5 229v3M473.5 233v52M474.5 227v24M475.5 227v58M476.5 227v44M476.5 272v13M476.5 286v1M477.5 227v22M477.5 251v34M478.5 227v27M478.5 255v30M479.5 227v4M479.5 232v14M480.5 227v24M480.5 252v30M480.5 283v2M480.5 286v1M481.5 227v22M481.5 250v35M482.5 227v10M482.5 238v44M482.5 283v2M482.5 286v1M483.5 227v58M484.5 227v5M484.5 233v43M484.5 277v6M484.5 284v1M485.5 227v7M485.5 235v49M486.5 227v19M487.5 227v11M487.5 239v43M487.5 283v1M487.5 285v1M488.5 227v2M488.5 230v54M488.5 285v1M489.5 227v14M489.5 242v8M490.5 227v40M490.5 268v15M490.5 286v1M491.5 227v8M492.5 227v41M492.5 269v16M492.5 286v1M493.5 227v36M494.5 227v15M494.5 243v43M495.5 227v23M496.5 227v5M497.5 227v58M498.5 227v56M499.5 227v48M499.5 276v8M499.5 285v1M500.5 227v57M501.5 227v39M501.5 267v17M501.5 286v1M502.5 227v35M503.5 227v27M503.5 255v29M503.5 285v1M504.5 227v24M505.5 227v18M506.5 227v21M506.5 249v35M507.5 227v56M508.5 227v12M508.5 240v18M508.5 259v23M508.5 283v1M508.5 286v1M509.5 227v6M509.5 234v50M509.5 286v1M510.5 227v22M511.5 227v40M511.5 268v11M511.5 280v2M511.5 283v3M512.5 227v58M513.5 227v56M513.5 284v2M513.5 288v1M514.5 227v36M515.5 227v47M515.5 275v9M515.5 285v1M515.5 287v1M516.5 227v45M516.5 273v12M516.5 288v1M517.5 227v51M517.5 279v6M517.5 286v1M518.5 227v59M518.5 287v1M519.5 227v27M519.5 282v1M520.5 227v22M521.5 227v19M521.5 247v28M521.5 276v8M522.5 227v1M522.5 282v1M523.5 227v34M523.5 262v23M524.5 227v17M524.5 245v6M525.5 227v18M526.5 227v8M527.5 227v23M527.5 251v24M527.5 276v8M528.5 227v9M529.5 227v16M529.5 244v39M529.5 284v1M530.5 227v22M531.5 227v13M532.5 227v7M532.5 235v40M532.5 276v7M532.5 284v1M533.5 227v57M534.5 227v12M534.5 240v45M535.5 227v23M535.5 251v25M535.5 277v8M536.5 227v1M536.5 229v56M536.5 286v1M536.5 288v1M537.5 227v29M537.5 257v28M538.5 227v24M538.5 252v30M538.5 283v2M539.5 227v16M540.5 227v56M540.5 284v1M541.5 227v23M541.5 251v5M541.5 282v1M542.5 227v10M542.5 238v45M542.5 284v1M543.5 227v21M543.5 249v12M544.5 227v38M545.5 227v15M545.5 284v1M546.5 227v59M547.5 227v2M547.5 230v54M547.5 285v1M548.5 227v30M548.5 258v27M548.5 288v1M549.5 227v56M549.5 284v2M550.5 227v58M551.5 227v38M551.5 266v18M551.5 287v1M552.5 227v12M552.5 240v45M553.5 227v22M554.5 227v20M554.5 248v29M554.5 278v4M554.5 283v2M554.5 286v1M555.5 227v22M555.5 250v9M555.5 260v24M556.5 227v60M557.5 227v29M557.5 282v1M558.5 227v5M558.5 233v24M558.5 258v24M558.5 284v2M559.5 228v36M559.5 265v18M559.5 284v1M560.5 227v58M560.5 288v1M561.5 227v56M561.5 284v1M562.5 227v58M563.5 227v5M564.5 227v26M564.5 254v29M564.5 284v1M565.5 227v7M565.5 235v49M566.5 227v56M567.5 227v27M567.5 255v11M568.5 227v49M568.5 277v5M568.5 284v2M569.5 227v57M569.5 286v1M570.5 227v1M571.5 227v47M571.5 275v8M571.5 285v1M572.5 227v27M572.5 255v29M573.5 227v25M573.5 253v32M574.5 227v56M575.5 227v58M576.5 227v2M577.5 227v56M577.5 284v2M578.5 227v30M579.5 227v3M579.5 231v54M579.5 286v1M580.5 227v35M580.5 263v20M580.5 284v2M581.5 227v18M581.5 246v38M581.5 285v1M582.5 227v57M582.5 285v2M583.5 227v25M584.5 227v21M585.5 227v13M585.5 241v33M585.5 275v10M586.5 227v26M586.5 254v31M586.5 286v1M587.5 227v56M587.5 284v1M588.5 227v17M588.5 245v37M588.5 283v3M589.5 227v57M590.5 227v26M591.5 227v2M591.5 283v1M592.5 227v21M592.5 249v34M592.5 284v2M593.5 227v2M593.5 230v15M594.5 227v26M594.5 254v30M595.5 227v56M595.5 284v1M596.5 227v41M596.5 269v14M597.5 227v2M597.5 230v54M597.5 287v1M598.5 227v37M598.5 265v20M598.5 286v1M599.5 227v55M599.5 283v2M599.5 286v1M600.5 227v34M601.5 227v19M601.5 247v37M602.5 227v36M602.5 264v22M603.5 228v9M603.5 238v46M604.5 227v3M604.5 231v54M605.5 227v59M605.5 288v1M606.5 227v12M606.5 240v46M607.5 227v59M608.5 227v2M608.5 230v23M608.5 254v28M608.5 284v1M609.5 227v57M610.5 227v26M610.5 255v28M610.5 284v2M611.5 227v56M611.5 284v1M612.5 227v38M612.5 267v16M614.5 227v7M615.5 227v58M616.5 227v5M616.5 233v30M617.5 227v57M618.5 227v56M618.5 284v2M619.5 227v4M619.5 232v51M619.5 285v1M620.5 227v21M620.5 249v35M620.5 285v1M620.5 287v1M621.5 227v22M621.5 250v33M621.5 285v1M621.5 289v1M622.5 227v20M623.5 227v43M623.5 271v13M623.5 285v1M624.5 227v57M624.5 287v1M625.5 227v58M626.5 227v48M626.5 276v9M627.5 227v10M627.5 238v13M627.5 252v32M628.5 227v36M628.5 264v20M628.5 286v1M629.5 227v23M629.5 251v10M629.5 262v22M629.5 286v1M630.5 227v59M631.5 227v43M631.5 271v12M631.5 284v1M632.5 227v22M632.5 283v1M633.5 227v12M634.5 227v22M635.5 227v23M635.5 251v32M635.5 284v2M636.5 227v12M636.5 240v45M637.5 227v7M637.5 235v49M638.5 227v23M638.5 251v11M638.5 263v20M638.5 284v1M639.5 227v8M639.5 236v2M640.5 227v19M640.5 247v20M640.5 268v15M640.5 284v1M641.5 227v56M641.5 284v2M642.5 227v3M642.5 231v17M642.5 249v37M643.5 227v57M644.5 227v57M644.5 288v1M645.5 227v58M645.5 286v1M646.5 227v31M646.5 259v24M646.5 284v2M647.5 227v3M648.5 227v30M649.5 227v51M649.5 279v6M650.5 227v57M650.5 286v1M651.5 227v19M651.5 247v37M652.5 227v35M652.5 263v21M652.5 286v1M653.5 227v57M653.5 285v2M654.5 227v18M654.5 246v38M655.5 227v3M655.5 231v13M655.5 282v1M656.5 227v33M656.5 261v23M656.5 285v3M657.5 227v56M657.5 284v1M657.5 286v1M658.5 227v19M659.5 227v12M659.5 240v23M659.5 264v20M659.5 285v2M660.5 227v52M660.5 280v4M660.5 285v1M661.5 227v58M662.5 227v59M663.5 282v1M664.5 227v57M665.5 227v4M665.5 232v12M665.5 283v1M666.5 227v50M666.5 278v6M667.5 227v55M667.5 283v2M668.5 227v12M669.5 227v58M670.5 227v56M670.5 284v1M671.5 227v19M671.5 284v1M672.5 227v58M672.5 287v2M673.5 227v57M673.5 285v1M674.5 227v18M675.5 227v3M675.5 231v55M676.5 227v58M677.5 227v56M677.5 284v1M678.5 227v6M678.5 234v49M678.5 286v1M679.5 227v56M679.5 284v2M680.5 227v6M680.5 234v50M680.5 286v1M681.5 227v15M681.5 282v1M682.5 227v43M682.5 271v13M682.5 286v1M683.5 227v6M683.5 234v49M683.5 287v1M684.5 227v3"/><path stroke="#c6c600" d="M84.5 287v1M84.5 289v2M85.5 284v1M85.5 286v3M85.5 292v1M87.5 287v1M87.5 290v1M87.5 305v1M88.5 282v1M88.5 284v2M88.5 287v1M88.5 305v1M89.5 285v4M89.5 290v2M90.5 284v5M91.5 282v1M91.5 284v2M92.5 285v2M93.5 285v5M94.5 283v1M94.5 286v2M94.5 289v2M95.5 285v1M95.5 287v2M95.5 290v1M96.5 282v1M96.5 284v2M96.5 305v1M97.5 287v2M98.5 283v1M99.5 284v4M99.5 289v1M100.5 284v5M101.5 283v2M101.5 286v5M102.5 282v5M103.5 283v1M103.5 286v1M103.5 288v2M104.5 284v6M105.5 283v1M105.5 286v4M106.5 283v2M106.5 286v3M107.5 286v5M107.5 305v1M108.5 283v1M108.5 286v1M108.5 289v3M109.5 283v1M109.5 285v4M109.5 290v1M110.5 285v4M111.5 285v2M111.5 288v1M111.5 290v1M112.5 282v3M112.5 286v1M113.5 283v2M113.5 286v2M113.5 289v2M113.5 305v1M114.5 282v1M114.5 284v1M115.5 285v3M115.5 292v1M116.5 282v1M116.5 287v1M116.5 289v2M117.5 282v4M118.5 284v1M118.5 286v3M118.5 290v1M119.5 282v1M119.5 284v1M119.5 287v2M119.5 305v1M120.5 284v8M120.5 305v1M121.5 284v6M122.5 284v5M123.5 283v2M124.5 282v1M124.5 284v2M125.5 283v1M125.5 285v5M125.5 291v1M125.5 305v1M126.5 285v4M126.5 305v1M127.5 284v4M127.5 289v2M128.5 282v1M129.5 282v1M129.5 285v1M129.5 287v1M129.5 290v1M129.5 292v1M129.5 305v1M130.5 282v1M131.5 282v4M132.5 285v4M133.5 285v7M134.5 283v6M135.5 282v1M135.5 285v5M136.5 285v4M136.5 290v1M137.5 283v2M137.5 287v4M138.5 287v1M138.5 289v2M139.5 283v1M139.5 286v4M140.5 284v1M140.5 286v2M140.5 289v1M141.5 284v4M141.5 290v1M142.5 282v3M143.5 282v2M144.5 286v1M144.5 289v1M144.5 305v1M145.5 283v1M145.5 286v1M145.5 288v1M145.5 290v1M145.5 292v1M146.5 285v3M147.5 282v1M147.5 285v5M148.5 283v1M148.5 285v3M148.5 305v1M149.5 283v2M149.5 286v2M150.5 283v3M150.5 287v1M151.5 282v2M152.5 284v7M152.5 305v1M153.5 284v1M154.5 283v2M154.5 286v2M155.5 282v2M155.5 286v4M156.5 286v3M156.5 290v1M156.5 305v1M157.5 285v3M157.5 289v1M158.5 282v2M159.5 286v1M159.5 288v2M159.5 291v1M160.5 282v2M161.5 285v3M162.5 283v5M162.5 292v1M162.5 305v1M163.5 282v4M163.5 305v1M164.5 282v4M165.5 283v1M165.5 285v2M166.5 282v1M166.5 284v1M167.5 283v1M167.5 285v2M167.5 288v2M167.5 305v1M168.5 282v1M168.5 284v1M168.5 286v1M169.5 284v1M169.5 286v2M169.5 290v1M170.5 282v2M170.5 285v1M170.5 288v1M171.5 285v2M172.5 283v2M172.5 286v2M172.5 289v1M173.5 284v4M173.5 290v1M173.5 293v1M174.5 282v1M175.5 285v2M175.5 289v1M175.5 291v1M175.5 305v1M176.5 282v3M177.5 282v1M177.5 285v5M178.5 285v4M178.5 291v1M179.5 285v4M179.5 305v1M180.5 284v2M180.5 288v1M180.5 290v1M181.5 286v4M181.5 293v1M182.5 282v3M182.5 286v1M183.5 282v2M184.5 284v1M184.5 286v5M185.5 284v6M186.5 283v1M186.5 285v2M187.5 284v1M187.5 286v5M188.5 283v3M189.5 287v2M189.5 290v1M190.5 282v2M190.5 285v1M191.5 284v1M191.5 286v1M192.5 282v2M192.5 305v1M193.5 282v1M194.5 282v3M194.5 305v1M195.5 282v1M195.5 285v1M196.5 282v1M196.5 284v1M197.5 287v3M197.5 291v1M198.5 285v2M198.5 288v2M199.5 283v2M199.5 286v1M199.5 288v1M199.5 291v1M200.5 284v1M200.5 286v2M200.5 290v1M201.5 282v1M202.5 283v1M202.5 286v5M202.5 305v1M203.5 284v4M203.5 289v1M203.5 291v1M204.5 285v1M204.5 287v2M205.5 285v5M205.5 305v1M206.5 283v1M206.5 286v1M206.5 288v4M206.5 305v1M207.5 282v2M207.5 287v1M208.5 282v1M208.5 284v1M209.5 285v2M209.5 288v1M209.5 305v1M210.5 282v1M210.5 286v4M210.5 291v1M211.5 286v2M211.5 289v2M212.5 282v4M212.5 287v2M213.5 284v2M213.5 287v2M214.5 282v1M214.5 287v2M214.5 290v1M214.5 305v1M215.5 282v1M215.5 285v1M216.5 285v2M216.5 288v2M216.5 291v1M217.5 282v2M217.5 285v1M217.5 305v1M218.5 284v5M219.5 282v2M219.5 305v1M220.5 285v4M221.5 282v3M222.5 286v2M223.5 284v1M223.5 286v2M223.5 289v1M224.5 285v3M225.5 285v4M226.5 283v1M226.5 285v1M227.5 282v3M228.5 284v6M229.5 284v4M230.5 282v4M231.5 282v2M232.5 283v2M233.5 284v4M234.5 285v2M234.5 290v1M234.5 294v1M234.5 305v1M235.5 285v5M235.5 291v1M236.5 285v4M237.5 285v5M237.5 291v1M238.5 284v2M238.5 287v2M238.5 291v1M239.5 285v2M239.5 289v1M239.5 305v1M240.5 283v2M240.5 286v1M240.5 291v1M241.5 283v1M242.5 283v3M242.5 287v1M243.5 282v5M244.5 305v1M245.5 282v3M246.5 282v3M246.5 305v1M247.5 284v2M247.5 287v1M247.5 291v2M248.5 283v2M248.5 286v5M248.5 305v1M249.5 282v2M249.5 285v1M250.5 286v5M251.5 282v4M252.5 282v1M252.5 284v2M253.5 285v3M253.5 289v3M253.5 305v1M254.5 283v1M254.5 285v2M254.5 289v2M255.5 282v3M255.5 286v1M256.5 282v2M256.5 285v1M257.5 283v2M257.5 286v3M257.5 292v1M258.5 287v5M258.5 305v1M259.5 282v2M259.5 286v1M259.5 305v1M260.5 282v1M261.5 283v1M261.5 285v4M261.5 290v2M262.5 283v1M262.5 287v2M262.5 291v1M263.5 283v1M263.5 285v6M263.5 305v1M264.5 285v4M264.5 291v2M265.5 282v1M265.5 285v1M265.5 287v3M265.5 291v1M266.5 282v3M266.5 287v1M267.5 284v1M267.5 286v4M267.5 305v1M268.5 286v2M268.5 290v2M268.5 305v1M269.5 283v5M269.5 289v1M270.5 283v2M270.5 286v4M271.5 282v1M271.5 284v1M271.5 286v2M271.5 289v1M271.5 305v1M272.5 286v1M272.5 289v1M273.5 283v1M273.5 285v1M273.5 288v2M274.5 286v3M274.5 305v1M275.5 282v3M276.5 282v4M276.5 305v1M277.5 283v2M277.5 305v1M278.5 283v1M279.5 285v6M280.5 286v3M280.5 305v1M281.5 285v1M281.5 288v2M281.5 305v1M282.5 284v1M282.5 287v3M282.5 293v1M283.5 284v4M283.5 289v1M283.5 305v1M284.5 286v3M285.5 287v1M285.5 289v2M286.5 282v7M286.5 290v2M287.5 282v3M288.5 283v3M288.5 287v1M288.5 289v2M289.5 283v1M290.5 282v1M291.5 282v1M292.5 285v2M293.5 283v1M293.5 286v1M294.5 285v3M294.5 292v1M294.5 305v1M295.5 284v5M295.5 290v2M295.5 305v1M296.5 285v6M296.5 305v1M297.5 282v1M297.5 284v1M298.5 282v3M299.5 286v2M299.5 291v1M299.5 305v1M300.5 285v2M300.5 288v3M301.5 285v4M302.5 285v1M302.5 287v3M303.5 286v1M303.5 288v3M303.5 305v1M304.5 282v2M305.5 282v4M306.5 282v3M307.5 283v7M307.5 305v1M308.5 286v2M308.5 289v2M308.5 305v1M309.5 283v1M309.5 286v4M309.5 291v1M310.5 282v1M310.5 284v1M310.5 287v1M311.5 284v2M311.5 287v4M312.5 282v1M313.5 284v1M313.5 286v2M313.5 289v1M314.5 285v3M314.5 289v1M314.5 305v1M315.5 283v8M316.5 283v1M316.5 286v1M316.5 288v1M316.5 290v1M316.5 294v1M316.5 305v1M317.5 283v2M317.5 286v2M317.5 289v3M318.5 285v3M318.5 292v1M319.5 285v1M319.5 287v3M319.5 305v1M320.5 285v4M320.5 290v1M321.5 283v8M321.5 305v1M322.5 284v5M323.5 284v6M324.5 285v1M324.5 287v5M325.5 284v6M326.5 285v2M326.5 288v2M327.5 286v4M328.5 285v2M328.5 288v2M329.5 282v1M329.5 285v2M329.5 288v2M329.5 305v1M330.5 284v1M330.5 286v4M331.5 283v2M331.5 288v3M331.5 292v1M332.5 305v1M333.5 283v2M334.5 284v1M334.5 286v1M334.5 288v1M334.5 291v1M335.5 284v1M335.5 287v3M336.5 285v4M337.5 283v5M337.5 289v2M337.5 305v1M338.5 282v2M338.5 305v1M339.5 283v1M339.5 285v1M339.5 287v3M339.5 291v1M340.5 283v1M340.5 285v5M340.5 305v1M341.5 286v2M341.5 290v1M341.5 305v1M342.5 283v1M342.5 285v6M342.5 305v1M343.5 283v2M343.5 305v1M344.5 282v2M345.5 284v1M345.5 286v1M345.5 288v2M345.5 305v1M346.5 284v1M346.5 286v3M346.5 305v1M347.5 283v6M348.5 282v3M349.5 282v4M350.5 283v1M350.5 285v4M350.5 290v2M350.5 305v1M351.5 283v2M351.5 287v1M352.5 282v1M352.5 285v1M352.5 305v1M353.5 284v1M353.5 286v1M353.5 291v1M354.5 285v1M354.5 287v4M354.5 292v1M355.5 285v3M355.5 289v1M356.5 286v2M357.5 284v4M357.5 291v1M358.5 284v1M358.5 287v2M358.5 305v1M359.5 285v4M359.5 305v1M360.5 284v1M360.5 286v3M360.5 291v1M361.5 283v2M361.5 286v1M362.5 282v2M362.5 286v1M362.5 305v1M363.5 285v5M363.5 305v1M364.5 284v4M364.5 290v1M365.5 286v2M365.5 289v1M366.5 286v3M367.5 284v5M367.5 291v1M368.5 282v2M368.5 285v1M369.5 283v4M369.5 288v1M369.5 292v1M370.5 282v1M370.5 287v3M371.5 285v1M371.5 287v2M372.5 283v3M372.5 290v2M372.5 305v1M373.5 282v3M374.5 282v3M375.5 283v5M375.5 289v1M375.5 292v1M376.5 284v1M376.5 287v3M376.5 305v1M377.5 282v1M377.5 286v1M378.5 283v1M378.5 285v6M378.5 292v1M379.5 282v1M379.5 285v2M379.5 288v1M379.5 291v2M380.5 283v1M380.5 286v2M381.5 282v2M381.5 285v1M382.5 285v1M382.5 287v2M383.5 282v1M384.5 286v3M384.5 290v1M385.5 282v6M386.5 285v4M386.5 290v1M387.5 287v4M388.5 284v5M388.5 291v1M389.5 282v1M390.5 283v1M390.5 286v1M390.5 288v1M391.5 285v6M392.5 284v3M392.5 289v1M392.5 305v1M393.5 283v2M393.5 287v1M394.5 282v3M395.5 282v4M396.5 282v4M397.5 283v1M397.5 285v3M397.5 289v3M398.5 284v6M398.5 292v1M399.5 282v1M399.5 284v5M399.5 291v1M400.5 282v3M400.5 286v2M401.5 286v3M401.5 290v1M402.5 284v7M403.5 282v2M403.5 285v2M404.5 282v3M404.5 305v1M405.5 284v4M405.5 290v2M406.5 287v1M406.5 289v1M407.5 288v1M408.5 286v2M408.5 289v3M409.5 283v2M409.5 286v5M410.5 282v3M411.5 283v1M411.5 285v1M411.5 287v2M411.5 290v1M411.5 292v1M412.5 282v1M412.5 284v1M413.5 283v1M413.5 286v4M414.5 285v1M414.5 287v1M414.5 290v1M415.5 284v6M415.5 291v1M415.5 305v1M416.5 283v1M416.5 285v1M416.5 305v1M417.5 284v3M418.5 282v1M418.5 284v1M418.5 287v1M419.5 283v1M419.5 285v5M420.5 285v1M420.5 287v2M421.5 284v1M421.5 286v2M421.5 290v1M422.5 282v2M423.5 282v2M424.5 286v4M425.5 282v2M425.5 285v2M426.5 284v1M426.5 287v1M426.5 305v1M427.5 285v2M427.5 288v1M428.5 285v1M428.5 288v1M428.5 290v1M429.5 282v2M430.5 283v1M430.5 286v5M431.5 282v2M431.5 286v1M432.5 282v4M432.5 287v2M433.5 284v5M434.5 284v5M435.5 282v1M435.5 284v5M435.5 305v1M436.5 284v1M436.5 287v3M437.5 282v2M437.5 285v3M437.5 305v1M438.5 287v5M439.5 282v5M440.5 282v2M440.5 285v1M441.5 285v3M441.5 291v1M442.5 282v1M442.5 285v2M442.5 288v4M442.5 305v1M443.5 285v1M443.5 287v3M444.5 287v2M444.5 290v1M444.5 305v1M445.5 284v1M445.5 287v1M445.5 289v1M446.5 282v4M446.5 290v1M447.5 282v1M447.5 286v2M447.5 289v1M448.5 283v1M448.5 286v2M448.5 289v1M449.5 282v4M449.5 290v1M450.5 286v4M450.5 305v1M451.5 282v4M452.5 287v3M453.5 284v1M453.5 286v5M453.5 305v1M454.5 284v1M454.5 286v1M455.5 285v3M455.5 289v1M456.5 283v1M456.5 285v1M456.5 287v2M456.5 293v1M457.5 285v5M457.5 291v1M458.5 283v4M458.5 288v1M458.5 291v2M459.5 285v5M459.5 292v1M460.5 282v1M460.5 286v3M461.5 286v1M462.5 284v7M462.5 305v1M463.5 285v3M463.5 289v1M464.5 284v6M465.5 285v4M465.5 305v1M466.5 284v1M466.5 286v1M466.5 289v1M467.5 282v1M467.5 284v6M468.5 287v3M469.5 282v2M470.5 284v3M470.5 291v1M470.5 305v1M471.5 284v2M471.5 287v2M472.5 284v3M472.5 288v2M473.5 285v3M474.5 283v1M474.5 305v1M475.5 285v3M475.5 289v1M476.5 285v1M476.5 287v2M476.5 292v1M477.5 285v5M477.5 305v1M478.5 285v3M478.5 290v1M479.5 282v1M479.5 284v2M480.5 282v1M480.5 285v1M480.5 287v1M481.5 285v4M481.5 291v1M482.5 282v1M482.5 285v1M482.5 287v3M482.5 305v1M483.5 285v3M483.5 289v2M483.5 305v1M484.5 283v1M484.5 285v5M485.5 284v3M485.5 288v1M486.5 282v4M487.5 282v1M487.5 284v1M487.5 286v3M488.5 284v1M488.5 286v5M488.5 292v1M489.5 282v2M490.5 283v3M490.5 287v3M490.5 291v1M490.5 305v1M491.5 282v5M492.5 285v1M492.5 287v2M492.5 292v1M493.5 282v2M493.5 285v1M494.5 286v3M494.5 292v1M495.5 282v4M496.5 282v3M497.5 285v4M497.5 291v1M498.5 283v6M499.5 284v1M499.5 286v3M499.5 290v1M499.5 305v1M500.5 284v8M501.5 284v2M501.5 287v4M502.5 282v3M503.5 284v1M503.5 286v4M504.5 282v2M504.5 285v1M505.5 282v2M506.5 284v5M507.5 283v5M507.5 289v2M508.5 282v1M508.5 284v2M508.5 288v3M509.5 284v2M509.5 287v3M510.5 282v1M510.5 284v3M511.5 282v1M511.5 286v3M512.5 285v5M512.5 293v1M513.5 283v1M513.5 286v2M513.5 289v3M513.5 305v1M514.5 282v3M514.5 291v1M514.5 305v1M515.5 284v1M515.5 286v1M515.5 288v2M516.5 285v3M517.5 285v1M517.5 287v2M518.5 286v1M518.5 288v1M518.5 290v1M519.5 284v1M519.5 286v1M519.5 305v1M520.5 283v1M520.5 305v1M521.5 284v6M522.5 283v3M523.5 285v6M524.5 285v1M525.5 282v2M525.5 285v1M526.5 282v1M526.5 305v1M527.5 284v6M527.5 305v1M528.5 282v5M529.5 283v1M529.5 286v3M529.5 291v1M530.5 282v3M531.5 282v4M532.5 283v1M532.5 285v5M532.5 291v1M533.5 284v5M534.5 285v3M534.5 289v1M534.5 291v1M535.5 285v4M535.5 305v1M536.5 285v1M536.5 287v1M536.5 290v1M537.5 285v2M537.5 288v1M537.5 290v1M538.5 282v1M538.5 285v5M538.5 291v1M539.5 283v2M539.5 305v1M540.5 283v1M540.5 286v2M540.5 289v1M541.5 283v1M542.5 283v1M542.5 285v4M543.5 282v3M544.5 282v3M544.5 288v1M545.5 282v2M546.5 286v4M547.5 284v1M547.5 287v1M548.5 286v2M549.5 283v1M549.5 286v1M549.5 288v2M549.5 291v2M550.5 285v3M550.5 289v1M550.5 291v1M551.5 284v3M551.5 289v1M551.5 305v1M552.5 285v4M552.5 291v1M553.5 282v1M553.5 286v1M553.5 305v1M554.5 282v1M554.5 285v1M554.5 287v1M555.5 284v5M556.5 287v3M557.5 283v2M557.5 286v1M557.5 288v1M558.5 282v2M558.5 286v2M558.5 289v1M559.5 283v1M559.5 285v4M560.5 285v3M560.5 290v1M561.5 283v1M561.5 285v4M561.5 290v1M562.5 285v6M563.5 282v1M563.5 284v1M563.5 286v2M564.5 283v1M564.5 285v3M564.5 290v1M565.5 284v2M565.5 288v2M566.5 283v7M567.5 282v2M567.5 287v1M568.5 282v2M568.5 286v3M568.5 292v1M568.5 305v1M569.5 284v2M569.5 287v1M569.5 290v1M569.5 305v1M570.5 282v1M570.5 284v1M570.5 286v1M570.5 305v1M571.5 283v2M571.5 286v3M571.5 291v1M571.5 305v1M572.5 284v5M572.5 305v1M573.5 285v4M574.5 283v4M574.5 288v1M575.5 285v2M575.5 288v1M575.5 291v1M576.5 282v2M577.5 283v1M577.5 286v4M577.5 305v1M578.5 282v2M578.5 285v1M579.5 285v1M579.5 287v3M580.5 283v1M580.5 286v2M580.5 290v1M581.5 284v1M581.5 286v4M582.5 284v1M582.5 287v2M582.5 305v1M583.5 282v2M583.5 285v2M584.5 282v2M584.5 285v1M584.5 287v1M585.5 285v5M586.5 285v1M586.5 287v1M586.5 290v2M587.5 283v1M587.5 285v4M587.5 305v1M588.5 282v1M588.5 286v3M588.5 291v1M589.5 285v1M589.5 287v2M589.5 290v1M589.5 305v1M590.5 282v4M591.5 282v1M591.5 284v2M591.5 305v1M592.5 283v1M592.5 287v1M592.5 289v1M592.5 305v1M593.5 282v5M594.5 284v4M595.5 283v1M595.5 285v4M595.5 291v1M595.5 305v1M596.5 283v5M596.5 294v1M597.5 284v3M597.5 288v2M598.5 285v1M598.5 288v2M598.5 291v1M599.5 282v1M599.5 287v4M600.5 282v3M600.5 286v1M601.5 284v4M601.5 290v1M602.5 286v3M602.5 291v1M603.5 284v1M603.5 286v1M603.5 288v2M604.5 285v2M604.5 292v1M605.5 286v2M605.5 289v1M606.5 286v4M607.5 287v3M608.5 282v2M608.5 285v3M608.5 289v3M609.5 284v6M610.5 283v1M610.5 286v3M610.5 290v1M611.5 283v1M611.5 285v3M611.5 289v1M612.5 283v8M613.5 282v1M613.5 284v1M614.5 282v2M615.5 285v4M615.5 290v1M615.5 305v1M616.5 282v2M617.5 284v5M618.5 283v1M618.5 286v4M619.5 283v2M619.5 286v6M619.5 293v1M619.5 305v1M620.5 284v1M620.5 286v1M620.5 288v1M621.5 283v2M621.5 286v3M621.5 290v1M621.5 305v1M622.5 282v1M622.5 284v2M623.5 284v1M623.5 286v2M623.5 290v1M623.5 305v1M624.5 284v3M624.5 291v2M625.5 285v4M626.5 285v5M627.5 284v5M628.5 284v2M628.5 287v1M628.5 289v2M629.5 284v2M629.5 288v2M630.5 286v2M631.5 283v1M631.5 285v6M632.5 282v1M632.5 284v1M632.5 287v1M632.5 305v1M633.5 282v4M633.5 305v1M634.5 282v2M634.5 285v1M635.5 283v1M635.5 287v1M635.5 289v1M635.5 305v1M636.5 285v4M636.5 291v1M637.5 284v5M637.5 291v1M638.5 283v1M638.5 285v2M638.5 288v1M639.5 282v1M639.5 305v1M640.5 283v1M640.5 285v3M640.5 290v1M640.5 292v1M640.5 294v1M641.5 283v1M641.5 286v4M641.5 291v1M642.5 286v4M642.5 291v1M642.5 305v1M643.5 284v6M644.5 284v4M644.5 289v1M645.5 285v1M645.5 287v2M646.5 283v1M646.5 286v3M646.5 290v1M647.5 282v4M647.5 287v1M648.5 282v1M648.5 285v2M648.5 305v1M649.5 285v4M650.5 284v2M650.5 289v1M651.5 284v5M651.5 305v1M652.5 284v2M652.5 287v1M652.5 289v1M652.5 293v1M653.5 284v1M653.5 287v2M653.5 293v1M654.5 284v3M654.5 288v1M654.5 305v1M655.5 283v2M655.5 287v1M656.5 284v1M656.5 288v2M657.5 283v1M657.5 285v1M657.5 287v3M658.5 282v2M658.5 286v1M659.5 284v1M659.5 287v2M660.5 284v1M660.5 286v3M660.5 290v1M661.5 285v2M661.5 288v2M662.5 286v5M663.5 283v2M664.5 284v6M665.5 284v1M666.5 284v5M666.5 292v1M667.5 282v1M667.5 285v3M667.5 289v1M667.5 305v1M668.5 282v1M668.5 285v1M669.5 285v2M669.5 289v1M670.5 283v1M670.5 285v3M670.5 289v1M670.5 305v1M671.5 283v1M671.5 286v2M672.5 285v2M673.5 284v1M673.5 286v3M673.5 290v1M674.5 282v3M675.5 286v2M675.5 289v1M675.5 293v1M675.5 305v1M676.5 285v4M677.5 283v1M677.5 285v3M677.5 291v2M678.5 283v3M678.5 287v3M679.5 283v1M679.5 286v3M680.5 284v2M680.5 287v1M681.5 283v1M682.5 284v2M682.5 287v2M682.5 290v2M683.5 283v4M683.5 289v1M683.5 292v1M684.5 282v4"/><path stroke="#d0d000" d="M84.5 288v1M84.5 291v3M84.5 304v1M85.5 226v1M85.5 258v1M85.5 289v2M85.5 304v1M86.5 221v61M86.5 283v6M86.5 304v1M87.5 240v1M87.5 286v1M87.5 288v2M87.5 291v2M87.5 304v1M88.5 250v32M88.5 283v1M88.5 286v1M88.5 289v1M89.5 289v1M89.5 292v3M89.5 304v1M90.5 289v6M90.5 304v1M91.5 237v45M91.5 283v1M91.5 286v2M91.5 290v1M91.5 294v1M92.5 235v50M92.5 287v2M92.5 304v1M93.5 290v3M94.5 253v1M94.5 288v1M94.5 291v3M94.5 304v1M95.5 263v1M95.5 289v1M95.5 291v1M95.5 293v3M95.5 304v1M96.5 244v38M96.5 283v1M96.5 286v2M97.5 289v3M97.5 293v2M97.5 304v1M98.5 227v56M98.5 284v3M98.5 288v1M98.5 304v1M99.5 252v1M99.5 290v3M99.5 294v1M100.5 289v1M100.5 291v2M100.5 295v1M100.5 304v1M101.5 222v1M101.5 291v5M102.5 240v42M102.5 287v2M102.5 290v2M103.5 267v1M103.5 287v1M103.5 290v4M103.5 304v1M104.5 254v1M104.5 290v4M104.5 304v1M105.5 231v1M105.5 290v3M105.5 294v1M105.5 296v1M105.5 304v1M106.5 237v1M106.5 289v3M106.5 294v1M107.5 254v1M107.5 291v3M107.5 304v1M108.5 233v1M108.5 272v1M108.5 287v2M108.5 292v1M108.5 295v1M108.5 304v1M109.5 243v1M109.5 289v1M109.5 291v2M109.5 304v1M110.5 289v6M110.5 298v1M111.5 287v1M111.5 289v1M111.5 291v3M111.5 296v1M111.5 304v1M112.5 236v1M112.5 238v44M112.5 285v1M112.5 287v5M113.5 288v1M113.5 291v4M113.5 304v1M114.5 257v25M114.5 283v1M114.5 285v6M115.5 288v4M116.5 236v1M116.5 285v1M116.5 288v1M116.5 291v4M116.5 304v1M117.5 220v1M117.5 223v59M117.5 286v3M117.5 304v1M118.5 247v1M118.5 289v1M118.5 292v2M118.5 295v1M119.5 242v1M119.5 289v5M120.5 256v1M120.5 292v4M120.5 304v1M121.5 256v1M121.5 269v1M121.5 290v3M121.5 294v1M121.5 296v1M122.5 274v1M122.5 289v3M122.5 293v2M123.5 227v56M123.5 285v4M123.5 292v1M123.5 304v1M124.5 242v40M124.5 283v1M124.5 286v1M124.5 289v1M125.5 226v1M125.5 244v1M125.5 290v1M125.5 292v2M125.5 295v1M125.5 297v1M125.5 304v1M126.5 248v1M126.5 289v5M127.5 234v1M127.5 247v1M127.5 288v1M127.5 291v4M127.5 297v1M128.5 221v1M128.5 234v48M128.5 283v5M128.5 289v2M128.5 304v1M129.5 286v1M129.5 288v2M129.5 291v1M129.5 293v1M129.5 295v2M129.5 304v1M130.5 236v46M130.5 283v4M130.5 288v1M130.5 290v1M130.5 304v1M131.5 223v59M131.5 286v1M132.5 250v1M132.5 289v4M132.5 294v1M133.5 247v1M133.5 295v1M133.5 304v1M134.5 268v1M134.5 289v2M134.5 293v1M135.5 290v3M135.5 304v1M136.5 252v1M136.5 289v1M136.5 291v3M136.5 304v1M137.5 267v1M137.5 291v1M137.5 295v1M138.5 224v1M138.5 288v1M138.5 291v3M139.5 290v2M139.5 294v2M140.5 269v1M140.5 276v1M140.5 288v1M140.5 290v5M140.5 304v1M141.5 288v2M141.5 291v3M141.5 295v1M142.5 238v44M142.5 285v3M142.5 289v1M142.5 291v1M142.5 304v1M143.5 247v35M143.5 284v6M143.5 304v1M144.5 288v1M144.5 290v3M144.5 304v1M145.5 289v1M145.5 291v1M145.5 293v2M145.5 304v1M146.5 288v5M146.5 294v1M147.5 271v1M147.5 277v1M147.5 290v2M147.5 293v1M148.5 288v1M148.5 290v3M148.5 294v1M149.5 250v1M149.5 288v4M149.5 293v2M150.5 236v47M150.5 286v1M150.5 289v3M151.5 229v53M151.5 284v3M151.5 288v3M151.5 304v1M152.5 228v1M152.5 291v1M152.5 293v2M152.5 304v1M153.5 251v1M153.5 287v6M153.5 295v1M153.5 304v1M154.5 268v1M154.5 288v3M154.5 292v3M154.5 296v1M155.5 233v1M155.5 290v6M156.5 268v1M156.5 289v1M156.5 291v4M157.5 260v1M157.5 288v1M157.5 290v1M157.5 293v2M157.5 304v1M158.5 226v1M158.5 243v39M158.5 284v3M158.5 290v1M159.5 264v1M159.5 290v1M159.5 292v2M159.5 296v1M159.5 304v1M160.5 257v25M160.5 284v5M161.5 258v1M161.5 288v5M161.5 294v1M161.5 304v1M162.5 288v4M162.5 293v2M162.5 304v1M163.5 223v59M163.5 286v2M163.5 304v1M164.5 246v36M164.5 286v4M164.5 291v1M164.5 304v1M165.5 229v53M165.5 284v1M165.5 288v1M165.5 290v1M166.5 222v1M166.5 236v46M166.5 283v1M166.5 285v2M166.5 288v1M166.5 290v1M167.5 287v1M167.5 290v2M167.5 304v1M168.5 237v1M168.5 246v36M168.5 283v1M168.5 285v1M168.5 287v2M169.5 288v2M169.5 291v2M169.5 304v1M170.5 235v47M170.5 284v1M170.5 286v1M170.5 289v1M170.5 304v1M171.5 288v8M171.5 304v1M172.5 234v1M172.5 288v1M172.5 290v5M172.5 304v1M173.5 228v1M173.5 230v1M173.5 288v2M173.5 291v2M173.5 304v1M174.5 234v48M174.5 283v5M174.5 292v1M175.5 223v1M175.5 287v2M175.5 290v1M176.5 244v38M176.5 285v2M176.5 288v1M177.5 290v2M177.5 293v1M178.5 276v1M178.5 289v2M178.5 304v1M179.5 249v1M179.5 289v3M179.5 293v1M179.5 295v1M180.5 287v1M180.5 289v1M180.5 291v4M180.5 296v1M180.5 304v1M181.5 224v1M181.5 233v1M181.5 290v3M181.5 294v1M181.5 304v1M182.5 235v47M182.5 285v1M182.5 287v2M182.5 290v1M183.5 257v25M183.5 284v5M183.5 304v1M184.5 266v1M184.5 291v1M184.5 293v1M184.5 295v1M185.5 290v3M185.5 294v2M185.5 304v1M186.5 287v8M186.5 304v1M187.5 291v4M187.5 296v1M187.5 304v1M188.5 222v61M188.5 286v5M188.5 304v1M189.5 233v1M189.5 266v1M189.5 289v1M189.5 291v4M189.5 304v1M190.5 223v1M190.5 245v37M190.5 284v1M190.5 286v3M190.5 290v1M190.5 304v1M191.5 230v1M191.5 285v1M191.5 288v6M191.5 304v1M192.5 227v55M192.5 284v7M193.5 243v39M193.5 284v6M193.5 304v1M194.5 238v44M194.5 285v5M194.5 291v1M194.5 304v1M195.5 234v48M195.5 283v2M195.5 286v1M195.5 288v1M195.5 304v1M196.5 242v40M196.5 283v1M196.5 285v5M196.5 291v1M196.5 304v1M197.5 261v1M197.5 286v1M197.5 290v1M197.5 293v2M198.5 287v1M198.5 290v4M198.5 295v1M198.5 304v1M199.5 231v1M199.5 287v1M199.5 289v2M199.5 292v1M199.5 294v1M199.5 304v1M200.5 288v2M200.5 291v2M200.5 294v2M201.5 219v1M201.5 226v56M201.5 283v6M202.5 291v1M202.5 293v1M202.5 297v1M203.5 250v1M203.5 288v1M203.5 290v1M203.5 292v1M204.5 259v1M204.5 261v1M204.5 289v5M204.5 295v1M204.5 297v1M204.5 304v1M205.5 250v1M205.5 290v3M205.5 304v1M206.5 287v1M206.5 293v1M207.5 238v44M207.5 284v2M208.5 251v31M208.5 285v4M209.5 257v1M209.5 287v1M209.5 289v3M210.5 245v1M210.5 290v1M210.5 292v3M210.5 304v1M211.5 266v1M211.5 288v1M211.5 291v2M211.5 294v2M211.5 304v1M212.5 240v42M212.5 286v1M212.5 290v1M213.5 224v1M213.5 289v6M214.5 289v1M214.5 291v1M214.5 293v1M214.5 295v1M215.5 237v1M215.5 248v34M215.5 283v2M215.5 286v2M215.5 304v1M216.5 220v1M216.5 287v1M216.5 290v1M216.5 293v1M216.5 295v1M216.5 297v1M216.5 304v1M217.5 242v40M217.5 284v1M217.5 286v2M217.5 289v3M217.5 304v1M218.5 235v1M218.5 289v4M218.5 294v1M219.5 245v37M219.5 284v1M219.5 286v4M219.5 304v1M220.5 289v2M220.5 293v1M221.5 252v30M221.5 285v4M221.5 290v1M221.5 304v1M222.5 240v1M222.5 288v5M222.5 295v1M222.5 304v1M223.5 288v1M223.5 290v5M224.5 276v1M224.5 288v6M225.5 257v1M225.5 289v5M225.5 295v2M225.5 304v1M226.5 225v58M226.5 284v1M226.5 286v3M226.5 292v1M226.5 304v1M227.5 240v42M227.5 285v5M227.5 291v1M228.5 238v1M228.5 290v2M228.5 293v1M229.5 229v1M229.5 288v7M229.5 304v1M230.5 220v62M230.5 286v4M230.5 304v1M231.5 251v31M231.5 284v4M231.5 290v1M231.5 304v1M232.5 257v25M232.5 285v4M233.5 288v9M233.5 304v1M234.5 223v1M234.5 288v2M234.5 291v2M234.5 304v1M235.5 290v1M235.5 292v1M235.5 304v1M236.5 256v1M236.5 289v3M236.5 294v3M237.5 251v1M237.5 290v1M237.5 292v2M238.5 239v1M238.5 244v1M238.5 289v2M238.5 292v1M238.5 294v1M238.5 304v1M239.5 245v1M239.5 259v1M239.5 288v1M239.5 290v2M239.5 293v1M239.5 295v1M240.5 257v1M240.5 287v4M240.5 292v3M240.5 304v1M241.5 249v34M241.5 284v2M241.5 287v1M241.5 289v1M241.5 304v1M242.5 286v1M242.5 289v5M242.5 295v2M242.5 304v1M243.5 228v1M243.5 252v30M243.5 288v1M243.5 304v1M244.5 242v1M244.5 287v6M244.5 294v2M244.5 304v1M245.5 233v1M245.5 236v46M245.5 285v1M245.5 288v1M245.5 304v1M246.5 256v26M246.5 285v5M247.5 264v1M247.5 288v3M247.5 304v1M248.5 261v1M248.5 291v4M248.5 304v1M249.5 248v1M249.5 263v19M249.5 284v1M249.5 286v2M249.5 304v1M250.5 227v1M250.5 291v3M250.5 295v2M250.5 304v1M251.5 224v58M251.5 286v2M251.5 289v1M251.5 293v1M252.5 247v35M252.5 283v1M252.5 286v3M252.5 304v1M253.5 227v1M253.5 288v1M253.5 292v2M254.5 288v1M254.5 291v1M254.5 293v3M255.5 238v44M255.5 285v1M255.5 287v2M255.5 304v1M256.5 238v1M256.5 251v31M256.5 284v1M256.5 286v3M257.5 258v1M257.5 289v3M257.5 293v3M257.5 304v1M258.5 293v2M259.5 228v54M259.5 284v2M259.5 288v1M259.5 290v1M260.5 235v47M260.5 283v4M260.5 288v2M260.5 291v2M261.5 279v1M261.5 289v1M261.5 293v2M262.5 243v1M262.5 289v2M262.5 292v3M263.5 254v1M263.5 291v1M263.5 294v1M263.5 296v1M263.5 304v1M264.5 289v2M264.5 293v2M264.5 304v1M265.5 243v1M265.5 290v1M265.5 292v1M265.5 297v1M265.5 304v1M266.5 254v28M266.5 285v2M266.5 288v2M266.5 304v1M267.5 290v3M267.5 294v1M267.5 304v1M268.5 288v2M268.5 292v1M268.5 294v1M268.5 304v1M269.5 242v1M269.5 261v1M269.5 288v1M269.5 290v2M269.5 304v1M270.5 269v1M270.5 290v4M270.5 295v1M271.5 288v1M271.5 290v4M271.5 295v1M271.5 304v1M272.5 288v1M272.5 290v4M272.5 296v1M272.5 304v1M273.5 257v1M273.5 284v1M273.5 286v2M273.5 290v3M273.5 304v1M274.5 289v4M274.5 295v1M275.5 247v35M275.5 285v3M275.5 291v1M275.5 304v1M276.5 261v21M276.5 286v3M277.5 230v52M277.5 285v6M277.5 304v1M278.5 248v1M278.5 257v26M278.5 284v5M278.5 304v1M279.5 291v4M279.5 296v1M280.5 270v1M280.5 289v4M281.5 274v1M281.5 278v1M281.5 290v1M282.5 273v1M282.5 290v3M282.5 304v1M283.5 288v1M283.5 290v3M284.5 289v5M284.5 304v1M285.5 286v1M285.5 288v1M285.5 291v3M286.5 238v1M286.5 289v1M286.5 292v1M286.5 294v2M287.5 241v41M287.5 285v3M287.5 304v1M288.5 257v1M288.5 288v1M288.5 291v2M288.5 294v1M289.5 253v1M289.5 259v24M289.5 284v5M289.5 304v1M290.5 249v33M290.5 283v7M291.5 255v27M291.5 283v4M291.5 288v1M291.5 291v1M292.5 288v6M293.5 259v24M293.5 284v2M293.5 287v1M293.5 290v1M293.5 292v1M294.5 238v1M294.5 252v1M294.5 288v4M294.5 293v1M294.5 304v1M295.5 254v1M295.5 289v1M295.5 292v2M295.5 297v1M295.5 304v1M296.5 240v1M296.5 291v6M296.5 304v1M297.5 237v45M297.5 283v1M297.5 285v5M298.5 228v54M298.5 285v6M298.5 304v1M299.5 258v1M299.5 284v1M299.5 288v3M299.5 292v1M299.5 294v2M299.5 304v1M300.5 228v1M300.5 234v1M300.5 293v3M301.5 289v8M301.5 304v1M302.5 297v1M302.5 304v1M303.5 248v1M303.5 291v4M303.5 304v1M304.5 243v39M304.5 284v4M304.5 289v1M305.5 259v23M305.5 286v4M305.5 291v1M306.5 232v50M306.5 285v1M306.5 287v2M307.5 242v1M307.5 265v1M307.5 290v5M307.5 304v1M308.5 288v1M308.5 291v3M308.5 295v1M308.5 304v1M309.5 231v1M309.5 290v1M309.5 292v1M309.5 294v2M309.5 304v1M310.5 256v26M310.5 283v1M310.5 285v2M310.5 288v2M310.5 304v1M311.5 291v2M311.5 295v1M312.5 259v23M312.5 283v6M312.5 290v1M313.5 290v4M313.5 304v1M314.5 288v1M314.5 290v2M314.5 293v1M315.5 230v1M315.5 274v1M315.5 291v2M316.5 240v1M316.5 287v1M316.5 289v1M316.5 291v3M316.5 295v1M316.5 304v1M317.5 288v1M317.5 292v1M317.5 304v1M318.5 234v2M318.5 288v4M318.5 294v2M319.5 253v1M319.5 290v4M319.5 304v1M320.5 289v1M320.5 291v1M320.5 293v1M320.5 295v1M321.5 241v1M321.5 291v3M321.5 304v1M322.5 252v1M322.5 289v5M322.5 295v2M323.5 290v4M323.5 297v1M323.5 304v1M324.5 292v1M324.5 294v1M325.5 290v4M325.5 295v1M325.5 304v1M326.5 287v1M326.5 290v3M326.5 295v1M326.5 304v1M327.5 274v1M327.5 290v3M327.5 294v1M327.5 304v1M328.5 277v1M328.5 287v1M328.5 290v3M328.5 295v1M328.5 297v1M329.5 290v4M330.5 290v4M330.5 295v1M330.5 297v1M330.5 304v1M331.5 291v1M331.5 293v1M331.5 295v1M331.5 304v1M332.5 239v1M332.5 258v1M332.5 286v1M332.5 288v4M332.5 294v1M332.5 297v1M332.5 304v1M333.5 243v40M333.5 285v6M334.5 287v1M334.5 289v2M334.5 293v1M334.5 304v1M335.5 286v1M335.5 290v3M335.5 294v3M336.5 247v1M336.5 266v1M336.5 289v5M336.5 295v1M336.5 297v1M336.5 304v1M337.5 272v1M337.5 278v1M337.5 288v1M337.5 291v4M337.5 296v1M337.5 304v1M338.5 246v1M338.5 261v21M338.5 284v6M339.5 239v1M339.5 252v1M339.5 290v1M339.5 293v2M339.5 297v1M340.5 290v1M340.5 292v2M340.5 295v1M340.5 304v1M341.5 257v1M341.5 288v2M341.5 291v3M342.5 291v1M342.5 293v1M342.5 304v1M343.5 228v2M343.5 241v41M343.5 285v4M344.5 257v25M344.5 284v5M344.5 290v1M345.5 262v1M345.5 287v1M345.5 290v1M345.5 297v1M345.5 304v1M346.5 289v6M347.5 267v1M347.5 289v6M348.5 252v30M348.5 285v3M348.5 290v1M349.5 232v50M349.5 286v4M350.5 233v1M350.5 289v1M350.5 292v1M351.5 236v1M351.5 285v1M351.5 288v4M351.5 293v1M351.5 304v1M352.5 254v28M352.5 283v1M352.5 286v3M352.5 304v1M353.5 247v1M353.5 287v4M353.5 292v2M354.5 236v1M354.5 293v4M355.5 231v1M355.5 288v1M355.5 290v5M355.5 296v1M356.5 289v4M356.5 295v1M356.5 297v1M357.5 288v3M357.5 292v2M357.5 304v1M358.5 276v1M358.5 289v5M358.5 295v1M359.5 277v1M359.5 289v3M359.5 295v1M360.5 285v1M360.5 289v2M360.5 292v3M361.5 248v1M361.5 275v1M361.5 285v1M361.5 288v7M361.5 304v1M362.5 243v39M362.5 284v2M362.5 287v3M362.5 293v1M362.5 304v1M363.5 290v5M363.5 304v1M364.5 272v1M364.5 288v2M364.5 294v1M365.5 254v1M365.5 266v1M365.5 288v1M365.5 290v4M366.5 289v6M367.5 248v1M367.5 289v2M367.5 292v3M367.5 296v2M368.5 228v54M368.5 284v1M368.5 286v5M368.5 304v1M369.5 289v3M369.5 293v1M370.5 290v4M371.5 234v1M371.5 289v5M372.5 288v2M372.5 293v1M373.5 257v1M373.5 260v22M373.5 285v6M374.5 261v21M374.5 285v4M374.5 290v1M374.5 304v1M375.5 227v1M375.5 288v1M375.5 290v2M375.5 293v3M376.5 263v1M376.5 290v1M376.5 292v3M376.5 296v1M376.5 304v1M377.5 256v26M377.5 283v3M377.5 288v4M378.5 243v1M378.5 291v1M378.5 294v2M378.5 304v1M379.5 241v1M379.5 289v2M379.5 293v1M380.5 288v5M380.5 295v1M381.5 240v42M381.5 284v1M381.5 286v4M382.5 286v1M382.5 289v5M382.5 304v1M383.5 233v1M383.5 262v20M383.5 284v3M383.5 288v1M384.5 249v1M384.5 289v1M384.5 291v3M385.5 234v48M385.5 288v1M385.5 290v1M386.5 289v1M386.5 292v1M387.5 237v1M387.5 291v1M387.5 293v1M387.5 295v1M388.5 289v2M388.5 294v2M388.5 304v1M389.5 228v54M389.5 283v6M389.5 290v1M389.5 304v1M390.5 289v4M390.5 295v2M391.5 242v1M391.5 291v1M391.5 293v3M392.5 261v1M392.5 270v1M392.5 287v2M392.5 290v3M392.5 294v1M393.5 236v1M393.5 244v39M393.5 285v2M393.5 288v1M393.5 304v1M394.5 237v45M394.5 285v1M394.5 287v2M394.5 290v1M394.5 292v1M394.5 304v1M395.5 231v51M395.5 286v2M395.5 289v2M395.5 304v1M396.5 246v36M396.5 286v3M396.5 290v1M397.5 242v1M397.5 288v1M397.5 292v2M397.5 295v1M398.5 290v2M398.5 293v1M399.5 290v1M399.5 292v3M399.5 304v1M400.5 230v52M400.5 285v1M400.5 288v1M400.5 304v1M401.5 289v1M401.5 291v1M401.5 294v1M401.5 304v1M402.5 251v1M402.5 291v2M402.5 294v2M402.5 304v1M403.5 248v34M403.5 284v1M403.5 287v1M403.5 289v1M403.5 304v1M404.5 244v38M404.5 285v3M404.5 304v1M405.5 288v2M405.5 292v3M406.5 288v1M406.5 291v2M406.5 304v1M407.5 286v1M407.5 289v7M408.5 288v1M408.5 292v1M408.5 294v1M408.5 304v1M409.5 291v5M409.5 304v1M410.5 227v1M410.5 257v25M410.5 285v6M410.5 292v1M410.5 304v1M411.5 252v1M411.5 274v1M411.5 289v1M411.5 291v1M411.5 293v2M411.5 304v1M412.5 231v51M412.5 283v1M412.5 285v3M412.5 290v1M412.5 304v1M413.5 290v5M414.5 232v1M414.5 286v1M414.5 288v2M414.5 291v2M414.5 304v1M415.5 290v1M415.5 292v2M415.5 304v1M416.5 250v33M416.5 284v1M416.5 286v3M417.5 242v1M417.5 260v1M417.5 287v6M417.5 294v2M417.5 304v1M418.5 247v35M418.5 285v2M418.5 288v1M419.5 290v2M419.5 293v1M419.5 304v1M420.5 262v1M420.5 289v2M420.5 292v3M420.5 296v1M421.5 288v2M421.5 291v5M421.5 304v1M422.5 227v55M422.5 284v6M422.5 291v1M422.5 304v1M423.5 237v45M423.5 284v5M423.5 291v1M424.5 243v1M424.5 290v3M424.5 294v2M424.5 304v1M425.5 241v41M425.5 284v1M425.5 288v1M425.5 291v1M426.5 272v1M426.5 286v1M426.5 288v5M426.5 296v1M426.5 298v1M426.5 304v1M427.5 287v1M427.5 289v7M428.5 232v1M428.5 241v1M428.5 287v1M428.5 289v1M428.5 291v6M428.5 304v1M429.5 227v55M429.5 284v4M429.5 289v1M429.5 304v1M430.5 291v2M430.5 304v1M431.5 263v19M431.5 284v2M431.5 287v3M431.5 304v1M432.5 254v28M432.5 286v1M432.5 289v1M433.5 272v1M433.5 289v5M433.5 295v1M434.5 228v1M434.5 289v4M434.5 304v1M435.5 289v1M435.5 291v3M435.5 295v1M435.5 304v1M436.5 248v1M436.5 290v1M436.5 294v1M436.5 304v1M437.5 234v1M437.5 239v43M437.5 284v1M437.5 291v1M437.5 304v1M438.5 272v1M438.5 292v1M438.5 296v1M438.5 304v1M439.5 264v18M439.5 287v2M440.5 235v1M440.5 240v42M440.5 284v1M440.5 286v5M441.5 288v3M441.5 295v1M441.5 304v1M442.5 235v1M442.5 287v1M442.5 292v3M443.5 264v1M443.5 272v1M443.5 290v1M443.5 292v2M443.5 295v3M444.5 272v1M444.5 289v1M444.5 291v1M445.5 288v1M445.5 290v4M445.5 304v1M446.5 242v40M446.5 286v4M447.5 230v1M447.5 236v1M447.5 288v1M447.5 290v3M447.5 294v1M448.5 250v1M448.5 288v1M448.5 290v1M448.5 292v3M448.5 304v1M449.5 242v1M449.5 253v29M449.5 286v4M450.5 242v1M450.5 290v4M450.5 304v1M451.5 251v31M451.5 286v1M451.5 288v1M451.5 304v1M452.5 231v1M452.5 290v4M452.5 296v1M453.5 291v3M453.5 304v1M454.5 228v56M454.5 285v1M454.5 287v2M454.5 304v1M455.5 257v1M455.5 266v1M455.5 288v1M455.5 290v4M456.5 266v1M456.5 289v4M456.5 294v1M457.5 290v1M457.5 292v1M457.5 294v1M458.5 254v1M458.5 289v2M458.5 293v3M458.5 297v1M458.5 304v1M459.5 249v1M459.5 291v1M459.5 293v2M459.5 304v1M460.5 289v5M460.5 295v1M461.5 287v7M461.5 295v1M461.5 304v1M462.5 291v3M462.5 295v1M463.5 268v1M463.5 288v1M463.5 290v1M463.5 292v1M463.5 294v1M463.5 304v1M464.5 253v1M464.5 290v5M464.5 304v1M465.5 269v1M465.5 289v3M465.5 293v2M465.5 304v1M466.5 240v1M466.5 275v1M466.5 287v2M466.5 290v5M466.5 296v1M466.5 304v1M467.5 246v1M467.5 290v1M467.5 292v2M467.5 295v1M468.5 229v1M468.5 290v2M468.5 304v1M469.5 246v36M469.5 284v5M469.5 290v1M469.5 304v1M470.5 276v1M470.5 287v4M470.5 292v2M471.5 242v1M471.5 286v1M471.5 289v5M471.5 295v1M472.5 290v3M472.5 297v1M473.5 228v1M473.5 232v1M473.5 288v8M473.5 304v1M474.5 251v32M474.5 284v3M475.5 288v1M475.5 290v4M475.5 304v1M476.5 271v1M476.5 289v3M476.5 293v2M477.5 249v2M477.5 290v4M478.5 254v1M478.5 288v2M478.5 291v2M478.5 294v1M478.5 296v1M478.5 304v1M479.5 231v1M479.5 246v36M479.5 283v1M479.5 286v2M479.5 290v1M479.5 293v1M479.5 304v1M480.5 251v1M480.5 288v1M480.5 290v4M481.5 249v1M481.5 289v2M481.5 292v2M481.5 304v1M482.5 237v1M482.5 290v1M482.5 292v2M483.5 288v1M483.5 291v1M483.5 293v1M483.5 304v1M484.5 232v1M484.5 276v1M484.5 290v5M484.5 304v1M485.5 234v1M485.5 287v1M485.5 289v2M485.5 292v3M485.5 304v1M486.5 246v36M486.5 286v2M486.5 289v1M486.5 304v1M487.5 238v1M487.5 289v3M487.5 293v1M488.5 229v1M488.5 291v1M488.5 293v2M489.5 241v1M489.5 250v32M489.5 284v2M489.5 287v4M489.5 304v1M490.5 267v1M490.5 290v1M490.5 293v2M491.5 235v47M491.5 287v1M491.5 304v1M492.5 268v1M492.5 289v3M492.5 293v2M493.5 263v19M493.5 284v1M493.5 286v3M494.5 242v1M494.5 289v3M494.5 293v2M494.5 304v1M495.5 250v32M495.5 286v4M496.5 232v50M496.5 285v5M496.5 304v1M497.5 289v2M497.5 292v1M498.5 289v5M498.5 304v1M499.5 275v1M499.5 289v1M499.5 291v3M500.5 292v1M500.5 295v1M500.5 304v1M501.5 266v1M501.5 291v2M501.5 295v1M502.5 262v20M502.5 285v2M502.5 288v3M503.5 254v1M503.5 290v3M504.5 251v31M504.5 284v1M504.5 286v2M504.5 290v1M504.5 304v1M505.5 245v37M505.5 284v7M505.5 304v1M506.5 248v1M506.5 289v6M506.5 304v1M507.5 288v1M507.5 291v1M507.5 293v1M507.5 295v2M507.5 304v1M508.5 239v1M508.5 258v1M508.5 287v1M508.5 291v3M508.5 304v1M509.5 233v1M509.5 290v3M509.5 294v1M509.5 297v1M509.5 304v1M510.5 249v33M510.5 283v1M510.5 287v3M510.5 291v1M511.5 267v1M511.5 279v1M511.5 289v2M511.5 292v3M512.5 290v3M513.5 292v4M513.5 304v1M514.5 263v19M514.5 285v3M514.5 304v1M515.5 274v1M515.5 290v3M515.5 295v1M516.5 272v1M516.5 289v5M517.5 278v1M517.5 289v5M517.5 295v2M518.5 289v1M518.5 292v3M519.5 254v28M519.5 283v1M519.5 285v1M519.5 287v1M520.5 249v34M520.5 284v6M521.5 246v1M521.5 275v1M521.5 290v6M522.5 228v54M522.5 286v3M523.5 261v1M523.5 291v4M523.5 304v1M524.5 244v1M524.5 251v34M524.5 286v2M524.5 289v1M525.5 245v37M525.5 284v1M525.5 286v3M525.5 304v1M526.5 235v47M526.5 283v6M527.5 250v1M527.5 275v1M527.5 290v3M527.5 295v1M527.5 304v1M528.5 236v46M528.5 288v1M529.5 243v1M529.5 285v1M529.5 289v2M529.5 292v1M529.5 304v1M530.5 249v33M530.5 285v3M530.5 289v1M530.5 291v1M531.5 240v42M531.5 286v2M531.5 289v1M531.5 304v1M532.5 234v1M532.5 275v1M532.5 290v1M532.5 292v2M533.5 289v6M534.5 239v1M534.5 288v1M534.5 290v1M534.5 292v3M534.5 297v1M535.5 250v1M535.5 276v1M535.5 289v6M536.5 228v1M536.5 289v1M536.5 291v2M536.5 304v1M537.5 256v1M537.5 287v1M537.5 289v1M537.5 291v2M537.5 296v1M537.5 304v1M538.5 251v1M538.5 290v1M538.5 292v4M538.5 304v1M539.5 243v40M539.5 285v3M539.5 289v1M539.5 291v1M540.5 285v1M540.5 288v1M540.5 290v5M541.5 250v1M541.5 256v26M541.5 284v3M541.5 288v1M541.5 290v1M541.5 304v1M542.5 237v1M542.5 289v7M542.5 304v1M543.5 248v1M543.5 261v21M543.5 285v2M543.5 288v3M543.5 292v1M544.5 265v17M544.5 285v2M544.5 289v1M545.5 242v40M545.5 285v5M546.5 290v1M546.5 292v2M547.5 229v1M547.5 286v1M547.5 288v4M547.5 293v2M547.5 304v1M548.5 257v1M548.5 285v1M548.5 289v3M548.5 293v2M549.5 287v1M549.5 290v1M549.5 293v2M549.5 297v1M550.5 288v1M550.5 290v1M551.5 265v1M551.5 288v1M551.5 290v3M552.5 239v1M552.5 289v2M552.5 292v4M553.5 249v33M553.5 283v3M553.5 287v3M554.5 247v1M554.5 277v1M554.5 288v6M554.5 295v1M555.5 249v1M555.5 259v1M555.5 289v6M556.5 290v4M556.5 295v1M556.5 304v1M557.5 256v26M557.5 285v1M557.5 287v1M557.5 289v1M558.5 232v1M558.5 257v1M558.5 288v1M558.5 290v3M558.5 294v1M558.5 304v1M559.5 227v1M559.5 264v1M559.5 289v5M559.5 304v1M560.5 289v1M560.5 291v4M561.5 289v1M561.5 291v1M561.5 293v2M561.5 304v1M562.5 291v2M562.5 294v2M563.5 232v50M563.5 283v1M563.5 285v1M563.5 289v1M564.5 253v1M564.5 288v2M564.5 291v2M564.5 294v1M564.5 304v1M565.5 234v1M565.5 286v2M565.5 290v3M565.5 294v1M565.5 304v1M566.5 290v1M566.5 292v1M566.5 295v1M567.5 254v1M567.5 266v16M567.5 284v3M567.5 288v1M567.5 290v1M568.5 276v1M568.5 289v3M568.5 293v1M569.5 288v2M569.5 291v1M569.5 293v2M570.5 228v54M570.5 283v1M570.5 285v1M570.5 287v2M570.5 304v1M571.5 274v1M571.5 289v2M571.5 292v1M571.5 294v1M571.5 304v1M572.5 254v1M572.5 289v5M572.5 304v1M573.5 252v1M573.5 289v5M574.5 287v1M574.5 289v5M575.5 287v1M575.5 289v2M575.5 292v1M575.5 294v3M576.5 229v53M576.5 284v6M576.5 291v1M576.5 304v1M577.5 290v3M577.5 294v2M577.5 304v1M578.5 257v25M578.5 284v1M578.5 286v4M578.5 291v1M578.5 304v1M579.5 230v1M579.5 290v3M579.5 294v1M579.5 296v1M579.5 304v1M580.5 262v1M580.5 288v2M580.5 291v3M580.5 296v1M580.5 304v1M581.5 245v1M581.5 290v2M581.5 293v3M581.5 304v1M582.5 289v4M582.5 295v1M582.5 304v1M583.5 252v30M583.5 287v1M583.5 289v1M583.5 304v1M584.5 248v34M584.5 284v1M584.5 286v1M584.5 290v1M584.5 304v1M585.5 240v1M585.5 274v1M585.5 290v3M586.5 253v1M586.5 288v2M586.5 292v2M586.5 304v1M587.5 289v3M587.5 298v1M588.5 244v1M588.5 289v2M588.5 292v4M588.5 304v1M589.5 284v1M589.5 286v1M589.5 289v1M589.5 292v3M590.5 253v29M590.5 286v4M590.5 304v1M591.5 229v53M591.5 286v3M592.5 248v1M592.5 286v1M592.5 288v1M592.5 290v1M592.5 292v4M592.5 304v1M593.5 229v1M593.5 245v37M593.5 288v1M594.5 253v1M594.5 288v7M594.5 304v1M595.5 289v2M595.5 292v3M595.5 304v1M596.5 268v1M596.5 288v6M596.5 297v1M596.5 304v1M597.5 229v1M597.5 291v1M597.5 304v1M598.5 264v1M598.5 287v1M598.5 290v1M598.5 292v1M598.5 294v2M598.5 304v1M599.5 285v1M599.5 291v1M599.5 293v2M599.5 304v1M600.5 261v21M600.5 285v1M600.5 287v1M600.5 289v1M600.5 304v1M601.5 246v1M601.5 288v2M601.5 291v5M601.5 297v1M601.5 304v1M602.5 263v1M602.5 289v2M602.5 292v1M603.5 227v1M603.5 237v1M603.5 285v1M603.5 287v1M603.5 290v5M604.5 230v1M604.5 287v5M604.5 293v2M604.5 296v1M604.5 304v1M605.5 291v2M606.5 239v1M606.5 290v3M607.5 286v1M607.5 290v3M607.5 304v1M608.5 229v1M608.5 253v1M608.5 288v1M608.5 292v2M608.5 304v1M609.5 290v4M609.5 295v1M609.5 297v2M609.5 304v1M610.5 253v2M610.5 289v1M610.5 291v1M610.5 293v1M610.5 295v1M610.5 297v1M611.5 288v1M611.5 290v4M611.5 295v1M612.5 265v2M612.5 291v3M612.5 304v1M613.5 227v55M613.5 283v1M613.5 285v2M613.5 288v1M613.5 304v1M614.5 234v48M614.5 284v3M614.5 304v1M615.5 289v1M615.5 291v2M615.5 304v1M616.5 232v1M616.5 263v19M616.5 284v5M617.5 289v4M617.5 294v1M617.5 304v1M618.5 290v2M618.5 304v1M619.5 231v1M619.5 292v1M619.5 294v1M619.5 296v1M619.5 304v1M620.5 248v1M620.5 289v5M620.5 296v1M620.5 304v1M621.5 249v1M621.5 291v2M621.5 294v1M621.5 304v1M622.5 247v35M622.5 283v1M622.5 286v1M622.5 288v3M623.5 270v1M623.5 288v2M623.5 291v3M623.5 304v1M624.5 288v3M624.5 304v1M625.5 289v4M625.5 294v1M625.5 296v1M625.5 298v1M626.5 275v1M626.5 290v2M626.5 304v1M627.5 237v1M627.5 251v1M627.5 289v4M627.5 294v1M627.5 304v1M628.5 263v1M628.5 291v1M628.5 293v2M629.5 250v1M629.5 261v1M629.5 287v1M629.5 290v3M629.5 294v1M629.5 296v1M629.5 304v1M630.5 288v7M631.5 270v1M631.5 291v2M631.5 304v1M632.5 249v33M632.5 285v2M632.5 288v2M632.5 304v1M633.5 239v43M633.5 286v1M633.5 288v1M633.5 290v1M633.5 304v1M634.5 249v33M634.5 284v1M634.5 286v2M634.5 289v1M634.5 291v1M634.5 304v1M635.5 250v1M635.5 286v1M635.5 288v1M635.5 290v5M635.5 304v1M636.5 239v1M636.5 289v1M636.5 293v1M636.5 304v1M637.5 234v1M637.5 289v2M637.5 292v3M637.5 304v1M638.5 250v1M638.5 262v1M638.5 287v1M638.5 289v3M638.5 295v1M639.5 235v1M639.5 238v44M639.5 283v5M639.5 289v1M639.5 291v1M640.5 246v1M640.5 267v1M640.5 288v2M640.5 291v1M640.5 293v1M640.5 297v1M640.5 304v1M641.5 290v1M641.5 304v1M642.5 230v1M642.5 248v1M642.5 290v1M642.5 292v2M642.5 296v1M643.5 290v3M643.5 294v2M644.5 290v4M644.5 304v1M645.5 289v5M645.5 304v1M646.5 258v1M646.5 289v1M646.5 291v5M646.5 304v1M647.5 230v52M647.5 288v3M647.5 304v1M648.5 257v25M648.5 283v2M648.5 287v2M648.5 290v1M648.5 304v1M649.5 278v1M649.5 289v3M649.5 293v2M649.5 304v1M650.5 287v2M650.5 290v4M651.5 246v1M651.5 289v5M651.5 304v1M652.5 262v1M652.5 288v1M652.5 290v3M652.5 304v1M653.5 289v4M653.5 304v1M654.5 245v1M654.5 287v1M654.5 289v4M654.5 295v1M655.5 230v1M655.5 244v38M655.5 285v2M655.5 289v1M655.5 291v1M655.5 304v1M656.5 260v1M656.5 290v3M656.5 294v1M656.5 297v1M656.5 304v1M657.5 290v4M657.5 296v1M657.5 304v1M658.5 246v36M658.5 284v2M658.5 287v3M658.5 291v1M658.5 304v1M659.5 239v1M659.5 263v1M659.5 289v5M660.5 279v1M660.5 289v1M660.5 291v3M660.5 304v1M661.5 287v1M661.5 290v4M661.5 295v1M662.5 291v1M662.5 293v1M663.5 227v55M663.5 285v2M663.5 288v3M664.5 290v5M664.5 297v1M665.5 231v1M665.5 244v39M665.5 285v2M665.5 288v2M666.5 277v1M666.5 289v3M666.5 293v2M666.5 304v1M667.5 288v1M667.5 290v2M667.5 293v1M667.5 304v1M668.5 239v43M668.5 283v2M668.5 286v2M668.5 290v1M669.5 287v2M669.5 290v3M669.5 294v1M670.5 288v1M670.5 290v2M670.5 293v1M671.5 246v37M671.5 285v1M671.5 288v3M672.5 289v8M673.5 289v1M673.5 291v3M673.5 296v1M674.5 245v37M674.5 285v6M674.5 304v1M675.5 230v1M675.5 288v1M675.5 290v3M675.5 304v1M676.5 289v6M676.5 304v1M677.5 288v2M677.5 293v1M678.5 233v1M678.5 290v1M678.5 292v1M678.5 295v1M678.5 304v1M679.5 289v4M679.5 304v1M680.5 233v1M680.5 288v5M680.5 296v1M681.5 242v40M681.5 284v6M682.5 270v1M682.5 289v1M682.5 292v1M683.5 233v1M683.5 288v1M683.5 290v2M683.5 293v3M684.5 230v52M684.5 286v3"/><path stroke="#dada00" d="M84.5 294v4M85.5 291v1M85.5 293v4M85.5 298v1M86.5 289v1M86.5 291v2M86.5 294v1M87.5 293v6M88.5 288v1M88.5 290v4M89.5 295v1M89.5 297v1M90.5 295v3M91.5 288v2M91.5 291v1M92.5 289v4M92.5 294v1M93.5 293v6M94.5 294v4M95.5 292v1M95.5 296v3M96.5 288v7M97.5 292v1M97.5 295v4M98.5 287v1M98.5 289v6M99.5 293v1M99.5 295v1M99.5 297v2M100.5 290v1M100.5 293v2M100.5 296v3M101.5 296v3M102.5 289v1M102.5 293v2M103.5 294v5M104.5 294v2M104.5 297v2M105.5 293v1M105.5 295v1M105.5 297v2M106.5 292v2M106.5 295v3M107.5 294v1M107.5 296v3M108.5 293v2M108.5 296v3M109.5 293v6M110.5 295v3M111.5 294v2M111.5 297v2M112.5 292v2M113.5 295v3M114.5 292v3M115.5 293v6M116.5 295v3M117.5 289v5M117.5 296v2M118.5 291v1M118.5 294v1M118.5 296v2M119.5 294v4M120.5 296v3M121.5 293v1M121.5 295v1M121.5 297v2M122.5 292v1M122.5 295v3M123.5 289v3M123.5 294v1M123.5 297v1M124.5 287v2M124.5 290v2M124.5 294v1M125.5 294v1M125.5 296v1M125.5 298v1M126.5 294v5M127.5 295v2M127.5 298v1M128.5 288v1M128.5 291v3M128.5 295v1M129.5 294v1M129.5 297v2M130.5 287v1M130.5 289v1M130.5 291v1M131.5 287v7M132.5 293v1M132.5 295v4M133.5 292v3M133.5 296v3M134.5 291v2M134.5 294v4M135.5 293v6M136.5 294v4M137.5 292v3M137.5 296v2M138.5 294v4M139.5 292v2M139.5 296v2M140.5 295v4M141.5 294v1M141.5 296v3M142.5 288v1M142.5 290v1M142.5 292v2M143.5 290v2M143.5 294v1M144.5 293v6M145.5 295v4M146.5 293v1M146.5 295v2M146.5 298v1M147.5 292v1M147.5 294v5M148.5 289v1M148.5 293v1M148.5 295v3M149.5 292v1M149.5 295v4M150.5 288v1M150.5 292v2M151.5 287v1M151.5 293v1M152.5 292v1M152.5 295v3M153.5 293v2M153.5 296v2M154.5 291v1M154.5 295v1M154.5 297v1M155.5 296v2M156.5 295v4M157.5 291v2M157.5 295v3M158.5 287v3M158.5 291v3M159.5 294v2M159.5 297v2M160.5 289v5M160.5 296v1M161.5 293v1M161.5 296v1M161.5 298v1M162.5 295v4M163.5 288v4M163.5 293v1M164.5 290v1M164.5 293v3M165.5 287v1M165.5 289v1M165.5 291v5M166.5 287v1M166.5 289v1M166.5 291v4M167.5 292v7M168.5 289v4M168.5 295v1M169.5 293v6M170.5 287v1M170.5 290v6M171.5 296v2M172.5 295v3M173.5 294v4M174.5 288v3M174.5 294v2M175.5 292v7M176.5 287v1M176.5 289v3M176.5 293v1M176.5 295v1M177.5 292v1M177.5 294v4M178.5 292v7M179.5 292v1M179.5 294v1M179.5 296v3M180.5 295v1M180.5 297v2M181.5 295v3M182.5 289v1M182.5 291v2M183.5 289v4M184.5 292v1M184.5 294v1M184.5 296v3M185.5 293v1M185.5 296v3M186.5 295v3M187.5 295v1M187.5 297v1M188.5 291v4M189.5 295v1M189.5 298v1M190.5 289v1M190.5 291v4M191.5 294v4M192.5 291v3M192.5 297v1M193.5 290v3M193.5 294v1M194.5 290v1M194.5 292v1M194.5 294v2M195.5 287v1M195.5 289v4M196.5 290v1M196.5 292v1M196.5 295v2M197.5 292v1M197.5 295v3M198.5 294v1M198.5 296v3M199.5 293v1M199.5 295v4M200.5 293v1M200.5 296v3M201.5 289v5M202.5 292v1M202.5 294v3M203.5 293v6M204.5 294v1M204.5 296v1M205.5 293v6M206.5 292v1M206.5 294v5M207.5 286v1M207.5 288v4M208.5 289v1M208.5 291v4M209.5 292v6M210.5 295v2M211.5 293v1M211.5 298v1M212.5 289v1M212.5 291v2M212.5 294v1M213.5 295v3M214.5 292v1M214.5 294v1M214.5 296v2M215.5 288v4M216.5 292v1M216.5 294v1M216.5 296v1M216.5 298v1M217.5 288v1M217.5 292v3M217.5 296v1M218.5 293v1M218.5 295v2M219.5 285v1M219.5 291v3M219.5 296v1M220.5 291v2M220.5 294v4M221.5 289v1M221.5 291v1M221.5 293v1M222.5 293v2M222.5 296v2M223.5 295v3M224.5 294v3M225.5 294v1M225.5 298v1M226.5 289v3M226.5 293v1M226.5 296v1M227.5 290v1M227.5 293v1M227.5 297v1M228.5 292v1M228.5 294v2M228.5 297v2M229.5 295v4M230.5 290v3M231.5 288v2M231.5 291v3M232.5 289v3M232.5 293v2M234.5 293v1M234.5 295v3M235.5 293v5M236.5 292v2M236.5 297v1M237.5 294v4M238.5 293v1M238.5 296v1M239.5 292v1M239.5 294v1M240.5 295v4M241.5 286v1M241.5 288v1M241.5 290v2M241.5 293v1M241.5 296v1M242.5 294v1M242.5 297v2M243.5 287v1M243.5 289v4M243.5 294v3M244.5 293v1M244.5 296v1M245.5 286v2M245.5 289v5M245.5 295v1M246.5 290v4M247.5 293v6M248.5 295v2M249.5 288v6M249.5 295v1M250.5 294v1M250.5 297v2M251.5 288v1M251.5 290v3M251.5 294v1M252.5 289v5M252.5 297v1M253.5 294v5M254.5 292v1M254.5 296v1M254.5 298v1M255.5 289v7M256.5 289v3M256.5 293v2M257.5 296v3M258.5 292v1M258.5 295v3M259.5 287v1M259.5 289v1M259.5 291v4M260.5 287v1M260.5 290v1M261.5 292v1M261.5 295v4M262.5 295v3M263.5 292v2M263.5 295v1M263.5 297v1M264.5 295v4M265.5 293v4M265.5 298v1M266.5 290v5M267.5 293v1M267.5 295v4M268.5 293v1M268.5 295v3M269.5 292v6M270.5 294v1M270.5 296v3M271.5 294v1M271.5 296v1M272.5 294v2M272.5 297v2M273.5 293v6M274.5 293v2M274.5 296v1M275.5 288v3M275.5 292v1M275.5 294v1M276.5 289v4M277.5 291v2M277.5 294v2M278.5 289v5M279.5 295v1M279.5 297v2M280.5 293v4M280.5 298v1M281.5 291v6M281.5 298v1M282.5 294v2M282.5 297v1M283.5 294v5M284.5 294v4M285.5 294v2M285.5 297v1M286.5 293v1M286.5 296v3M287.5 288v7M287.5 296v1M288.5 293v1M288.5 295v3M289.5 289v3M289.5 293v4M290.5 290v5M291.5 287v1M291.5 289v2M291.5 292v1M292.5 294v4M293.5 288v2M293.5 291v1M293.5 293v4M294.5 294v2M294.5 297v1M295.5 294v3M295.5 298v1M296.5 297v2M297.5 290v2M297.5 294v1M298.5 291v1M298.5 293v2M299.5 293v1M299.5 296v3M300.5 291v2M300.5 296v2M301.5 297v1M302.5 290v7M303.5 295v3M304.5 288v1M304.5 290v5M305.5 290v1M305.5 292v2M306.5 286v1M306.5 289v6M307.5 295v4M308.5 294v1M308.5 297v2M309.5 293v1M309.5 296v3M310.5 290v6M311.5 293v2M311.5 296v2M312.5 289v1M312.5 291v5M313.5 294v3M314.5 292v1M314.5 294v4M315.5 293v6M316.5 296v2M317.5 293v6M318.5 293v1M318.5 296v3M319.5 294v4M320.5 292v1M320.5 294v1M320.5 297v1M321.5 294v4M322.5 294v1M322.5 297v1M323.5 294v3M324.5 293v1M324.5 295v1M324.5 297v2M325.5 294v1M325.5 296v3M326.5 293v2M326.5 298v1M327.5 293v1M327.5 295v4M328.5 293v2M328.5 298v1M329.5 294v5M330.5 294v1M330.5 296v1M331.5 294v1M331.5 296v3M332.5 292v2M332.5 295v2M333.5 291v4M334.5 292v1M334.5 294v4M335.5 293v1M335.5 297v2M336.5 294v1M336.5 296v1M336.5 298v1M337.5 295v1M337.5 297v1M338.5 290v6M339.5 292v1M339.5 295v2M340.5 291v1M340.5 294v1M340.5 296v3M341.5 294v5M342.5 292v1M342.5 294v4M343.5 289v2M343.5 292v3M344.5 289v1M344.5 292v3M345.5 291v3M345.5 295v2M345.5 298v1M346.5 295v3M347.5 295v1M347.5 297v2M348.5 288v2M348.5 291v4M349.5 290v4M349.5 296v1M350.5 293v5M351.5 292v1M351.5 294v3M351.5 298v1M352.5 289v5M353.5 294v4M354.5 291v1M354.5 297v2M355.5 295v1M355.5 297v1M356.5 293v2M356.5 296v1M356.5 298v1M357.5 294v5M358.5 294v1M358.5 296v1M359.5 292v3M359.5 296v2M360.5 295v3M361.5 295v3M362.5 290v1M362.5 292v1M362.5 294v1M363.5 295v2M364.5 291v3M364.5 295v2M364.5 298v1M365.5 294v5M366.5 295v4M367.5 295v1M367.5 298v1M368.5 291v2M369.5 294v5M370.5 294v5M371.5 295v3M372.5 292v1M372.5 294v2M372.5 297v1M373.5 291v1M373.5 293v2M374.5 289v1M374.5 291v3M375.5 296v3M376.5 291v1M376.5 295v1M376.5 297v2M377.5 287v1M377.5 292v3M378.5 293v1M378.5 297v2M379.5 294v2M379.5 297v2M380.5 293v2M380.5 296v2M381.5 290v1M381.5 292v2M382.5 294v2M382.5 297v2M383.5 287v1M383.5 289v3M383.5 293v2M383.5 296v1M384.5 294v4M385.5 289v1M385.5 292v2M386.5 291v1M386.5 293v6M387.5 292v1M387.5 294v1M387.5 296v3M388.5 292v2M388.5 296v1M388.5 298v1M389.5 289v1M389.5 291v3M389.5 295v1M390.5 293v2M390.5 297v2M391.5 292v1M391.5 296v1M391.5 298v1M392.5 293v1M392.5 295v1M392.5 297v1M393.5 289v5M393.5 295v1M394.5 286v1M394.5 289v1M394.5 291v1M394.5 293v1M394.5 295v2M395.5 288v1M395.5 291v2M396.5 289v1M396.5 291v3M397.5 294v1M397.5 296v2M398.5 294v4M399.5 295v3M400.5 289v6M401.5 292v2M401.5 295v4M402.5 293v1M402.5 296v1M402.5 298v1M403.5 288v1M403.5 290v1M403.5 292v3M404.5 288v6M404.5 296v1M405.5 295v2M406.5 290v1M406.5 293v6M407.5 296v2M408.5 293v1M408.5 295v4M409.5 296v3M410.5 291v1M410.5 294v1M411.5 295v4M412.5 288v2M412.5 291v3M413.5 295v4M414.5 293v6M415.5 294v2M415.5 297v2M416.5 289v5M417.5 293v1M417.5 296v2M418.5 289v4M418.5 294v1M419.5 292v1M419.5 294v4M420.5 291v1M420.5 295v1M420.5 297v2M421.5 296v2M422.5 290v1M422.5 292v2M423.5 289v2M423.5 293v2M424.5 293v1M424.5 296v2M425.5 287v1M425.5 289v2M425.5 292v1M426.5 293v2M426.5 297v1M427.5 296v3M428.5 298v1M429.5 288v1M429.5 290v2M429.5 294v1M430.5 293v6M431.5 290v5M432.5 290v6M433.5 296v1M433.5 298v1M434.5 293v5M435.5 290v1M435.5 294v1M435.5 296v3M436.5 291v3M436.5 295v4M437.5 288v3M437.5 292v2M437.5 295v1M438.5 293v3M438.5 298v1M439.5 289v6M440.5 291v5M441.5 292v3M441.5 296v3M442.5 295v4M443.5 291v1M443.5 294v1M444.5 292v6M445.5 294v2M445.5 297v2M446.5 291v2M446.5 295v1M447.5 293v1M447.5 295v4M448.5 291v1M448.5 295v4M449.5 291v1M449.5 294v2M450.5 294v5M451.5 287v1M451.5 289v5M452.5 294v2M452.5 297v1M453.5 294v5M454.5 289v6M455.5 294v5M456.5 295v3M457.5 293v1M457.5 295v4M458.5 296v1M458.5 298v1M459.5 290v1M459.5 295v4M460.5 294v1M460.5 296v1M460.5 298v1M461.5 294v1M461.5 296v2M462.5 294v1M462.5 296v3M463.5 291v1M463.5 293v1M463.5 295v3M464.5 295v2M465.5 292v1M465.5 295v3M466.5 295v1M466.5 298v1M467.5 291v1M467.5 294v1M467.5 296v2M468.5 292v7M469.5 289v1M469.5 291v2M470.5 294v1M470.5 296v1M471.5 294v1M471.5 296v3M472.5 293v4M472.5 298v1M473.5 296v2M474.5 287v5M474.5 293v1M475.5 294v5M476.5 295v3M477.5 294v4M478.5 293v1M478.5 295v1M478.5 298v1M479.5 288v2M479.5 291v2M480.5 289v1M480.5 294v4M481.5 294v4M482.5 291v1M482.5 294v5M483.5 292v1M483.5 294v4M484.5 295v3M485.5 291v1M485.5 295v3M486.5 288v1M486.5 290v3M487.5 292v1M487.5 294v3M487.5 298v1M488.5 295v3M489.5 286v1M489.5 291v2M489.5 294v2M490.5 292v1M490.5 295v3M491.5 288v6M491.5 295v1M492.5 295v4M493.5 289v6M494.5 295v4M495.5 290v2M495.5 293v2M496.5 290v4M497.5 293v5M498.5 294v3M498.5 298v1M499.5 294v5M500.5 293v2M500.5 297v2M501.5 293v2M501.5 296v3M502.5 287v1M502.5 291v2M502.5 295v1M503.5 293v6M504.5 288v2M504.5 291v2M505.5 291v2M506.5 295v4M507.5 292v1M507.5 294v1M507.5 297v1M508.5 294v4M509.5 293v1M509.5 295v2M510.5 290v1M510.5 292v3M511.5 291v1M511.5 295v3M512.5 294v3M512.5 298v1M513.5 296v2M514.5 288v3M514.5 292v4M515.5 293v2M515.5 296v3M516.5 294v3M516.5 298v1M517.5 294v1M517.5 297v2M518.5 291v1M518.5 295v2M518.5 298v1M519.5 288v6M520.5 290v3M521.5 296v3M522.5 289v7M523.5 295v3M524.5 288v1M524.5 290v3M524.5 294v2M525.5 289v4M526.5 289v4M526.5 294v2M527.5 293v2M527.5 296v1M528.5 287v1M528.5 289v5M529.5 293v6M530.5 288v1M530.5 290v1M530.5 292v2M530.5 295v1M531.5 288v1M531.5 290v3M531.5 296v1M532.5 294v1M532.5 297v2M533.5 295v4M534.5 295v2M535.5 295v3M536.5 293v5M537.5 293v3M537.5 297v1M538.5 296v2M539.5 288v1M539.5 290v1M539.5 292v4M540.5 295v3M541.5 287v1M541.5 289v1M541.5 291v2M542.5 296v1M543.5 287v1M543.5 291v1M544.5 287v1M544.5 290v4M544.5 295v1M544.5 298v1M545.5 290v6M546.5 291v1M546.5 294v5M547.5 292v1M547.5 295v4M548.5 292v1M548.5 295v3M549.5 295v2M549.5 298v1M550.5 292v7M551.5 293v6M552.5 296v1M552.5 298v1M553.5 291v1M553.5 293v2M554.5 294v1M554.5 296v3M555.5 295v4M556.5 294v1M556.5 296v1M556.5 298v1M557.5 290v2M557.5 293v1M558.5 293v1M558.5 295v3M559.5 294v2M559.5 297v2M560.5 295v4M561.5 292v1M561.5 295v3M562.5 293v1M562.5 296v2M563.5 288v1M563.5 290v1M563.5 292v3M564.5 293v1M564.5 295v2M564.5 298v1M565.5 293v1M565.5 295v3M566.5 291v1M566.5 293v2M566.5 297v1M567.5 289v1M567.5 291v2M567.5 295v1M567.5 297v1M568.5 294v3M568.5 298v1M569.5 292v1M569.5 295v3M570.5 289v5M571.5 293v1M571.5 295v4M572.5 294v4M573.5 294v1M573.5 296v3M574.5 294v5M575.5 293v1M575.5 297v2M576.5 290v1M576.5 292v1M576.5 294v3M577.5 293v1M577.5 296v1M578.5 290v1M578.5 292v3M578.5 296v1M579.5 293v1M579.5 295v1M579.5 297v1M580.5 294v2M580.5 298v1M581.5 292v1M581.5 296v1M582.5 293v2M582.5 296v3M583.5 284v1M583.5 288v1M583.5 290v6M584.5 288v2M584.5 291v1M585.5 293v4M585.5 298v1M586.5 294v5M587.5 292v6M588.5 296v2M589.5 291v1M589.5 295v4M590.5 290v2M590.5 294v1M591.5 289v6M592.5 291v1M592.5 296v1M593.5 287v1M593.5 289v4M593.5 295v1M594.5 295v3M595.5 295v1M595.5 297v2M596.5 295v2M596.5 298v1M597.5 290v1M597.5 292v5M598.5 293v1M598.5 296v3M599.5 292v1M599.5 295v1M599.5 297v2M600.5 288v1M600.5 290v4M601.5 296v1M601.5 298v1M602.5 293v4M602.5 298v1M603.5 295v4M604.5 295v1M604.5 298v1M605.5 290v1M605.5 293v6M606.5 293v6M607.5 293v4M607.5 298v1M608.5 294v4M609.5 294v1M609.5 296v1M610.5 292v1M610.5 294v1M610.5 296v1M611.5 294v1M611.5 296v1M611.5 298v1M612.5 294v4M613.5 287v1M613.5 289v5M613.5 296v1M614.5 287v7M614.5 295v1M615.5 293v6M616.5 289v5M617.5 293v1M617.5 295v2M618.5 292v5M619.5 295v1M619.5 297v2M620.5 294v2M620.5 297v2M621.5 293v1M621.5 295v4M622.5 287v1M622.5 291v4M623.5 294v3M623.5 298v1M624.5 293v4M624.5 298v1M625.5 293v1M625.5 295v1M626.5 292v4M626.5 297v2M627.5 293v1M627.5 295v3M628.5 288v1M628.5 292v1M628.5 295v1M628.5 298v1M629.5 293v1M629.5 295v1M629.5 297v2M630.5 295v3M631.5 293v6M632.5 290v2M632.5 293v2M633.5 287v1M633.5 289v1M633.5 291v2M633.5 294v1M634.5 288v1M634.5 290v1M634.5 292v2M635.5 295v4M636.5 290v1M636.5 292v1M636.5 294v5M637.5 296v1M637.5 298v1M638.5 292v3M638.5 296v3M639.5 288v1M639.5 290v1M639.5 293v2M640.5 295v2M640.5 298v1M641.5 292v7M642.5 294v2M643.5 293v1M643.5 296v2M644.5 294v5M645.5 294v2M645.5 298v1M646.5 296v3M647.5 286v1M647.5 291v1M647.5 293v1M648.5 289v1M648.5 291v3M648.5 295v1M649.5 292v1M649.5 295v3M650.5 294v5M651.5 294v3M651.5 298v1M652.5 294v5M653.5 294v5M654.5 293v2M654.5 296v3M655.5 288v1M655.5 290v1M655.5 292v2M656.5 293v1M656.5 295v2M656.5 298v1M657.5 294v2M657.5 297v2M658.5 290v1M658.5 294v1M658.5 296v1M659.5 294v3M660.5 294v4M661.5 294v1M661.5 296v3M662.5 292v1M662.5 294v1M662.5 296v1M662.5 298v1M663.5 287v1M663.5 291v2M664.5 295v2M664.5 298v1M665.5 287v1M665.5 290v3M665.5 295v1M666.5 295v4M667.5 292v1M667.5 294v4M668.5 288v2M668.5 291v2M668.5 294v2M669.5 293v1M669.5 295v4M670.5 292v1M670.5 294v4M671.5 291v5M672.5 297v2M673.5 294v2M673.5 297v2M674.5 291v5M675.5 294v5M676.5 295v3M677.5 290v1M677.5 294v5M678.5 291v1M678.5 293v2M678.5 296v3M679.5 293v6M680.5 293v3M680.5 297v2M681.5 290v2M681.5 293v3M682.5 293v4M682.5 298v1M683.5 296v2M684.5 289v5"/><path stroke="#e4e400" d="M84.5 298v1M85.5 297v1M86.5 290v1M86.5 293v1M86.5 295v4M88.5 294v5M89.5 296v1M89.5 298v1M90.5 298v1M91.5 292v2M91.5 295v4M92.5 293v1M92.5 295v4M94.5 298v1M96.5 295v4M98.5 295v4M99.5 296v1M102.5 292v1M102.5 295v4M104.5 296v1M106.5 298v1M107.5 295v1M112.5 294v5M113.5 298v1M114.5 291v1M114.5 295v4M116.5 298v1M117.5 294v2M117.5 298v1M118.5 298v1M119.5 298v1M122.5 298v1M123.5 293v1M123.5 295v2M123.5 298v1M124.5 292v2M124.5 295v4M128.5 294v1M128.5 296v3M130.5 292v7M131.5 294v5M134.5 298v1M136.5 298v1M137.5 298v1M138.5 298v1M139.5 298v1M142.5 294v5M143.5 292v2M143.5 295v4M146.5 297v1M148.5 298v1M150.5 294v5M151.5 291v2M151.5 294v5M152.5 298v1M153.5 298v1M154.5 298v1M155.5 298v1M157.5 298v1M158.5 294v5M160.5 294v2M160.5 297v2M161.5 295v1M161.5 297v1M163.5 292v1M163.5 294v5M164.5 292v1M164.5 296v3M165.5 296v3M166.5 295v4M168.5 293v2M168.5 296v3M170.5 296v3M171.5 298v1M172.5 298v1M173.5 298v1M174.5 291v1M174.5 293v1M174.5 296v3M176.5 292v1M176.5 294v1M176.5 296v3M177.5 298v1M181.5 298v1M182.5 293v6M183.5 293v6M186.5 298v1M187.5 298v1M188.5 295v4M189.5 296v2M190.5 295v4M191.5 298v1M192.5 294v3M192.5 298v1M193.5 293v1M193.5 295v4M194.5 293v1M194.5 296v3M195.5 293v6M196.5 293v2M196.5 297v2M197.5 298v1M201.5 294v5M202.5 298v1M204.5 298v1M207.5 292v7M208.5 290v1M208.5 295v4M209.5 298v1M210.5 297v2M211.5 296v2M212.5 293v1M212.5 295v4M213.5 298v1M214.5 298v1M215.5 292v7M217.5 295v1M217.5 297v2M218.5 297v2M219.5 290v1M219.5 294v2M219.5 297v2M220.5 298v1M221.5 292v1M221.5 294v5M222.5 298v1M223.5 298v1M224.5 297v2M225.5 297v1M226.5 294v2M226.5 297v2M227.5 292v1M227.5 294v3M227.5 298v1M228.5 296v1M230.5 293v6M231.5 294v5M232.5 292v1M232.5 295v4M233.5 297v2M234.5 298v1M235.5 298v1M236.5 298v1M237.5 298v1M238.5 295v1M238.5 297v2M239.5 296v3M241.5 292v1M241.5 294v2M241.5 297v2M243.5 293v1M243.5 297v2M244.5 297v2M245.5 294v1M245.5 296v3M246.5 294v5M248.5 297v2M249.5 294v1M249.5 296v3M251.5 295v4M252.5 294v3M252.5 298v1M254.5 297v1M255.5 296v3M256.5 292v1M256.5 295v4M258.5 298v1M259.5 295v4M260.5 293v6M262.5 298v1M263.5 298v1M266.5 295v4M268.5 298v1M269.5 298v1M271.5 297v2M274.5 297v2M275.5 293v1M275.5 295v4M276.5 293v6M277.5 293v1M277.5 296v3M278.5 294v5M280.5 297v1M281.5 297v1M282.5 296v1M282.5 298v1M283.5 293v1M284.5 298v1M285.5 296v1M285.5 298v1M287.5 295v1M287.5 297v2M288.5 298v1M289.5 292v1M289.5 297v2M290.5 295v4M291.5 293v6M292.5 298v1M293.5 297v2M294.5 296v1M294.5 298v1M297.5 292v2M297.5 295v4M298.5 292v1M298.5 295v4M300.5 298v1M301.5 298v1M302.5 298v1M303.5 298v1M304.5 295v4M305.5 294v5M306.5 295v4M308.5 296v1M310.5 296v3M311.5 298v1M312.5 296v3M313.5 297v2M314.5 298v1M316.5 298v1M319.5 298v1M320.5 296v1M320.5 298v1M321.5 298v1M322.5 298v1M323.5 298v1M324.5 296v1M326.5 296v2M328.5 296v1M330.5 298v1M332.5 298v1M333.5 295v4M334.5 298v1M337.5 298v1M338.5 296v3M339.5 298v1M342.5 298v1M343.5 291v1M343.5 295v4M344.5 291v1M344.5 295v4M345.5 294v1M346.5 298v1M347.5 296v1M348.5 295v4M349.5 294v2M349.5 297v2M350.5 298v1M351.5 297v1M352.5 294v5M353.5 298v1M355.5 298v1M358.5 297v2M359.5 298v1M360.5 298v1M361.5 298v1M362.5 291v1M362.5 295v4M363.5 297v2M364.5 297v1M368.5 293v6M371.5 294v1M371.5 298v1M372.5 296v1M372.5 298v1M373.5 292v1M373.5 295v4M374.5 294v5M377.5 295v4M378.5 296v1M379.5 296v1M380.5 298v1M381.5 291v1M381.5 294v5M382.5 296v1M383.5 292v1M383.5 295v1M383.5 297v2M384.5 298v1M385.5 291v1M385.5 294v5M388.5 297v1M389.5 294v1M389.5 296v3M391.5 297v1M392.5 296v1M392.5 298v1M393.5 294v1M393.5 296v3M394.5 294v1M394.5 297v2M395.5 293v6M396.5 294v5M397.5 298v1M398.5 298v1M399.5 298v1M400.5 295v4M402.5 297v1M403.5 291v1M403.5 295v4M404.5 294v2M404.5 297v2M405.5 297v2M407.5 298v1M410.5 293v1M410.5 295v4M412.5 294v5M415.5 296v1M416.5 294v5M417.5 298v1M418.5 293v1M418.5 295v4M419.5 298v1M421.5 298v1M422.5 294v5M423.5 292v1M423.5 295v4M424.5 298v1M425.5 293v6M426.5 295v1M428.5 297v1M429.5 292v2M429.5 295v4M431.5 295v4M432.5 296v3M433.5 294v1M433.5 297v1M434.5 298v1M437.5 294v1M437.5 296v3M438.5 297v1M439.5 295v4M440.5 296v3M443.5 298v1M444.5 298v1M445.5 296v1M446.5 293v2M446.5 296v3M449.5 292v2M449.5 296v3M451.5 294v5M452.5 298v1M454.5 295v4M456.5 298v1M460.5 297v1M461.5 298v1M463.5 298v1M464.5 297v2M465.5 298v1M466.5 297v1M467.5 298v1M469.5 293v6M470.5 295v1M470.5 297v2M473.5 298v1M474.5 292v1M474.5 294v5M476.5 298v1M477.5 298v1M478.5 297v1M479.5 294v5M480.5 298v1M481.5 298v1M483.5 298v1M484.5 298v1M485.5 298v1M486.5 293v6M487.5 297v1M488.5 298v1M489.5 293v1M489.5 296v3M490.5 298v1M491.5 294v1M491.5 296v3M493.5 295v4M495.5 292v1M495.5 295v4M496.5 294v5M497.5 298v1M498.5 297v1M500.5 296v1M502.5 293v2M502.5 296v3M504.5 293v6M505.5 293v6M507.5 298v1M508.5 298v1M509.5 298v1M510.5 295v4M511.5 298v1M512.5 297v1M513.5 298v1M514.5 296v3M516.5 297v1M518.5 297v1M519.5 294v5M520.5 293v6M522.5 296v3M523.5 298v1M524.5 293v1M524.5 296v3M525.5 293v6M526.5 293v1M526.5 296v3M527.5 297v2M528.5 294v5M530.5 294v1M530.5 296v3M531.5 293v3M531.5 297v2M532.5 295v2M534.5 298v1M535.5 298v1M536.5 298v1M537.5 298v1M538.5 298v1M539.5 296v3M540.5 298v1M541.5 293v6M542.5 297v2M543.5 293v6M544.5 294v1M544.5 296v2M545.5 296v3M548.5 298v1M552.5 297v1M553.5 290v1M553.5 292v1M553.5 295v4M556.5 297v1M557.5 292v1M557.5 294v5M558.5 298v1M559.5 296v1M561.5 298v1M562.5 298v1M563.5 291v1M563.5 295v4M564.5 297v1M565.5 298v1M566.5 296v1M566.5 298v1M567.5 293v2M567.5 296v1M567.5 298v1M568.5 297v1M569.5 298v1M570.5 294v5M572.5 298v1M573.5 295v1M576.5 293v1M576.5 297v2M577.5 297v2M578.5 295v1M578.5 297v2M579.5 298v1M580.5 297v1M581.5 297v2M583.5 296v3M584.5 292v7M585.5 297v1M588.5 298v1M590.5 292v2M590.5 295v4M591.5 295v4M592.5 297v2M593.5 293v2M593.5 296v3M594.5 298v1M595.5 296v1M597.5 297v2M599.5 296v1M600.5 294v5M602.5 297v1M604.5 297v1M607.5 297v1M608.5 298v1M610.5 298v1M611.5 297v1M612.5 298v1M613.5 294v2M613.5 297v2M614.5 294v1M614.5 296v3M616.5 294v5M617.5 297v2M618.5 297v2M622.5 295v4M623.5 297v1M624.5 297v1M625.5 297v1M626.5 296v1M627.5 298v1M628.5 296v2M630.5 298v1M632.5 292v1M632.5 295v4M633.5 293v1M633.5 295v4M634.5 294v5M637.5 295v1M637.5 297v1M639.5 292v1M639.5 295v4M642.5 297v2M643.5 298v1M645.5 296v2M647.5 292v1M647.5 294v5M648.5 294v1M648.5 296v3M649.5 298v1M651.5 297v1M655.5 294v5M658.5 292v2M658.5 295v1M658.5 297v2M659.5 297v2M660.5 298v1M662.5 295v1M662.5 297v1M663.5 293v6M665.5 293v2M665.5 296v3M667.5 298v1M668.5 293v1M668.5 296v3M670.5 298v1M671.5 296v3M674.5 296v3M676.5 298v1M681.5 292v1M681.5 296v3M682.5 297v1M683.5 298v1M684.5 294v5"/><path stroke="#f0f000" d="M84.5 299v5M85.5 299v5M86.5 299v5M87.5 299v5M88.5 299v5M89.5 299v5M90.5 299v5M91.5 299v5M92.5 299v5M93.5 299v5M94.5 299v5M95.5 299v5M96.5 299v5M97.5 299v5M98.5 299v5M99.5 299v5M100.5 299v5M101.5 299v5M102.5 299v5M103.5 299v5M104.5 299v5M105.5 299v5M106.5 299v5M107.5 299v5M108.5 299v5M109.5 299v5M110.5 299v5M111.5 299v5M112.5 299v5M113.5 299v5M114.5 299v5M115.5 299v5M116.5 299v5M117.5 299v5M118.5 299v5M119.5 299v5M120.5 299v5M121.5 299v5M122.5 299v5M123.5 299v5M124.5 299v5M125.5 299v5M126.5 299v5M127.5 299v5M128.5 299v5M129.5 299v5M130.5 299v5M131.5 299v5M132.5 299v5M133.5 299v5M134.5 299v5M135.5 299v5M136.5 299v5M137.5 299v5M138.5 299v5M139.5 299v5M140.5 299v5M141.5 299v5M142.5 299v5M143.5 299v5M144.5 299v5M145.5 299v5M146.5 299v5M147.5 299v5M148.5 299v5M149.5 299v5M150.5 299v5M151.5 299v5M152.5 299v5M153.5 299v5M154.5 299v5M155.5 299v5M156.5 299v5M157.5 299v5M158.5 299v5M159.5 299v5M160.5 299v5M161.5 299v5M162.5 299v5M163.5 299v5M164.5 299v5M165.5 299v5M166.5 299v5M167.5 299v5M168.5 299v5M169.5 299v5M170.5 299v5M171.5 299v5M172.5 299v5M173.5 299v5M174.5 299v5M175.5 299v5M176.5 299v5M177.5 299v5M178.5 299v5M179.5 299v5M180.5 299v5M181.5 299v5M182.5 299v5M183.5 299v5M184.5 299v5M185.5 299v5M186.5 299v5M187.5 299v5M188.5 299v5M189.5 299v5M190.5 299v5M191.5 299v5M192.5 299v5M193.5 299v5M194.5 299v5M195.5 299v5M196.5 299v5M197.5 299v5M198.5 299v5M199.5 299v5M200.5 299v5M201.5 299v5M202.5 299v5M203.5 299v5M204.5 299v5M205.5 299v5M206.5 299v5M207.5 299v5M208.5 299v5M209.5 299v5M210.5 299v5M211.5 299v5M212.5 299v5M213.5 299v5M214.5 299v5M215.5 299v5M216.5 299v5M217.5 299v5M218.5 299v5M219.5 299v5M220.5 299v5M221.5 299v5M222.5 299v5M223.5 299v5M224.5 299v5M225.5 299v5M226.5 299v5M227.5 299v5M228.5 299v5M229.5 299v5M230.5 299v5M231.5 299v5M232.5 299v5M233.5 299v5M234.5 299v5M235.5 299v5M236.5 299v5M237.5 299v5M238.5 299v5M239.5 299v5M240.5 299v5M241.5 299v5M242.5 299v5M243.5 299v5M244.5 299v5M245.5 299v5M246.5 299v5M247.5 299v5M248.5 299v5M249.5 299v5M250.5 299v5M251.5 299v5M252.5 299v5M253.5 299v5M254.5 299v5M255.5 299v5M256.5 299v5M257.5 299v5M258.5 299v5M259.5 299v5M260.5 299v5M261.5 299v5M262.5 299v5M263.5 299v5M264.5 299v5M265.5 299v5M266.5 299v5M267.5 299v5M268.5 299v5M269.5 299v5M270.5 299v5M271.5 299v5M272.5 299v5M273.5 299v5M274.5 299v5M275.5 299v5M276.5 299v5M277.5 299v5M278.5 299v5M279.5 299v5M280.5 299v5M281.5 299v5M282.5 299v5M283.5 299v5M284.5 299v5M285.5 299v5M286.5 299v5M287.5 299v5M288.5 299v5M289.5 299v5M290.5 299v5M291.5 299v5M292.5 299v5M293.5 299v5M294.5 299v5M295.5 299v5M296.5 299v5M297.5 299v5M298.5 299v5M299.5 299v5M300.5 299v5M301.5 299v5M302.5 299v5M303.5 299v5M304.5 299v5M305.5 299v5M306.5 299v5M307.5 299v5M308.5 299v5M309.5 299v5M310.5 299v5M311.5 299v5M312.5 299v5M313.5 299v5M314.5 299v5M315.5 299v5M316.5 299v5M317.5 299v5M318.5 299v5M319.5 299v5M320.5 299v5M321.5 299v5M322.5 299v5M323.5 299v5M324.5 299v5M325.5 299v5M326.5 299v5M327.5 299v5M328.5 299v5M329.5 299v5M330.5 299v5M331.5 299v5M332.5 299v5M333.5 299v5M334.5 299v5M335.5 299v5M336.5 299v5M337.5 299v5M338.5 299v5M339.5 299v5M340.5 299v5M341.5 299v5M342.5 299v5M343.5 299v5M344.5 299v5M345.5 299v5M346.5 299v5M347.5 299v5M348.5 299v5M349.5 299v5M350.5 299v5M351.5 299v5M352.5 299v5M353.5 299v5M354.5 299v5M355.5 299v5M356.5 299v5M357.5 299v5M358.5 299v5M359.5 299v5M360.5 299v5M361.5 299v5M362.5 299v5M363.5 299v5M364.5 299v5M365.5 299v5M366.5 299v5M367.5 299v5M368.5 299v5M369.5 299v5M370.5 299v5M371.5 299v5M372.5 299v5M373.5 299v5M374.5 299v5M375.5 299v5M376.5 299v5M377.5 299v5M378.5 299v5M379.5 299v5M380.5 299v5M381.5 299v5M382.5 299v5M383.5 299v5M384.5 299v5M385.5 299v5M386.5 299v5M387.5 299v5M388.5 299v5M389.5 299v5M390.5 299v5M391.5 299v5M392.5 299v5M393.5 299v5M394.5 299v5M395.5 299v5M396.5 299v5M397.5 299v5M398.5 299v5M399.5 299v5M400.5 299v5M401.5 299v5M402.5 299v5M403.5 299v5M404.5 299v5M405.5 299v5M406.5 299v5M407.5 299v5M408.5 299v5M409.5 299v5M410.5 299v5M411.5 299v5M412.5 299v5M413.5 299v5M414.5 299v5M415.5 299v5M416.5 299v5M417.5 299v5M418.5 299v5M419.5 299v5M420.5 299v5M421.5 299v5M422.5 299v5M423.5 299v5M424.5 299v5M425.5 299v5M426.5 299v5M427.5 299v5M428.5 299v5M429.5 299v5M430.5 299v5M431.5 299v5M432.5 299v5M433.5 299v5M434.5 299v5M435.5 299v5M436.5 299v5M437.5 299v5M438.5 299v5M439.5 299v5M440.5 299v5M441.5 299v5M442.5 299v5M443.5 299v5M444.5 299v5M445.5 299v5M446.5 299v5M447.5 299v5M448.5 299v5M449.5 299v5M450.5 299v5M451.5 299v5M452.5 299v5M453.5 299v5M454.5 299v5M455.5 299v5M456.5 299v5M457.5 299v5M458.5 299v5M459.5 299v5M460.5 299v5M461.5 299v5M462.5 299v5M463.5 299v5M464.5 299v5M465.5 299v5M466.5 299v5M467.5 299v5M468.5 299v5M469.5 299v5M470.5 299v5M471.5 299v5M472.5 299v5M473.5 299v5M474.5 299v5M475.5 299v5M476.5 299v5M477.5 299v5M478.5 299v5M479.5 299v5M480.5 299v5M481.5 299v5M482.5 299v5M483.5 299v5M484.5 299v5M485.5 299v5M486.5 299v5M487.5 299v5M488.5 299v5M489.5 299v5M490.5 299v5M491.5 299v5M492.5 299v5M493.5 299v5M494.5 299v5M495.5 299v5M496.5 299v5M497.5 299v5M498.5 299v5M499.5 299v5M500.5 299v5M501.5 299v5M502.5 299v5M503.5 299v5M504.5 299v5M505.5 299v5M506.5 299v5M507.5 299v5M508.5 299v5M509.5 299v5M510.5 299v5M511.5 299v5M512.5 299v5M513.5 299v5M514.5 299v5M515.5 299v5M516.5 299v5M517.5 299v5M518.5 299v5M519.5 299v5M520.5 299v5M521.5 299v5M522.5 299v5M523.5 299v5M524.5 299v5M525.5 299v5M526.5 299v5M527.5 299v5M528.5 299v5M529.5 299v5M530.5 299v5M531.5 299v5M532.5 299v5M533.5 299v5M534.5 299v5M535.5 299v5M536.5 299v5M537.5 299v5M538.5 299v5M539.5 299v5M540.5 299v5M541.5 299v5M542.5 299v5M543.5 299v5M544.5 299v5M545.5 299v5M546.5 299v5M547.5 299v5M548.5 299v5M549.5 299v5M550.5 299v5M551.5 299v5M552.5 299v5M553.5 299v5M554.5 299v5M555.5 299v5M556.5 299v5M557.5 299v5M558.5 299v5M559.5 299v5M560.5 299v5M561.5 299v5M562.5 299v5M563.5 299v5M564.5 299v5M565.5 299v5M566.5 299v5M567.5 299v5M568.5 299v5M569.5 299v5M570.5 299v5M571.5 299v5M572.5 299v5M573.5 299v5M574.5 299v5M575.5 299v5M576.5 299v5M577.5 299v5M578.5 299v5M579.5 299v5M580.5 299v5M581.5 299v5M582.5 299v5M583.5 299v5M584.5 299v5M585.5 299v5M586.5 299v5M587.5 299v5M588.5 299v5M589.5 299v5M590.5 299v5M591.5 299v5M592.5 299v5M593.5 299v5M594.5 299v5M595.5 299v5M596.5 299v5M597.5 299v5M598.5 299v5M599.5 299v5M600.5 299v5M601.5 299v5M602.5 299v5M603.5 299v5M604.5 299v5M605.5 299v5M606.5 299v5M607.5 299v5M608.5 299v5M609.5 299v5M610.5 299v5M611.5 299v5M612.5 299v5M613.5 299v5M614.5 299v5M615.5 299v5M616.5 299v5M617.5 299v5M618.5 299v5M619.5 299v5M620.5 299v5M621.5 299v5M622.5 299v5M623.5 299v5M624.5 299v5M625.5 299v5M626.5 299v5M627.5 299v5M628.5 299v5M629.5 299v5M630.5 299v5M631.5 299v5M632.5 299v5M633.5 299v5M634.5 299v5M635.5 299v5M636.5 299v5M637.5 299v5M638.5 299v5M639.5 299v5M640.5 299v5M641.5 299v5M642.5 299v5M643.5 299v5M644.5 299v5M645.5 299v5M646.5 299v5M647.5 299v5M648.5 299v5M649.5 299v5M650.5 299v5M651.5 299v5M652.5 299v5M653.5 299v5M654.5 299v5M655.5 299v5M656.5 299v5M657.5 299v5M658.5 299v5M659.5 299v5M660.5 299v5M661.5 299v5M662.5 299v5M663.5 299v5M664.5 299v5M665.5 299v5M666.5 299v5M667.5 299v5M668.5 299v5M669.5 299v5M670.5 299v5M671.5 299v5M672.5 299v5M673.5 299v5M674.5 299v5M675.5 299v5M676.5 299v5M677.5 299v5M678.5 299v5M679.5 299v5M680.5 299v5M681.5 299v5M682.5 299v5M683.5 299v5M684.5 299v5"/></svg>
<div class="a" style="left:0;top:0;width:80px;height:1px;background:#444"></div>
<div class="a" style="left:0;top:32px;width:800px;height:1px;background:#3a3a3a"></div>
<!-- WAIT -->
<div class="a" style="left:81px;top:4px;width:51px;height:27px;border:1px solid #0a5a0a;border-radius:5px"></div>
<div class="a" style="left:83px;top:6px;width:47px;height:23px;border:1px solid #18d018;border-radius:3px;background:linear-gradient(#0c4c0c,#031a03 60%,#000)"></div>
<!-- H -->
<div class="a" style="left:133px;top:7px;width:73px;height:23px;border:1px solid #3a3a3a;border-top-color:#585858;border-radius:3px;background:linear-gradient(#2a2a2a,#111)"></div>
<div class="a" style="left:148px;top:9px;width:56px;height:19px;background:#000;border-radius:2px"></div>
<!-- timeline -->
<div class="a" style="left:262px;top:7px;width:241px;height:23px;border:1px solid #3a3a3a;border-top-color:#585858;border-radius:3px;background:linear-gradient(#2e2e2e,#141414)"></div>
<svg class="a" style="left:0;top:0" width="800" height="40">
<rect x="266" y="19" width="234" height="9" fill="#7a7a7a"/>
<rect x="354" y="19" width="58" height="9" fill="#000"/>
<rect x="354" y="19" width="1" height="9" fill="#1a3a6a"/><rect x="411" y="19" width="1" height="9" fill="#1a3a6a"/>
<polyline points="266,22.13 267,23.25 268,24.38 269,25.20 270,25.50 271,25.20 272,24.37 273,23.25 274,22.12 275,21.30 276,21.00 277,21.30 278,22.12 279,23.25 280,24.38 281,25.20 282,25.50 283,25.20 284,24.37 285,23.25 286,22.12 287,21.30 288,21.00 289,21.30 290,22.12 291,23.25 292,24.38 293,25.20 294,25.50 295,25.20 296,24.38 297,23.25 298,22.13 299,21.30 300,21.00 301,21.30 302,22.13 303,23.25 304,24.38 305,25.20 306,25.50 307,25.20 308,24.38 309,23.25 310,22.12 311,21.30 312,21.00 313,21.30 314,22.12 315,23.25 316,24.38 317,25.20 318,25.50 319,25.20 320,24.37 321,23.25 322,22.12 323,21.30 324,21.00 325,21.30 326,22.13 327,23.25 328,24.38 329,25.20 330,25.50 331,25.20 332,24.38 333,23.25 334,22.12 335,21.30 336,21.00 337,21.30 338,22.12 339,23.25 340,24.38 341,25.20 342,25.50 343,25.20 344,24.38 345,23.25 346,22.12 347,21.30 348,21.00 349,21.30 350,22.12 351,23.25 352,24.38 353,25.20 354,25.50 355,25.20 356,24.38 357,23.25 358,22.12 359,21.30 360,21.00 361,21.30 362,22.12 363,23.25 364,24.38 365,25.20 366,25.50 367,25.20 368,24.38 369,23.25 370,22.13 371,21.30 372,21.00 373,21.30 374,22.12 375,23.25 376,24.37 377,25.20 378,25.50 379,25.20 380,24.38 381,23.25 382,22.12 383,21.30 384,21.00 385,21.30 386,22.12 387,23.25 388,24.38 389,25.20 390,25.50 391,25.20 392,24.38 393,23.25 394,22.13 395,21.30 396,21.00 397,21.30 398,22.13 399,23.25 400,24.38 401,25.20 402,25.50 403,25.20 404,24.38 405,23.25 406,22.12 407,21.30 408,21.00 409,21.30 410,22.12 411,23.25 412,24.37 413,25.20 414,25.50 415,25.20 416,24.38 417,23.25 418,22.12 419,21.30 420,21.00 421,21.30 422,22.12 423,23.25 424,24.37 425,25.20 426,25.50 427,25.20 428,24.38 429,23.25 430,22.13 431,21.30 432,21.00 433,21.30 434,22.12 435,23.25 436,24.37 437,25.20 438,25.50 439,25.20 440,24.38 441,23.25 442,22.12 443,21.30 444,21.00 445,21.30 446,22.12 447,23.25 448,24.38 449,25.20 450,25.50 451,25.20 452,24.38 453,23.25 454,22.12 455,21.30 456,21.00 457,21.30 458,22.13 459,23.25 460,24.37 461,25.20 462,25.50 463,25.20 464,24.38 465,23.25 466,22.13 467,21.30 468,21.00 469,21.30 470,22.12 471,23.25 472,24.37 473,25.20 474,25.50 475,25.20 476,24.38 477,23.25 478,22.13 479,21.30 480,21.00 481,21.30 482,22.12 483,23.25 484,24.38 485,25.20 486,25.50 487,25.20 488,24.38 489,23.25 490,22.12 491,21.30 492,21.00 493,21.30 494,22.12 495,23.25 496,24.37 497,25.20 498,25.50 499,25.20 500,24.38" fill="none" stroke="#f0f0f0" stroke-width="1"/>
<path d="M369,9 h8 v7 l-4,3.5 l-4,-3.5 z" fill="#f08a30"/>
<path d="M370.5,11 h5 v1.5 h-1.8 v5 h-1.4 v-5 h-1.8z" fill="#000"/>
</svg>
<!-- D -->
<div class="a" style="left:515px;top:7px;width:153px;height:23px;border:1px solid #3a3a3a;border-top-color:#585858;border-radius:3px;background:linear-gradient(#2a2a2a,#111)"></div>
<div class="a" style="left:536px;top:9px;width:130px;height:19px;background:#000;border-radius:2px"></div>
<!-- T -->
<div class="a" style="left:680px;top:7px;width:115px;height:23px;border:1px solid #3a3a3a;border-top-color:#585858;border-radius:3px;background:linear-gradient(#222,#000)"></div>
<div class="a" style="left:720px;top:13px;width:11px;height:11px;background:#00e8f0;border-radius:2px"></div>
<div class="t" style="left:721px;top:12px;font-size:12.5px;color:#000">2</div>

<div class="a" style="left:-1px;top:37px;width:61px;height:414px;border:1px solid #484848"></div>
<div class="a" style="left:12px;top:58px;width:40px;height:40px;border-radius:4px;background:linear-gradient(#333,#1a1a1a 40%,#0c0c0c);border:1px solid #262626;border-top-color:#555;box-shadow:inset 0 1px 0 #3a3a3a"></div>
<svg class="a" style="left:12px;top:58px" width="40" height="40"><path d="M7,28.5 H11.5 V7.5 H17.5 V28.5 H24 V7.5 H30.5 V28.5 H35.5" fill="none" stroke="#fff" stroke-width="1.2"/><path d="M9,16.5 h5 M22,16.5 h5" stroke="#00e0f0" stroke-width="1.3"/><path d="M13,31.5 H24" stroke="#00e0f0" stroke-width="1.3"/><path d="M11,31.5 l3.5,-2.7 v5.4z M25.5,31.5 l-3.5,-2.7 v5.4z" fill="#00e0f0"/></svg>
<div class="a" style="left:12px;top:123px;width:40px;height:40px;border-radius:4px;background:linear-gradient(#333,#1a1a1a 40%,#0c0c0c);border:1px solid #262626;border-top-color:#555;box-shadow:inset 0 1px 0 #3a3a3a"></div>
<svg class="a" style="left:12px;top:123px" width="40" height="40"><path d="M9,7.5 H14.5 V28.5 H24.5 V7.5 H30.5 V28.5 H35.5" fill="none" stroke="#fff" stroke-width="1.2"/><path d="M12,17.5 h5 M28,17.5 h5" stroke="#00e0f0" stroke-width="1.3"/><path d="M16,31.5 H29" stroke="#00e0f0" stroke-width="1.3"/><path d="M14,31.5 l3.5,-2.7 v5.4z M31,31.5 l-3.5,-2.7 v5.4z" fill="#00e0f0"/><path d="M7.5,32 L13,26" stroke="#00e0f0" stroke-width="1"/><path d="M7.5,24.5 l1.6,-1 v4.5" fill="none" stroke="#00e0f0" stroke-width="1"/></svg>
<div class="a" style="left:12px;top:188px;width:40px;height:40px;border-radius:4px;background:linear-gradient(#333,#1a1a1a 40%,#0c0c0c);border:1px solid #262626;border-top-color:#555;box-shadow:inset 0 1px 0 #3a3a3a"></div>
<svg class="a" style="left:12px;top:188px" width="40" height="40"><path d="M9,31.5 H16 L27.5,8.5 H34" fill="none" stroke="#fff" stroke-width="1.2"/><path d="M14,27.5 h7 M22,12.5 h7" stroke="#00e0f0" stroke-width="1.3"/><path d="M21.5,30.5 H27.5" stroke="#00e0f0" stroke-width="1.3"/><path d="M19.5,30.5 l3,-2.5 v5z M29.5,30.5 l-3,-2.5 v5z" fill="#00e0f0"/></svg>
<div class="a" style="left:12px;top:253px;width:40px;height:40px;border-radius:4px;background:linear-gradient(#333,#1a1a1a 40%,#0c0c0c);border:1px solid #262626;border-top-color:#555;box-shadow:inset 0 1px 0 #3a3a3a"></div>
<svg class="a" style="left:12px;top:253px" width="40" height="40"><path d="M9,8.5 H16 L27.5,31.5 H34" fill="none" stroke="#fff" stroke-width="1.2"/><path d="M14,12.5 h7 M22,27.5 h7" stroke="#00e0f0" stroke-width="1.3"/><path d="M16,30.5 H21" stroke="#00e0f0" stroke-width="1.3"/><path d="M14,30.5 l3,-2.5 v5z M23,30.5 l-3,-2.5 v5z" fill="#00e0f0"/></svg>
<div class="a" style="left:12px;top:318px;width:40px;height:40px;border-radius:4px;background:linear-gradient(#333,#1a1a1a 40%,#0c0c0c);border:1px solid #262626;border-top-color:#555;box-shadow:inset 0 1px 0 #3a3a3a"></div>
<svg class="a" style="left:12px;top:318px" width="40" height="40"><path d="M7,24.5 H14.5 V8.5 H27.5 V24.5 H35.5" fill="none" stroke="#fff" stroke-width="1.2"/><path d="M12,16.5 h5 M25,16.5 h5" stroke="#00e0f0" stroke-width="1.3"/><path d="M16,28.5 H26" stroke="#00e0f0" stroke-width="1.3"/><path d="M14,28.5 l3.5,-2.7 v5.4z M28,28.5 l-3.5,-2.7 v5.4z" fill="#00e0f0"/></svg>
<div class="a" style="left:12px;top:383px;width:40px;height:40px;border-radius:4px;background:linear-gradient(#333,#1a1a1a 40%,#0c0c0c);border:1px solid #262626;border-top-color:#555;box-shadow:inset 0 1px 0 #3a3a3a"></div>
<svg class="a" style="left:12px;top:383px" width="40" height="40"><path d="M7,8.5 H14.5 V24.5 H27.5 V8.5 H35.5" fill="none" stroke="#fff" stroke-width="1.2"/><path d="M12,16.5 h5 M25,16.5 h5" stroke="#00e0f0" stroke-width="1.3"/><path d="M16,28.5 H26" stroke="#00e0f0" stroke-width="1.3"/><path d="M14,28.5 l3.5,-2.7 v5.4z M28,28.5 l-3.5,-2.7 v5.4z" fill="#00e0f0"/></svg>
<div class="a" style="left:1px;top:198px;width:6px;height:6px;border-radius:50%;background:#d8d8d8"></div>
<div class="a" style="left:2px;top:209px;width:4px;height:4px;border-radius:50%;background:#707070"></div>
<div class="a" style="left:2px;top:219px;width:4px;height:4px;border-radius:50%;background:#707070"></div>
<div class="a" style="left:2px;top:229px;width:4px;height:4px;border-radius:50%;background:#707070"></div>
<svg class="a" style="left:0;top:0" width="800" height="480">
<path d="M800,37.5 H687.5 V116 L701.5,129 V437.5 H800" fill="none" stroke="#484848" stroke-width="1"/>
<path d="M686.2,134.4 L690.5,130 H701.3 V138.8 H690.5 Z" fill="#ff8c10"/>
<path d="M690.4,132.9 H695 M692.7,132.9 V137.6" fill="none" stroke="#000" stroke-width="1.3"/>
<path d="M696.8,133.4 Q697,132.4 698.4,132.4 Q700,132.4 700,133.7 Q700,134.8 696.8,137 H700.2" fill="none" stroke="#000" stroke-width="1.1"/>
</svg>
<div class="t" style="left:688.5px;top:98.5px;font-size:12.4px;color:#fff;transform:rotate(-90deg);transform-origin:0 0">Trigger</div>
<div class="a" style="left:686px;top:91px;width:1px;height:1px;background:#f08a10"></div>
<div class="a" style="left:704px;top:41px;width:88px;height:62px;border-radius:4px;background:linear-gradient(#3c3c3c,#222 25%,#101010 45%,#0a0a0a);border:1px solid #2a2a2a;border-top-color:#666"></div>
<div class="a" style="left:707px;top:61px;width:82px;height:38px;border-radius:4px;background:#000;border:1px solid #5a5a5a"></div>
<svg class="a" style="left:708px;top:78px" width="8" height="12"><path d="M1,6 L7,0.5 V11.5 Z" fill="#00c8f0"/></svg>
<div class="a" style="left:704px;top:107px;width:88px;height:62px;border-radius:4px;background:linear-gradient(#3c3c3c,#222 25%,#101010 45%,#0a0a0a);border:1px solid #2a2a2a;border-top-color:#666"></div>
<div class="a" style="left:707px;top:127px;width:82px;height:38px;border-radius:4px;background:#000;border:1px solid #5a5a5a"></div>
<svg class="a" style="left:708px;top:144px" width="8" height="12"><path d="M1,6 L7,0.5 V11.5 Z" fill="#00c8f0"/></svg>
<div class="a" style="left:704px;top:173px;width:88px;height:62px;border-radius:4px;background:linear-gradient(#3c3c3c,#222 25%,#101010 45%,#0a0a0a);border:1px solid #2a2a2a;border-top-color:#666"></div>
<div class="a" style="left:707px;top:193px;width:82px;height:38px;border-radius:4px;background:#000;border:1px solid #5a5a5a"></div>
<div class="a" style="left:704px;top:239px;width:88px;height:62px;border-radius:4px;background:linear-gradient(#3c3c3c,#222 25%,#101010 45%,#0a0a0a);border:1px solid #2a2a2a;border-top-color:#666"></div>
<div class="a" style="left:707px;top:259px;width:82px;height:38px;border-radius:4px;background:#000;border:1px solid #5a5a5a"></div>
<svg class="a" style="left:708px;top:276px" width="8" height="12"><path d="M1,6 L7,0.5 V11.5 Z" fill="#00c8f0"/></svg>
<div class="a" style="left:704px;top:305px;width:88px;height:62px;border-radius:4px;background:linear-gradient(#3c3c3c,#222 25%,#101010 45%,#0a0a0a);border:1px solid #2a2a2a;border-top-color:#666"></div>
<div class="a" style="left:707px;top:325px;width:82px;height:38px;border-radius:4px;background:#000;border:2px solid #10b0f0"></div>
<div class="a" style="left:704px;top:371px;width:88px;height:62px;border-radius:4px;background:linear-gradient(#3c3c3c,#222 25%,#101010 45%,#0a0a0a);border:1px solid #2a2a2a;border-top-color:#666"></div>
<div class="a" style="left:707px;top:391px;width:82px;height:38px;border-radius:4px;background:#000;border:1px solid #5a5a5a"></div>
<svg class="a" style="left:708px;top:408px" width="8" height="12"><path d="M1,6 L7,0.5 V11.5 Z" fill="#00c8f0"/></svg>
<svg class="a" style="left:0;top:0" width="800" height="480"><path d="M744,221.5 H747.5 V209.5 H752.5 V221.5 H756" fill="none" stroke="#fff" stroke-width="1.2"/><path d="M720.5,330 A4.6,4.6 0 1 1 715.6,335" fill="none" stroke="#10c0f0" stroke-width="2"/><path d="M711.8,335 L715.6,330.5 L719.4,335z" fill="#10c0f0"/><path d="M777,331 H786 L781.5,336z" fill="#10c0f0"/><path d="M778.5,340.5 V338 H784.5 V340.5" fill="none" stroke="#10c0f0" stroke-width="1.1"/><rect x="780" y="339.3" width="1.2" height="1.2" fill="#10c0f0"/><rect x="782" y="339.3" width="1.2" height="1.2" fill="#10c0f0"/><g fill="none" stroke="#fff" stroke-width="1.1"><path d="M733,410.5 H767 M733,416.5 H767"/><path d="M738.2,408.5 H742.5 V419.5 H748.5 V408.5 H753.5 V413.5 H758.5 V408.5 H760"/><path d="M735.5,412.5 V420.5 M733.5,414.5 l2,-2 l2,2 M733.5,418.5 l2,2 l2,-2"/><path d="M764.5,406 V414.5 M762.5,408 l2,-2 l2,2 M762.5,412.5 l2,2 l2,-2"/></g></svg>
<div class="a" style="left:793px;top:208px;width:6px;height:6px;border-radius:50%;background:#ccc"></div>
<div class="a" style="left:794px;top:219px;width:4px;height:4px;border-radius:50%;background:#666"></div>
<div class="a" style="left:60px;top:398px;width:128px;height:55px;border:1px solid #5a5a5a;border-radius:5px;background:#000"></div>
<div class="a" style="left:62.5px;top:414.5px;width:14px;height:14px;border-radius:4px;background:radial-gradient(circle,#e020e0 55%,#c010c0 100%);box-shadow:0 0 2px 1px #c010c0"></div>
<div class="t" style="left:65.6px;top:415.5px;font-size:12px;color:#000;font-family:'Liberation Sans'">3</div>
<svg class="a" style="left:60px;top:398px" width="128" height="54"><path d="M21.5,27 V43" stroke="#e020e0" stroke-width="1.2"/><path d="M19,28.5 l2.5,-3.5 l2.5,3.5z M19,41.5 l2.5,3.5 l2.5,-3.5z" fill="#e020e0"/><path d="M24,24.5 H47" stroke="#e020e0" stroke-width="1" stroke-dasharray="1 1"/><path d="M24,45.5 H47" stroke="#e020e0" stroke-width="1" stroke-dasharray="1 1"/><path d="M25.3,42.2 H27.7 L30.5,45 H31.6 V25.5 H32.4 L34.8,27.5 H38.8 L39.6,30 V40.1 L41.1,42.5 H43.5 L46.7,45.2" fill="none" stroke="#fff" stroke-width="1.1"/><path d="M78.5,9 V13 M76.3,10 L80.7,12 M76.3,12 L80.7,10" stroke="#e020e0" stroke-width="1"/><path d="M84.2,9 V13 M82.0,10 L86.4,12 M82.0,12 L86.4,10" stroke="#e020e0" stroke-width="1"/><path d="M89.9,9 V13 M87.7,10 L92.10000000000001,12 M87.7,12 L92.10000000000001,10" stroke="#e020e0" stroke-width="1"/><path d="M95.6,9 V13 M93.39999999999999,10 L97.8,12 M93.39999999999999,12 L97.8,10" stroke="#e020e0" stroke-width="1"/><path d="M101.3,9 V13 M99.1,10 L103.5,12 M99.1,12 L103.5,10" stroke="#e020e0" stroke-width="1"/><path d="M78.5,21 V25 M76.3,22 L80.7,24 M76.3,24 L80.7,22" stroke="#e020e0" stroke-width="1"/><path d="M84.2,21 V25 M82.0,22 L86.4,24 M82.0,24 L86.4,22" stroke="#e020e0" stroke-width="1"/><path d="M89.9,21 V25 M87.7,22 L92.10000000000001,24 M87.7,24 L92.10000000000001,22" stroke="#e020e0" stroke-width="1"/><path d="M95.6,21 V25 M93.39999999999999,22 L97.8,24 M93.39999999999999,24 L97.8,22" stroke="#e020e0" stroke-width="1"/><path d="M101.3,21 V25 M99.1,22 L103.5,24 M99.1,24 L103.5,22" stroke="#e020e0" stroke-width="1"/><path d="M78.5,33 V37 M76.3,34 L80.7,36 M76.3,36 L80.7,34" stroke="#e020e0" stroke-width="1"/><path d="M84.2,33 V37 M82.0,34 L86.4,36 M82.0,36 L86.4,34" stroke="#e020e0" stroke-width="1"/><path d="M89.9,33 V37 M87.7,34 L92.10000000000001,36 M87.7,36 L92.10000000000001,34" stroke="#e020e0" stroke-width="1"/><path d="M95.6,33 V37 M93.39999999999999,34 L97.8,36 M93.39999999999999,36 L97.8,34" stroke="#e020e0" stroke-width="1"/><path d="M101.3,33 V37 M99.1,34 L103.5,36 M99.1,36 L103.5,34" stroke="#e020e0" stroke-width="1"/><path d="M78.5,45 V49 M76.3,46 L80.7,48 M76.3,48 L80.7,46" stroke="#e020e0" stroke-width="1"/><path d="M84.2,45 V49 M82.0,46 L86.4,48 M82.0,48 L86.4,46" stroke="#e020e0" stroke-width="1"/><path d="M89.9,45 V49 M87.7,46 L92.10000000000001,48 M87.7,48 L92.10000000000001,46" stroke="#e020e0" stroke-width="1"/><path d="M95.6,45 V49 M93.39999999999999,46 L97.8,48 M93.39999999999999,48 L97.8,46" stroke="#e020e0" stroke-width="1"/><path d="M101.3,45 V49 M99.1,46 L103.5,48 M99.1,48 L103.5,46" stroke="#e020e0" stroke-width="1"/></svg>
<div class="a" style="left:188px;top:398px;width:128px;height:55px;border:1px solid #5a5a5a;border-radius:5px;background:#000"></div>
<div class="a" style="left:190.5px;top:414.5px;width:14px;height:14px;border-radius:4px;background:radial-gradient(circle,#00e0f0 55%,#00a0b0 100%);box-shadow:0 0 2px 1px #00a0b0"></div>
<div class="t" style="left:193.6px;top:415.5px;font-size:12px;color:#000;font-family:'Liberation Sans'">2</div>
<svg class="a" style="left:188px;top:398px" width="128" height="54"><path d="M21.5,27 V43" stroke="#00e0f0" stroke-width="1.2"/><path d="M19,28.5 l2.5,-3.5 l2.5,3.5z M19,41.5 l2.5,3.5 l2.5,-3.5z" fill="#00e0f0"/><path d="M24,24.5 H47" stroke="#00e0f0" stroke-width="1" stroke-dasharray="1 1"/><path d="M24,45.5 H47" stroke="#00e0f0" stroke-width="1" stroke-dasharray="1 1"/><path d="M25.3,42.2 H27.7 L30.5,45 H31.6 V25.5 H32.4 L34.8,27.5 H38.8 L39.6,30 V40.1 L41.1,42.5 H43.5 L46.7,45.2" fill="none" stroke="#fff" stroke-width="1.1"/></svg>
<svg class="a" style="left:0;top:0" width="800" height="480"><defs><pattern id="h1" width="3" height="3" patternUnits="userSpaceOnUse" patternTransform="rotate(-45)"><rect width="3" height="3" fill="#141400"/><rect width="0.8" height="3" fill="#38381a"/></pattern><pattern id="h3" width="3" height="3" patternUnits="userSpaceOnUse" patternTransform="rotate(-45)"><rect width="3" height="3" fill="#1a001a"/><rect width="0.8" height="3" fill="#40204a"/></pattern><pattern id="h4" width="3" height="3" patternUnits="userSpaceOnUse" patternTransform="rotate(-45)"><rect width="3" height="3" fill="#000c1a"/><rect width="0.8" height="3" fill="#1a3650"/></pattern></defs><path d="M-2.00,454 H113.00 L100.00,480 H-15.00 Z" fill="url(#h1)"/><path d="M29.50,456.6 H110.00 L99.50,477.6 H19.00 Z" fill="#000" stroke="#3a3a12" stroke-width="1.6"/><path d="M114.67,454 H229.67 L216.67,480 H101.67 Z" fill="#00f0f8"/><path d="M146.17,456.2 H226.67 L215.97,477.8 H135.47 Z" fill="#000"/><path d="M231.34,454 H346.34 L333.34,480 H218.34 Z" fill="url(#h3)"/><path d="M262.84,456.6 H343.34 L332.84,477.6 H252.34 Z" fill="#000" stroke="#4a2050" stroke-width="1.2"/><path d="M348.01,454 H463.01 L450.01,480 H335.01 Z" fill="url(#h4)"/><path d="M379.51,456.6 H460.01 L449.51,477.6 H369.01 Z" fill="#000" stroke="#183a58" stroke-width="1.2"/><path d="M10,460.2 H12.5 V474.8 H10 V464.2 L7.4,466.2 L5.9,465 L9,461.2 Z" fill="#f0f000"/><path d="M700.5,480 L713,454.5 H800" fill="none" stroke="#505050" stroke-width="1"/><rect x="32" y="461.5" width="7" height="1.2" fill="#f0f000"/><path d="M32,466 h7" stroke="#f0f000" stroke-width="1.2" stroke-dasharray="1 1"/><rect x="148" y="461.5" width="7" height="1.2" fill="#00e0f0"/><path d="M148,466 h7" stroke="#00e0f0" stroke-width="1.2" stroke-dasharray="1 1"/><rect x="265" y="461.5" width="7" height="1.2" fill="#909090"/><path d="M265,466 h7" stroke="#909090" stroke-width="1.2" stroke-dasharray="1 1"/><rect x="382" y="461.5" width="7" height="1.2" fill="#909090"/><path d="M382,466 h7" stroke="#909090" stroke-width="1.2" stroke-dasharray="1 1"/><g fill="#e8e8e8" stroke="#e8e8e8"><path d="M742,466.3 H758.5" stroke-width="1.2"/><ellipse cx="741.4" cy="466.3" rx="1.6" ry="2" stroke="none"/><path d="M760.2,466.3 l-2.5,-1.8 v3.6z" stroke="none"/><path d="M745.5,466.3 C747.5,464 749,462.2 752,462.2" fill="none" stroke-width="1.1"/><circle cx="753.2" cy="462.1" r="1.4" stroke="none"/><path d="M748,466.3 C749.5,468.5 751,470.6 753.5,470.6" fill="none" stroke-width="1.1"/><rect x="753.3" y="469.3" width="2.6" height="2.6" rx="0.6" stroke="none"/></g><g fill="none" stroke="#e8e8e8" stroke-width="1.3" stroke-linejoin="round"><path d="M765.5,464.8 L772.6,457.6 L775.2,459 V470.8 L772.6,472.2 Z"/><path d="M775.2,458.5 V471.5"/><circle cx="773" cy="465" r="1.1" stroke-width="0.9"/><path d="M777.2,462.6 L781,459.2 M777.6,465.6 H782 M777.2,468.2 L781,471.6" stroke-width="0.9"/></g></svg>
<div class="a" style="left:530px;top:40px;width:150px;height:24px;border:2px solid #909090;border-radius:7px;background:#000"></div>
<div class="a" style="left:533.5px;top:46.5px;width:12px;height:12px;border-radius:4px;background:#f8f800;box-shadow:0 0 2px 1.5px #b0b000"></div>
<svg class="a" style="left:0;top:0" width="800" height="480"><path d="M539.6,49.2 V57 M537.2,51.3 L539.6,49.2" fill="none" stroke="#000" stroke-width="1.2"/><path d="M548.4,56.5 H553.2 V47.9 H558 V56.5 H563.2 V47.9 H568 V56.5 H573.3 V47.9 H577.7 V56.5 H583.4 V47.9 H588.2 V56.5 H593.4" fill="none" stroke="#fff" stroke-width="1.1"/></svg>
<svg class="a" style="left:0;top:0" width="800" height="480">
<path d="M246,44 H255 V52.5 L250.5,57 L246,52.5 Z" fill="#ff8c10"/>
<path d="M247.5,45.5 h6 v1.6 h-2.2 v6 h-1.6 v-6 h-2.2z" fill="#000"/>
<path d="M379.5,38.5 H389.5 L384.5,44.5 Z" fill="#ff8c10"/>
<path d="M69,213.8 H79.8 L83.8,218.3 L79.8,222.8 H69 Z" fill="#00f0f8"/>
<path d="M72.3,217 Q72.5,215.6 74.4,215.6 Q76.5,215.6 76.5,217.3 Q76.5,218.6 72.2,221.3 H77" fill="none" stroke="#000" stroke-width="1.1"/>
<path d="M68.9,302.9 H79.8 L83.9,307.4 L79.8,311.9 H68.9 Z" fill="#f0f000"/>
<path d="M75.4,304.2 V311 M73.2,306 L75.4,304.2" fill="none" stroke="#000" stroke-width="1.2"/>
</svg>
<div class="t" style="left:5.00px;top:6.90px;font-size:23px;color:#f6c200;font-family:'Liberation Serif', serif;letter-spacing:-0.500px;font-weight:bold;-webkit-text-stroke:0.7px #f6c200">RIGOL</div><div class="t" style="left:91.80px;top:10.40px;font-size:13.5px;color:#10f010;font-family:'Liberation Sans', sans-serif;letter-spacing:-1.100px;font-weight:bold">WA IT</div><div class="t" style="left:135.80px;top:11.30px;font-size:13.5px;color:#ffffff;font-family:'Liberation Sans', sans-serif;letter-spacing:0.000px;font-weight:bold">H</div><div class="t" style="left:158.20px;top:12.70px;font-size:13px;color:#ffffff;font-family:'Liberation Sans', sans-serif;letter-spacing:-0.300px">500us</div><div class="t" style="left:208.25px;top:6.60px;font-size:10.5px;color:#ffffff;font-family:'Liberation Sans', sans-serif;letter-spacing:0.000px">500MSa/s</div><div class="t" style="left:208.00px;top:18.15px;font-size:10.5px;color:#ffffff;font-family:'Liberation Sans', sans-serif;letter-spacing:0.125px">12.0M pts</div><div class="t" style="left:522.20px;top:12.60px;font-size:12px;color:#f08a10;font-family:'Liberation Sans', sans-serif;letter-spacing:0.000px;font-weight:bold">D</div><div class="t" style="left:558.20px;top:14.66px;font-size:12.2px;color:#ffffff;font-family:'Liberation Sans', sans-serif;letter-spacing:0.309px">1.34000000ms</div><div class="t" style="left:683.00px;top:12.00px;font-size:12.5px;color:#a0a0a0;font-family:'Liberation Sans', sans-serif;letter-spacing:0.000px;font-weight:bold">T</div><div class="t" style="left:691.90px;top:11.40px;font-size:13px;color:#00e8f0;font-family:'Liberation Sans', sans-serif;letter-spacing:-0.733px">Runt</div><div class="t" style="left:735.00px;top:13.70px;font-size:12px;color:#00e8f0;font-family:'Liberation Sans', sans-serif;letter-spacing:-0.133px">Δ96.0mV</div><div class="t" style="left:1.50px;top:40.14px;font-size:11.8px;color:#ffffff;font-family:'Liberation Sans', sans-serif;letter-spacing:0.244px">Horizontal</div><div class="t" style="left:13.30px;top:99.90px;font-size:12px;color:#00dcf0;font-family:'Liberation Sans', sans-serif;letter-spacing:0.120px">Period</div><div class="t" style="left:19.30px;top:165.40px;font-size:12px;color:#00dcf0;font-family:'Liberation Sans', sans-serif;letter-spacing:0.200px">Freq</div><div class="t" style="left:2.25px;top:230.60px;font-size:12px;color:#00dcf0;font-family:'Liberation Sans', sans-serif;letter-spacing:0.412px">Rise Time</div><div class="t" style="left:2.25px;top:295.60px;font-size:12px;color:#00dcf0;font-family:'Liberation Sans', sans-serif;letter-spacing:0.287px">Fall Time</div><div class="t" style="left:12.25px;top:359.90px;font-size:12px;color:#00dcf0;font-family:'Liberation Sans', sans-serif;letter-spacing:-0.180px">+Width</div><div class="t" style="left:14.30px;top:424.90px;font-size:12px;color:#00dcf0;font-family:'Liberation Sans', sans-serif;letter-spacing:-0.080px">-Width</div><div class="t" style="left:732.60px;top:43.22px;font-size:16px;color:#ffffff;font-family:'Liberation Sans', sans-serif;letter-spacing:-0.100px">Type</div><div class="t" style="left:733.90px;top:76.38px;font-size:15.6px;color:#ffffff;font-family:'Liberation Sans', sans-serif;letter-spacing:-0.400px">Runt</div><div class="t" style="left:724.90px;top:109.60px;font-size:16px;color:#ffffff;font-family:'Liberation Sans', sans-serif;letter-spacing:-0.120px">Source</div><div class="t" style="left:733.90px;top:142.50px;font-size:16px;color:#ffffff;font-family:'Liberation Sans', sans-serif;letter-spacing:0.100px">CH2</div><div class="t" style="left:723.90px;top:174.90px;font-size:16px;color:#ffffff;font-family:'Liberation Sans', sans-serif;letter-spacing:-0.114px">Polarity</div><div class="t" style="left:721.30px;top:240.90px;font-size:16px;color:#ffffff;font-family:'Liberation Sans', sans-serif;letter-spacing:-0.275px">Qualifier</div><div class="t" style="left:746.00px;top:274.80px;font-size:11px;color:#ffffff;font-family:'Liberation Sans', sans-serif;letter-spacing:0.000px">&gt;</div><div class="t" style="left:708.50px;top:306.80px;font-size:15.5px;color:#ffffff;font-family:'Liberation Sans', sans-serif;letter-spacing:0.160px">Lower Limit</div><div class="t" style="left:726.90px;top:339.40px;font-size:16px;color:#ffffff;font-family:'Liberation Sans', sans-serif;letter-spacing:-0.400px">1.25us</div><div class="t" style="left:722.30px;top:372.90px;font-size:16px;color:#ffffff;font-family:'Liberation Sans', sans-serif;letter-spacing:-0.200px">Window</div><div class="t" style="left:599.90px;top:47.20px;font-size:12px;color:#ffffff;font-family:'Liberation Sans', sans-serif;letter-spacing:0.311px">113.921kHz</div><div class="t" style="left:61.00px;top:402.60px;font-size:12px;color:#e020e0;font-family:'Liberation Sans', sans-serif;letter-spacing:-0.500px">Vpp</div><div class="t" style="left:189.00px;top:402.40px;font-size:12px;color:#00e0f0;font-family:'Liberation Sans', sans-serif;letter-spacing:-0.800px">Vpp</div><div class="t" style="left:114.00px;top:402.60px;font-size:12px;color:#e020e0;font-family:'Liberation Sans', sans-serif;letter-spacing:-0.333px">Cur:</div><div class="t" style="left:114.00px;top:414.60px;font-size:12px;color:#e020e0;font-family:'Liberation Sans', sans-serif;letter-spacing:-0.667px">Avg:</div><div class="t" style="left:113.00px;top:426.60px;font-size:12px;color:#e020e0;font-family:'Liberation Sans', sans-serif;letter-spacing:-1.000px">Max:</div><div class="t" style="left:113.00px;top:438.60px;font-size:12px;color:#e020e0;font-family:'Liberation Sans', sans-serif;letter-spacing:0.000px">Min:</div><div class="t" style="left:241.20px;top:402.80px;font-size:12px;color:#00e0f0;font-family:'Liberation Sans', sans-serif;letter-spacing:0.050px">Cur:348mV</div><div class="t" style="left:241.20px;top:414.80px;font-size:12px;color:#00e0f0;font-family:'Liberation Sans', sans-serif;letter-spacing:-0.075px">Avg:335mV</div><div class="t" style="left:240.20px;top:426.80px;font-size:12px;color:#00e0f0;font-family:'Liberation Sans', sans-serif;letter-spacing:-0.200px">Max:360mV</div><div class="t" style="left:240.20px;top:438.80px;font-size:12px;color:#00e0f0;font-family:'Liberation Sans', sans-serif;letter-spacing:0.175px">Min:308mV</div><div class="t" style="left:52.50px;top:461.50px;font-size:12.5px;color:#f0f000;font-family:'Liberation Sans', sans-serif;letter-spacing:-0.500px">2.00 V</div><div class="t" style="left:120.00px;top:457.85px;font-size:19.5px;color:#000000;font-family:'Liberation Sans', sans-serif;letter-spacing:0.000px">2</div><div class="t" style="left:167.00px;top:461.80px;font-size:12.5px;color:#00e0f0;font-family:'Liberation Sans', sans-serif;letter-spacing:0.125px">100mV</div><div class="t" style="left:238.00px;top:458.10px;font-size:19.5px;color:#787878;font-family:'Liberation Sans', sans-serif;letter-spacing:0.000px">3</div><div class="t" style="left:285.20px;top:461.50px;font-size:12.5px;color:#8a8a8a;font-family:'Liberation Sans', sans-serif;letter-spacing:-0.100px">200mV</div><div class="t" style="left:354.50px;top:458.10px;font-size:19.5px;color:#787878;font-family:'Liberation Sans', sans-serif;letter-spacing:0.000px">4</div><div class="t" style="left:402.20px;top:461.50px;font-size:12.5px;color:#8a8a8a;font-family:'Liberation Sans', sans-serif;letter-spacing:-0.400px">200mV</div>
</body></html>
